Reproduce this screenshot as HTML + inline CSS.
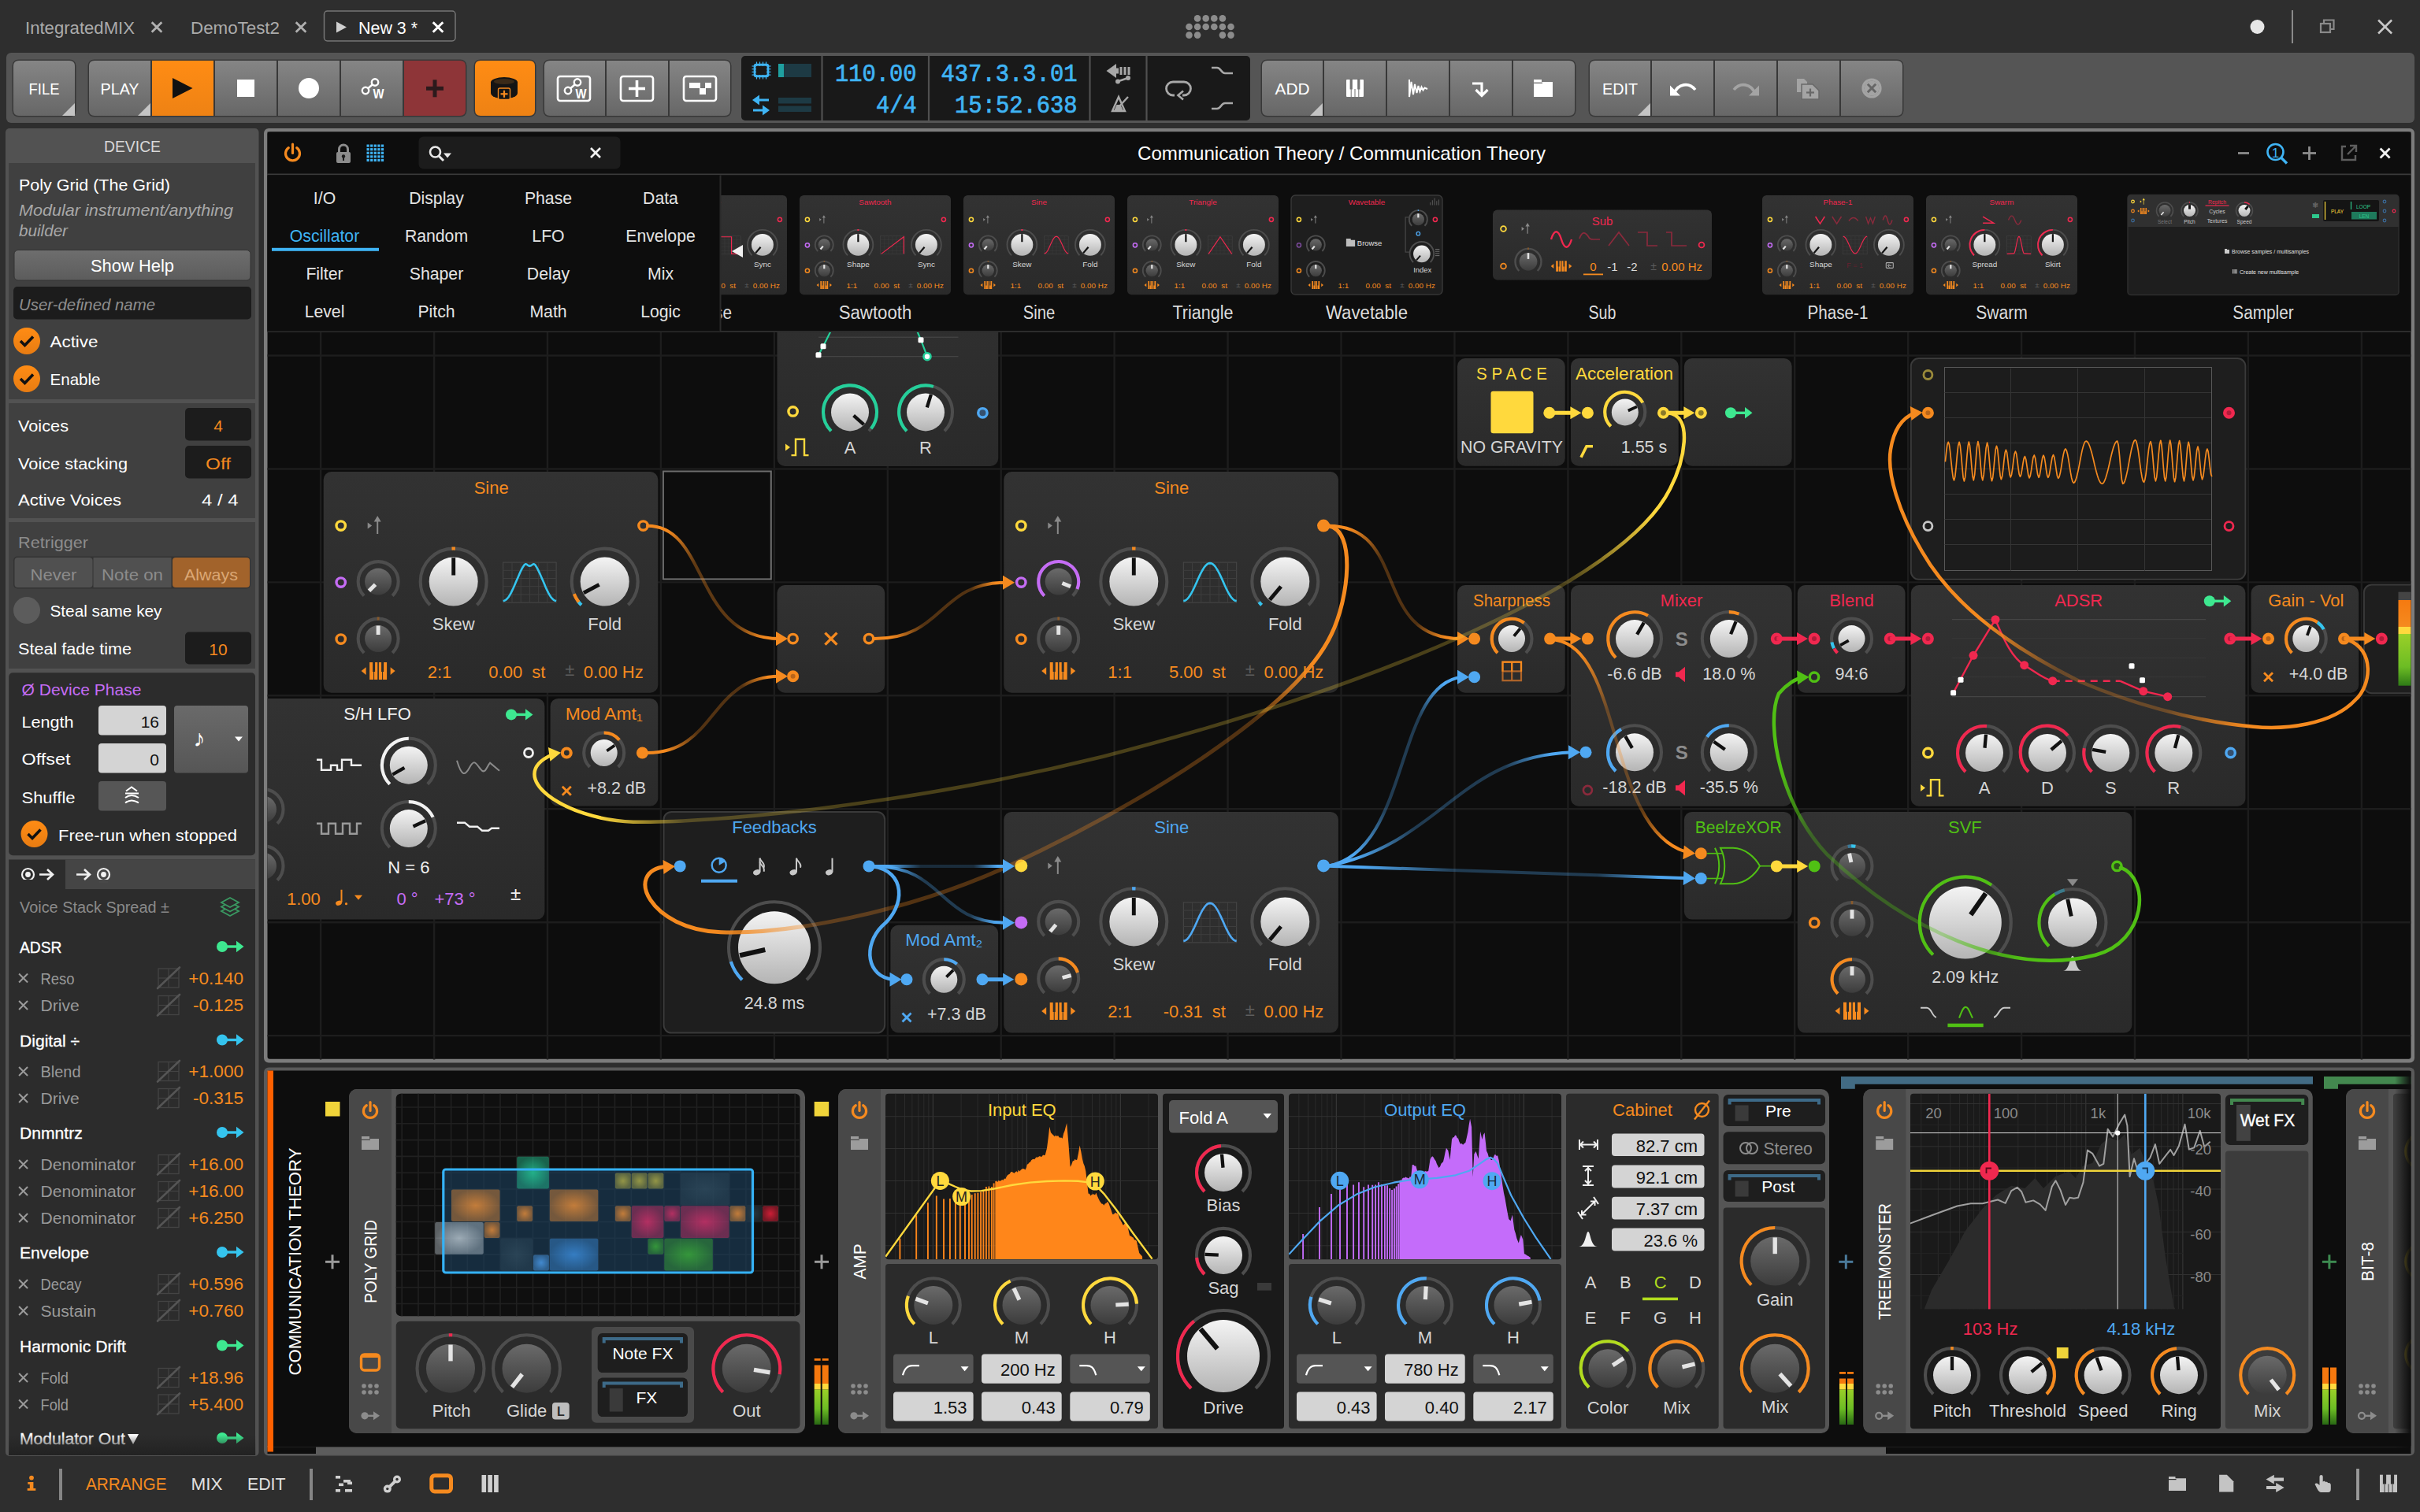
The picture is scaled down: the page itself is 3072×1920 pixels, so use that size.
<!DOCTYPE html>
<html><head><meta charset="utf-8"><title>Bitwig Studio - Poly Grid</title>
<style>
html,body{margin:0;padding:0;background:#2e2e2e;overflow:hidden}
svg{display:block}
text{font-family:"Liberation Sans",sans-serif;white-space:pre}
text.m{font-family:"Liberation Mono",monospace}
</style></head><body>
<svg width="3072" height="1920" viewBox="0 0 3072 1920">
<defs>
<linearGradient id="g1" x1="0" y1="0" x2="0" y2="1"><stop offset="0" stop-color="#858585" stop-opacity="1"/><stop offset="1" stop-color="#676767" stop-opacity="1"/></linearGradient>
<linearGradient id="g2" x1="0" y1="0" x2="0" y2="1"><stop offset="0" stop-color="#ff8c14" stop-opacity="1"/><stop offset="1" stop-color="#ee8214" stop-opacity="1"/></linearGradient>
<linearGradient id="g3" x1="0" y1="0" x2="0" y2="1"><stop offset="0" stop-color="#ff8c14" stop-opacity="1"/><stop offset="1" stop-color="#ee8214" stop-opacity="1"/></linearGradient>
<linearGradient id="g4" x1="0" y1="0" x2="0" y2="1"><stop offset="0" stop-color="#6e6e6e" stop-opacity="1"/><stop offset="1" stop-color="#5c5c5c" stop-opacity="1"/></linearGradient>
<linearGradient id="g5" x1="0" y1="0" x2="0" y2="1"><stop offset="0" stop-color="#ff8c14" stop-opacity="1"/><stop offset="1" stop-color="#e87c12" stop-opacity="1"/></linearGradient>
<linearGradient id="g6" x1="0" y1="0" x2="0" y2="1"><stop offset="0" stop-color="#ff8c14" stop-opacity="1"/><stop offset="1" stop-color="#e87c12" stop-opacity="1"/></linearGradient>
<linearGradient id="g7" x1="0" y1="0" x2="0" y2="1"><stop offset="0" stop-color="#6a6a6a" stop-opacity="1"/><stop offset="1" stop-color="#565656" stop-opacity="1"/></linearGradient>
<linearGradient id="g8" x1="0" y1="0" x2="0" y2="1"><stop offset="0" stop-color="#ff8c14" stop-opacity="1"/><stop offset="1" stop-color="#e87c12" stop-opacity="1"/></linearGradient>
<linearGradient id="g9" x1="0" y1="0" x2="0" y2="1"><stop offset="0" stop-color="#222" stop-opacity="0"/><stop offset="1" stop-color="#222" stop-opacity="1"/></linearGradient>
<linearGradient id="g10" x1="0" y1="0" x2="0" y2="1"><stop offset="0" stop-color="#323232" stop-opacity="1"/><stop offset="1" stop-color="#2a2a2a" stop-opacity="1"/></linearGradient>
<linearGradient id="g11" x1="0" y1="0" x2="0" y2="1"><stop offset="0" stop-color="#f4f4f4" stop-opacity="1"/><stop offset="1" stop-color="#b4b4b4" stop-opacity="1"/></linearGradient>
<linearGradient id="g12" x1="0" y1="0" x2="0" y2="1"><stop offset="0" stop-color="#6a6a6a" stop-opacity="1"/><stop offset="1" stop-color="#3c3c3c" stop-opacity="1"/></linearGradient>
<linearGradient id="g13" x1="0" y1="0" x2="0" y2="1"><stop offset="0" stop-color="#444" stop-opacity="1"/><stop offset="0.09" stop-color="#444" stop-opacity="1"/><stop offset="0.09" stop-color="#f57a10" stop-opacity="1"/><stop offset="0.37" stop-color="#f58a1f" stop-opacity="1"/><stop offset="0.37" stop-color="#ffd93d" stop-opacity="1"/><stop offset="0.45" stop-color="#ffd93d" stop-opacity="1"/><stop offset="0.45" stop-color="#9ad028" stop-opacity="1"/><stop offset="0.8" stop-color="#6cbc24" stop-opacity="1"/><stop offset="1" stop-color="#2e7a16" stop-opacity="1"/></linearGradient>
<linearGradient id="g14" gradientUnits="userSpaceOnUse" x1="822" y1="667" x2="990" y2="810"><stop offset="0" stop-color="#f58a1f" stop-opacity="1.0"/><stop offset="0.1" stop-color="#f58a1f" stop-opacity="1.0"/><stop offset="0.35" stop-color="#f58a1f" stop-opacity="0.35"/><stop offset="0.75" stop-color="#f58a1f" stop-opacity="0.35"/><stop offset="0.93" stop-color="#f58a1f" stop-opacity="1.0"/><stop offset="1" stop-color="#f58a1f" stop-opacity="1.0"/></linearGradient>
<linearGradient id="g15" gradientUnits="userSpaceOnUse" x1="822" y1="955" x2="990" y2="858"><stop offset="0" stop-color="#f58a1f" stop-opacity="1.0"/><stop offset="0.1" stop-color="#f58a1f" stop-opacity="1.0"/><stop offset="0.35" stop-color="#f58a1f" stop-opacity="0.3"/><stop offset="0.75" stop-color="#f58a1f" stop-opacity="0.3"/><stop offset="0.93" stop-color="#f58a1f" stop-opacity="1.0"/><stop offset="1" stop-color="#f58a1f" stop-opacity="1.0"/></linearGradient>
<linearGradient id="g16" gradientUnits="userSpaceOnUse" x1="1110" y1="810" x2="1278" y2="739"><stop offset="0" stop-color="#f58a1f" stop-opacity="1.0"/><stop offset="0.1" stop-color="#f58a1f" stop-opacity="1.0"/><stop offset="0.35" stop-color="#f58a1f" stop-opacity="0.3"/><stop offset="0.75" stop-color="#f58a1f" stop-opacity="0.3"/><stop offset="0.93" stop-color="#f58a1f" stop-opacity="1.0"/><stop offset="1" stop-color="#f58a1f" stop-opacity="1.0"/></linearGradient>
<linearGradient id="g17" gradientUnits="userSpaceOnUse" x1="1686" y1="667" x2="1855" y2="810"><stop offset="0" stop-color="#f58a1f" stop-opacity="1.0"/><stop offset="0.1" stop-color="#f58a1f" stop-opacity="1.0"/><stop offset="0.35" stop-color="#f58a1f" stop-opacity="0.3"/><stop offset="0.75" stop-color="#f58a1f" stop-opacity="0.3"/><stop offset="0.93" stop-color="#f58a1f" stop-opacity="1.0"/><stop offset="1" stop-color="#f58a1f" stop-opacity="1.0"/></linearGradient>
<linearGradient id="g18" gradientUnits="userSpaceOnUse" x1="1700" y1="700" x2="840" y2="1160"><stop offset="0" stop-color="#f58a1f" stop-opacity="1"/><stop offset="0.1" stop-color="#f58a1f" stop-opacity="1"/><stop offset="0.2" stop-color="#f58a1f" stop-opacity="0.3"/><stop offset="0.84" stop-color="#f58a1f" stop-opacity="0.3"/><stop offset="0.95" stop-color="#f58a1f" stop-opacity="1"/><stop offset="1" stop-color="#f58a1f" stop-opacity="1"/></linearGradient>
<linearGradient id="g19" gradientUnits="userSpaceOnUse" x1="2120" y1="560" x2="700" y2="1000"><stop offset="0" stop-color="#ffd93d" stop-opacity="1"/><stop offset="0.03" stop-color="#ffd93d" stop-opacity="1"/><stop offset="0.12" stop-color="#ffd93d" stop-opacity="0.25"/><stop offset="0.9" stop-color="#ffd93d" stop-opacity="0.25"/><stop offset="0.97" stop-color="#ffd93d" stop-opacity="1"/><stop offset="1" stop-color="#ffd93d" stop-opacity="1"/></linearGradient>
<linearGradient id="g20" gradientUnits="userSpaceOnUse" x1="1975" y1="812" x2="2140" y2="1081"><stop offset="0" stop-color="#f58a1f" stop-opacity="1.0"/><stop offset="0.1" stop-color="#f58a1f" stop-opacity="1.0"/><stop offset="0.35" stop-color="#f58a1f" stop-opacity="0.3"/><stop offset="0.75" stop-color="#f58a1f" stop-opacity="0.3"/><stop offset="0.93" stop-color="#f58a1f" stop-opacity="1.0"/><stop offset="1" stop-color="#f58a1f" stop-opacity="1.0"/></linearGradient>
<linearGradient id="g21" gradientUnits="userSpaceOnUse" x1="1686" y1="1099" x2="1855" y2="859"><stop offset="0" stop-color="#4fa8f2" stop-opacity="1.0"/><stop offset="0.1" stop-color="#4fa8f2" stop-opacity="1.0"/><stop offset="0.35" stop-color="#4fa8f2" stop-opacity="0.3"/><stop offset="0.75" stop-color="#4fa8f2" stop-opacity="0.3"/><stop offset="0.93" stop-color="#4fa8f2" stop-opacity="1.0"/><stop offset="1" stop-color="#4fa8f2" stop-opacity="1.0"/></linearGradient>
<linearGradient id="g22" gradientUnits="userSpaceOnUse" x1="1686" y1="1099" x2="1996" y2="955"><stop offset="0" stop-color="#4fa8f2" stop-opacity="1.0"/><stop offset="0.1" stop-color="#4fa8f2" stop-opacity="1.0"/><stop offset="0.35" stop-color="#4fa8f2" stop-opacity="0.3"/><stop offset="0.75" stop-color="#4fa8f2" stop-opacity="0.3"/><stop offset="0.93" stop-color="#4fa8f2" stop-opacity="1.0"/><stop offset="1" stop-color="#4fa8f2" stop-opacity="1.0"/></linearGradient>
<linearGradient id="g23" gradientUnits="userSpaceOnUse" x1="1686" y1="1099" x2="2142" y2="1114"><stop offset="0" stop-color="#4fa8f2" stop-opacity="1.0"/><stop offset="0.1" stop-color="#4fa8f2" stop-opacity="1.0"/><stop offset="0.35" stop-color="#4fa8f2" stop-opacity="0.3"/><stop offset="0.75" stop-color="#4fa8f2" stop-opacity="0.3"/><stop offset="0.93" stop-color="#4fa8f2" stop-opacity="1.0"/><stop offset="1" stop-color="#4fa8f2" stop-opacity="1.0"/></linearGradient>
<linearGradient id="g24" gradientUnits="userSpaceOnUse" x1="1110" y1="1099" x2="1278" y2="1099"><stop offset="0" stop-color="#4fa8f2" stop-opacity="1.0"/><stop offset="0.1" stop-color="#4fa8f2" stop-opacity="1.0"/><stop offset="0.35" stop-color="#4fa8f2" stop-opacity="0.2"/><stop offset="0.75" stop-color="#4fa8f2" stop-opacity="0.2"/><stop offset="0.93" stop-color="#4fa8f2" stop-opacity="1.0"/><stop offset="1" stop-color="#4fa8f2" stop-opacity="1.0"/></linearGradient>
<linearGradient id="g25" gradientUnits="userSpaceOnUse" x1="1110" y1="1099" x2="1278" y2="1171"><stop offset="0" stop-color="#4fa8f2" stop-opacity="1.0"/><stop offset="0.1" stop-color="#4fa8f2" stop-opacity="1.0"/><stop offset="0.35" stop-color="#4fa8f2" stop-opacity="0.3"/><stop offset="0.75" stop-color="#4fa8f2" stop-opacity="0.3"/><stop offset="0.93" stop-color="#4fa8f2" stop-opacity="1.0"/><stop offset="1" stop-color="#4fa8f2" stop-opacity="1.0"/></linearGradient>
<linearGradient id="g26" gradientUnits="userSpaceOnUse" x1="2700" y1="1150" x2="2260" y2="880"><stop offset="0" stop-color="#50c014" stop-opacity="1"/><stop offset="0.15" stop-color="#50c014" stop-opacity="1"/><stop offset="0.35" stop-color="#50c014" stop-opacity="0.35"/><stop offset="0.75" stop-color="#50c014" stop-opacity="0.35"/><stop offset="0.9" stop-color="#50c014" stop-opacity="1"/><stop offset="1" stop-color="#50c014" stop-opacity="1"/></linearGradient>
<linearGradient id="g27" gradientUnits="userSpaceOnUse" x1="3000" y1="900" x2="2400" y2="520"><stop offset="0" stop-color="#f58a1f" stop-opacity="1"/><stop offset="0.16" stop-color="#f58a1f" stop-opacity="1"/><stop offset="0.3" stop-color="#f58a1f" stop-opacity="0.3"/><stop offset="0.5" stop-color="#f58a1f" stop-opacity="0.3"/><stop offset="0.66" stop-color="#f58a1f" stop-opacity="1"/><stop offset="1" stop-color="#f58a1f" stop-opacity="1"/></linearGradient>
<radialGradient id="g28"><stop offset="0" stop-color="#25cf9a" stop-opacity="0.8"/><stop offset="1" stop-color="#25cf9a" stop-opacity="0.44000000000000006"/></radialGradient>
<radialGradient id="g29"><stop offset="0" stop-color="#c8c24a" stop-opacity="0.7"/><stop offset="1" stop-color="#c8c24a" stop-opacity="0.385"/></radialGradient>
<radialGradient id="g30"><stop offset="0" stop-color="#c8c24a" stop-opacity="0.7"/><stop offset="1" stop-color="#c8c24a" stop-opacity="0.385"/></radialGradient>
<radialGradient id="g31"><stop offset="0" stop-color="#c8c24a" stop-opacity="0.7"/><stop offset="1" stop-color="#c8c24a" stop-opacity="0.385"/></radialGradient>
<radialGradient id="g32"><stop offset="0" stop-color="#2c4658" stop-opacity="0.9"/><stop offset="1" stop-color="#2c4658" stop-opacity="0.49500000000000005"/></radialGradient>
<radialGradient id="g33"><stop offset="0" stop-color="#e08a3a" stop-opacity="0.85"/><stop offset="1" stop-color="#e08a3a" stop-opacity="0.4675"/></radialGradient>
<radialGradient id="g34"><stop offset="0" stop-color="#e08a3a" stop-opacity="0.85"/><stop offset="1" stop-color="#e08a3a" stop-opacity="0.4675"/></radialGradient>
<radialGradient id="g35"><stop offset="0" stop-color="#e08a3a" stop-opacity="0.85"/><stop offset="1" stop-color="#e08a3a" stop-opacity="0.4675"/></radialGradient>
<radialGradient id="g36"><stop offset="0" stop-color="#e08a3a" stop-opacity="0.85"/><stop offset="1" stop-color="#e08a3a" stop-opacity="0.4675"/></radialGradient>
<radialGradient id="g37"><stop offset="0" stop-color="#d8306a" stop-opacity="0.8"/><stop offset="1" stop-color="#d8306a" stop-opacity="0.44000000000000006"/></radialGradient>
<radialGradient id="g38"><stop offset="0" stop-color="#d8306a" stop-opacity="0.8"/><stop offset="1" stop-color="#d8306a" stop-opacity="0.44000000000000006"/></radialGradient>
<radialGradient id="g39"><stop offset="0" stop-color="#d8306a" stop-opacity="0.8"/><stop offset="1" stop-color="#d8306a" stop-opacity="0.44000000000000006"/></radialGradient>
<radialGradient id="g40"><stop offset="0" stop-color="#e08a3a" stop-opacity="0.85"/><stop offset="1" stop-color="#e08a3a" stop-opacity="0.4675"/></radialGradient>
<radialGradient id="g41"><stop offset="0" stop-color="#2a3a44" stop-opacity="0.9"/><stop offset="1" stop-color="#2a3a44" stop-opacity="0.49500000000000005"/></radialGradient>
<radialGradient id="g42"><stop offset="0" stop-color="#e0203a" stop-opacity="0.9"/><stop offset="1" stop-color="#e0203a" stop-opacity="0.49500000000000005"/></radialGradient>
<radialGradient id="g43"><stop offset="0" stop-color="#c8d4dc" stop-opacity="0.75"/><stop offset="1" stop-color="#c8d4dc" stop-opacity="0.41250000000000003"/></radialGradient>
<radialGradient id="g44"><stop offset="0" stop-color="#e08a3a" stop-opacity="0.85"/><stop offset="1" stop-color="#e08a3a" stop-opacity="0.4675"/></radialGradient>
<radialGradient id="g45"><stop offset="0" stop-color="#2c4658" stop-opacity="0.9"/><stop offset="1" stop-color="#2c4658" stop-opacity="0.49500000000000005"/></radialGradient>
<radialGradient id="g46"><stop offset="0" stop-color="#4a9ae8" stop-opacity="0.85"/><stop offset="1" stop-color="#4a9ae8" stop-opacity="0.4675"/></radialGradient>
<radialGradient id="g47"><stop offset="0" stop-color="#3a8ad8" stop-opacity="0.85"/><stop offset="1" stop-color="#3a8ad8" stop-opacity="0.4675"/></radialGradient>
<radialGradient id="g48"><stop offset="0" stop-color="#3aa83a" stop-opacity="0.85"/><stop offset="1" stop-color="#3aa83a" stop-opacity="0.4675"/></radialGradient>
<radialGradient id="g49"><stop offset="0" stop-color="#3aa83a" stop-opacity="0.85"/><stop offset="1" stop-color="#3aa83a" stop-opacity="0.4675"/></radialGradient>
<linearGradient id="g50" x1="0" y1="0" x2="0" y2="1"><stop offset="0" stop-color="#9ad028" stop-opacity="1"/><stop offset="0.55" stop-color="#6cbc24" stop-opacity="1"/><stop offset="1" stop-color="#286814" stop-opacity="1"/></linearGradient>
<linearGradient id="g51" x1="0" y1="0" x2="0" y2="1"><stop offset="0" stop-color="#9ad028" stop-opacity="1"/><stop offset="0.55" stop-color="#6cbc24" stop-opacity="1"/><stop offset="1" stop-color="#286814" stop-opacity="1"/></linearGradient>
<linearGradient id="g52" x1="0" y1="0" x2="0" y2="1"><stop offset="0" stop-color="#9ad028" stop-opacity="1"/><stop offset="0.55" stop-color="#6cbc24" stop-opacity="1"/><stop offset="1" stop-color="#286814" stop-opacity="1"/></linearGradient>
<linearGradient id="g53" x1="0" y1="0" x2="1" y2="0"><stop offset="0" stop-color="#0d0d0d" stop-opacity="0"/><stop offset="1" stop-color="#0d0d0d" stop-opacity="1"/></linearGradient>
</defs>
<rect x="0" y="0" width="3072" height="1920" fill="#2e2e2e"/>
<text x="32" y="42.5" font-size="22" fill="#ababab" textLength="139" lengthAdjust="spacingAndGlyphs">IntegratedMIX</text>
<line x1="192.7" y1="28.2" x2="205.3" y2="40.8" stroke="#b0b0b0" stroke-width="2.8" />
<line x1="192.7" y1="40.8" x2="205.3" y2="28.2" stroke="#b0b0b0" stroke-width="2.8" />
<text x="242" y="42.5" font-size="22" fill="#ababab" textLength="113" lengthAdjust="spacingAndGlyphs">DemoTest2</text>
<line x1="375.7" y1="28.2" x2="388.3" y2="40.8" stroke="#b0b0b0" stroke-width="2.8" />
<line x1="375.7" y1="40.8" x2="388.3" y2="28.2" stroke="#b0b0b0" stroke-width="2.8" />
<rect x="411.5" y="14" width="166.5" height="38" rx="4" fill="#2c2c2c" stroke="#767676" stroke-width="1.5"/>
<path d="M427 27.5L440 34.5L427 41.5Z" fill="#d0d0d0"/>
<text x="455" y="42.5" font-size="22" fill="#ffffff" textLength="75" lengthAdjust="spacingAndGlyphs">New 3 *</text>
<line x1="549.7" y1="28.2" x2="562.3" y2="40.8" stroke="#ffffff" stroke-width="3" />
<line x1="549.7" y1="40.8" x2="562.3" y2="28.2" stroke="#ffffff" stroke-width="3" />
<circle cx="1520.1" cy="23.4" r="4.3" fill="#8c8c8c"/>
<circle cx="1530.7" cy="23.4" r="4.3" fill="#8c8c8c"/>
<circle cx="1541.3" cy="23.4" r="4.3" fill="#8c8c8c"/>
<circle cx="1551.9" cy="23.4" r="4.3" fill="#8c8c8c"/>
<circle cx="1509.5" cy="34" r="4.3" fill="#8c8c8c"/>
<circle cx="1520.1" cy="34" r="4.3" fill="#8c8c8c"/>
<circle cx="1530.7" cy="34" r="4.3" fill="#8c8c8c"/>
<circle cx="1541.3" cy="34" r="4.3" fill="#8c8c8c"/>
<circle cx="1551.9" cy="34" r="4.3" fill="#8c8c8c"/>
<circle cx="1562.5" cy="34" r="4.3" fill="#8c8c8c"/>
<circle cx="1509.5" cy="44.6" r="4.3" fill="#8c8c8c"/>
<circle cx="1520.1" cy="44.6" r="4.3" fill="#8c8c8c"/>
<circle cx="1551.9" cy="44.6" r="4.3" fill="#8c8c8c"/>
<circle cx="1562.5" cy="44.6" r="4.3" fill="#8c8c8c"/>
<circle cx="2865.5" cy="34" r="9" fill="#e6e6e6"/>
<line x1="2910" y1="13" x2="2910" y2="55" stroke="#8a8a8a" stroke-width="2" />
<rect x="2946" y="30" width="12" height="11" fill="none" stroke="#8a8a8a" stroke-width="2.2"/>
<path d="M2950 29V25.5H2962.5V37H2959" fill="none" stroke="#8a8a8a" stroke-width="2.2"/>
<line x1="3019.1" y1="25.5" x2="3036.1" y2="42.5" stroke="#c8c8c8" stroke-width="2.6" />
<line x1="3019.1" y1="42.5" x2="3036.1" y2="25.5" stroke="#c8c8c8" stroke-width="2.6" />
<rect x="8" y="67" width="3057" height="89" rx="6" fill="#555555"/>
<rect x="15.5" y="75.5" width="81" height="73" rx="8" fill="#383838"/>
<path d="M24 77H88Q95 77 95 84V140Q95 147 88 147H24Q17 147 17 140V84Q17 77 24 77Z" fill="url(#g1)"/>
<text x="56" y="120" font-size="21" fill="#ffffff" text-anchor="middle" textLength="39" lengthAdjust="spacingAndGlyphs">FILE</text>
<path d="M95 131L95 147L79 147Z" fill="#c4c4c4"/>
<rect x="111.5" y="75.5" width="481" height="73" rx="8" fill="#383838"/>
<path d="M120 77H191V147H120Q113 147 113 140V84Q113 77 120 77Z" fill="url(#g1)"/>
<path d="M193 77H271V147H193V77Z" fill="url(#g2)"/>
<path d="M273 77H351V147H273V77Z" fill="url(#g1)"/>
<path d="M353 77H431V147H353V77Z" fill="url(#g1)"/>
<path d="M433 77H511V147H433V77Z" fill="url(#g1)"/>
<path d="M513 77H584Q591 77 591 84V140Q591 147 584 147H513V77Z" fill="#8e3538"/>
<text x="152" y="120" font-size="21" fill="#ffffff" text-anchor="middle" textLength="49" lengthAdjust="spacingAndGlyphs">PLAY</text>
<path d="M191 131L191 147L175 147Z" fill="#c4c4c4"/>
<path d="M219 99L244.5 112L219 125Z" fill="#111"/>
<rect x="301" y="101" width="22" height="22" fill="#ffffff"/>
<circle cx="392" cy="112" r="13" fill="#ffffff"/>
<line x1="464" y1="115" x2="476" y2="104.5" stroke="#ffffff" stroke-width="2.4" />
<circle cx="464" cy="115" r="4.2" fill="#6c6c6c" stroke="#ffffff" stroke-width="2.4"/>
<circle cx="476" cy="104.5" r="4.2" fill="#6c6c6c" stroke="#ffffff" stroke-width="2.4"/>
<text x="473.5" y="124.5" font-size="16" fill="#ffffff" font-weight="bold" textLength="14" lengthAdjust="spacingAndGlyphs">W</text>
<line x1="541" y1="112.3" x2="563" y2="112.3" stroke="#2c1a1c" stroke-width="5" />
<line x1="552" y1="101.3" x2="552" y2="123.3" stroke="#2c1a1c" stroke-width="5" />
<rect x="601.5" y="75.5" width="79" height="73" rx="8" fill="#383838"/>
<path d="M610 77H672Q679 77 679 84V140Q679 147 672 147H610Q603 147 603 140V84Q603 77 610 77Z" fill="url(#g3)"/>
<path d="M623 104.5 V118 A17 7.5 0 0 0 657 118 V104.5Z" fill="#141414"/>
<ellipse cx="640" cy="104.5" rx="17" ry="6.5" fill="#141414"/>
<ellipse cx="640" cy="103.5" rx="13" ry="3.6" fill="#3a2a18"/>
<rect x="632.5" y="112" width="15" height="14.5" rx="2" fill="#141414" stroke="#f58a1f" stroke-width="1.4"/>
<line x1="635.5" y1="119.3" x2="644.5" y2="119.3" stroke="#f58a1f" stroke-width="2.2" />
<line x1="640" y1="114.8" x2="640" y2="123.8" stroke="#f58a1f" stroke-width="2.2" />
<rect x="689.5" y="75.5" width="239" height="73" rx="8" fill="#383838"/>
<path d="M698 77H768V147H698Q691 147 691 140V84Q691 77 698 77Z" fill="url(#g1)"/>
<path d="M770 77H848V147H770V77Z" fill="url(#g1)"/>
<path d="M850 77H920Q927 77 927 84V140Q927 147 920 147H850V77Z" fill="url(#g1)"/>
<rect x="708" y="97" width="41" height="31" rx="3" fill="none" stroke="#ffffff" stroke-width="2.6"/>
<line x1="721" y1="115" x2="733" y2="104.5" stroke="#ffffff" stroke-width="2.4" />
<circle cx="721" cy="115" r="4.2" fill="#6c6c6c" stroke="#ffffff" stroke-width="2.4"/>
<circle cx="733" cy="104.5" r="4.2" fill="#6c6c6c" stroke="#ffffff" stroke-width="2.4"/>
<text x="730.5" y="124.5" font-size="16" fill="#ffffff" font-weight="bold" textLength="14" lengthAdjust="spacingAndGlyphs">W</text>
<rect x="788" y="97" width="41" height="31" rx="3" fill="none" stroke="#ffffff" stroke-width="2.6"/>
<line x1="798" y1="112.5" x2="819" y2="112.5" stroke="#ffffff" stroke-width="3.6" />
<line x1="808.5" y1="102" x2="808.5" y2="123" stroke="#ffffff" stroke-width="3.6" />
<rect x="868" y="97" width="41" height="31" rx="3" fill="none" stroke="#ffffff" stroke-width="2.6"/>
<rect x="875" y="105" width="14" height="7" fill="#ffffff"/>
<rect x="888" y="112" width="8" height="8" fill="#ffffff"/>
<rect x="895" y="105" width="8" height="7" fill="#ffffff"/>
<rect x="941" y="71" width="646" height="82" rx="5" fill="#191919"/>
<line x1="1043.5" y1="71" x2="1043.5" y2="153" stroke="#505050" stroke-width="2.2" />
<line x1="1179" y1="71" x2="1179" y2="153" stroke="#505050" stroke-width="2.2" />
<line x1="1383.5" y1="71" x2="1383.5" y2="153" stroke="#505050" stroke-width="2.2" />
<line x1="1455.5" y1="71" x2="1455.5" y2="153" stroke="#505050" stroke-width="2.2" />
<rect x="958" y="82" width="17" height="15" rx="2" fill="none" stroke="#3fb4f4" stroke-width="2.6"/>
<line x1="960.5" y1="78.5" x2="960.5" y2="100.5" stroke="#3fb4f4" stroke-width="1.2" />
<line x1="954.5" y1="84" x2="978.5" y2="84" stroke="#3fb4f4" stroke-width="1.2" />
<line x1="964.5" y1="78.5" x2="964.5" y2="100.5" stroke="#3fb4f4" stroke-width="1.2" />
<line x1="954.5" y1="87.7" x2="978.5" y2="87.7" stroke="#3fb4f4" stroke-width="1.2" />
<line x1="968.5" y1="78.5" x2="968.5" y2="100.5" stroke="#3fb4f4" stroke-width="1.2" />
<line x1="954.5" y1="91.4" x2="978.5" y2="91.4" stroke="#3fb4f4" stroke-width="1.2" />
<line x1="972.5" y1="78.5" x2="972.5" y2="100.5" stroke="#3fb4f4" stroke-width="1.2" />
<line x1="954.5" y1="95.1" x2="978.5" y2="95.1" stroke="#3fb4f4" stroke-width="1.2" />
<rect x="960" y="84" width="13" height="11" fill="#191919"/>
<rect x="988" y="81" width="7" height="17" fill="#1fa0a0"/>
<rect x="995" y="81" width="35" height="17" fill="#1d3a44"/>
<line x1="962" y1="127" x2="976" y2="127" stroke="#3fb4f4" stroke-width="3" />
<path d="M955 127L964 120.5V133.5Z" fill="#3fb4f4"/>
<line x1="956" y1="140" x2="970" y2="140" stroke="#3fb4f4" stroke-width="3" />
<path d="M977 140L968 133.5V146.5Z" fill="#3fb4f4"/>
<rect x="988" y="124" width="42" height="7.5" fill="#1d3a44"/>
<rect x="988" y="134.5" width="42" height="7.5" fill="#1d3a44"/>
<text x="1060" y="102.5" font-size="30.5" fill="#3fb4f4" class="m" textLength="103.5" lengthAdjust="spacingAndGlyphs" stroke="#3fb4f4" stroke-width="0.7">110.00</text>
<text x="1163.6" y="142.5" font-size="30.5" fill="#3fb4f4" text-anchor="end" class="m" textLength="51.5" lengthAdjust="spacingAndGlyphs" stroke="#3fb4f4" stroke-width="0.7">4/4</text>
<text x="1194.5" y="102.5" font-size="30.5" fill="#3fb4f4" class="m" textLength="173" lengthAdjust="spacingAndGlyphs" stroke="#3fb4f4" stroke-width="0.7">437.3.3.01</text>
<text x="1367.6" y="142.5" font-size="30.5" fill="#3fb4f4" text-anchor="end" class="m" textLength="155.5" lengthAdjust="spacingAndGlyphs" stroke="#3fb4f4" stroke-width="0.7">15:52.638</text>
<path d="M1404.5 90L1417 81V86.5H1420V93.5H1417V99Z" fill="#a8a8a8"/>
<rect x="1421.5" y="85" width="3" height="10" fill="#a8a8a8"/>
<rect x="1426.5" y="85" width="3" height="10" fill="#a8a8a8"/>
<rect x="1431.5" y="85" width="3" height="10" fill="#a8a8a8"/>
<line x1="1420" y1="103" x2="1432" y2="99" stroke="#a8a8a8" stroke-width="2.4" />
<circle cx="1419" cy="103.5" r="3" fill="#a8a8a8"/>
<circle cx="1432" cy="99" r="3" fill="#a8a8a8"/>
<path d="M1412 141L1420 123L1428 141Z M1420 136L1432 123" fill="none" stroke="#a8a8a8" stroke-width="2.4"/>
<path d="M1414 141L1417.5 133H1422.5L1426 141Z" fill="#a8a8a8"/>
<rect x="1480.5" y="104" width="31" height="17" rx="8.5" fill="none" stroke="#a8a8a8" stroke-width="2.8"/>
<rect x="1491" y="117" width="10" height="7" fill="#191919"/>
<path d="M1502 115.5L1495.5 121L1502 126.5" fill="none" stroke="#a8a8a8" stroke-width="2.6"/>
<path d="M1538 86H1545C1550 86 1550 93 1555 93H1565" fill="none" stroke="#a8a8a8" stroke-width="2.6"/>
<path d="M1538 138H1545C1550 138 1550 131 1555 131H1565" fill="none" stroke="#a8a8a8" stroke-width="2.6"/>
<rect x="1600.5" y="75.5" width="400" height="73" rx="8" fill="#383838"/>
<path d="M1609 77H1679V147H1609Q1602 147 1602 140V84Q1602 77 1609 77Z" fill="url(#g1)"/>
<path d="M1681 77H1759V147H1681V77Z" fill="url(#g1)"/>
<path d="M1761 77H1839V147H1761V77Z" fill="url(#g1)"/>
<path d="M1841 77H1919V147H1841V77Z" fill="url(#g1)"/>
<path d="M1921 77H1992Q1999 77 1999 84V140Q1999 147 1992 147H1921V77Z" fill="url(#g1)"/>
<text x="1640.5" y="120" font-size="21" fill="#ffffff" text-anchor="middle" textLength="44" lengthAdjust="spacingAndGlyphs">ADD</text>
<path d="M1679 131L1679 147L1663 147Z" fill="#c4c4c4"/>
<rect x="1709" y="101" width="22" height="22" rx="1" fill="#ffffff"/>
<rect x="1713.6" y="100" width="3.2" height="13.5" fill="#727272"/>
<rect x="1723.2" y="100" width="3.2" height="13.5" fill="#727272"/>
<rect x="1714.7" y="113" width="1" height="10" fill="#727272"/>
<rect x="1719.5" y="113" width="1" height="10" fill="#727272"/>
<rect x="1724.3" y="113" width="1" height="10" fill="#727272"/>
<path d="M1789 101L1789 123L1791.5 104L1794 120L1796 107L1798.5 118L1800.5 109L1802.5 116L1804.5 110.5L1806.5 114.5L1808.5 111.5L1812 113" fill="none" stroke="#ffffff" stroke-width="2"/>
<path d="M1869 106H1881V121M1873.5 114L1881 121.5L1888.5 114" fill="none" stroke="#ffffff" stroke-width="3.2"/>
<path d="M1947 101H1957V104H1971V123H1947Z" fill="#ffffff"/>
<line x1="1947" y1="105.3" x2="1958" y2="105.3" stroke="#6c6c6c" stroke-width="1.3" />
<rect x="2016.5" y="75.5" width="400" height="73" rx="8" fill="#383838"/>
<path d="M2025 77H2095V147H2025Q2018 147 2018 140V84Q2018 77 2025 77Z" fill="url(#g1)"/>
<path d="M2097 77H2175V147H2097V77Z" fill="url(#g1)"/>
<path d="M2177 77H2255V147H2177V77Z" fill="url(#g1)"/>
<path d="M2257 77H2335V147H2257V77Z" fill="url(#g1)"/>
<path d="M2337 77H2408Q2415 77 2415 84V140Q2415 147 2408 147H2337V77Z" fill="url(#g1)"/>
<text x="2056.5" y="120" font-size="21" fill="#ffffff" text-anchor="middle" textLength="45" lengthAdjust="spacingAndGlyphs">EDIT</text>
<path d="M2095 131L2095 147L2079 147Z" fill="#c4c4c4"/>
<path d="M2125 119C2130 106 2144 104 2152 114" fill="none" stroke="#ffffff" stroke-width="3.6"/>
<path d="M2120 108.5V121.5H2133Z" fill="#ffffff"/>
<path d="M2201 114C2209 104 2223 106 2228 119" fill="none" stroke="#a4a4a4" stroke-width="3.6"/>
<path d="M2233 108.5V121.5H2220Z" fill="#a4a4a4"/>
<path d="M2281 100H2290L2294 104V117H2281Z" fill="#a4a4a4"/>
<path d="M2287 107H2301L2309 115V126H2287Z" fill="#a4a4a4" stroke="#686868" stroke-width="1.5"/>
<line x1="2293" y1="117.5" x2="2303" y2="117.5" stroke="#686868" stroke-width="2.2" />
<line x1="2298" y1="112.5" x2="2298" y2="122.5" stroke="#686868" stroke-width="2.2" />
<circle cx="2376" cy="112" r="11" fill="none" stroke="#a4a4a4" stroke-width="3.2"/>
<line x1="2369.5" y1="105.5" x2="2382.5" y2="118.5" stroke="#a4a4a4" stroke-width="3.2" />
<line x1="2369.5" y1="118.5" x2="2382.5" y2="105.5" stroke="#a4a4a4" stroke-width="3.2" />
<circle cx="2376" cy="112" r="9.4" fill="#a4a4a4"/>
<line x1="2370.8" y1="106.8" x2="2381.2" y2="117.2" stroke="#666" stroke-width="3" />
<line x1="2370.8" y1="117.2" x2="2381.2" y2="106.8" stroke="#666" stroke-width="3" />
<rect x="7" y="163" width="321.5" height="1686" rx="5" fill="#525252"/>
<text x="168" y="193" font-size="21" fill="#d8d8d8" text-anchor="middle" textLength="72" lengthAdjust="spacingAndGlyphs">DEVICE</text>
<rect x="11.2" y="207" width="312.8" height="300" fill="#404040"/>
<rect x="11.2" y="512" width="312.8" height="146" fill="#404040"/>
<rect x="11.2" y="663" width="312.8" height="186" fill="#404040"/>
<rect x="11.2" y="854.3" width="312.8" height="232" rx="5" fill="#2c2c2c"/>
<text x="24" y="242" font-size="21" fill="#ffffff" textLength="192" lengthAdjust="spacingAndGlyphs">Poly Grid (The Grid)</text>
<text x="24" y="274" font-size="21" fill="#a8a8a8" font-style="italic" textLength="272" lengthAdjust="spacingAndGlyphs">Modular instrument/anything</text>
<text x="24" y="299.5" font-size="21" fill="#a8a8a8" font-style="italic" textLength="62" lengthAdjust="spacingAndGlyphs">builder</text>
<rect x="18" y="317.5" width="300" height="38.5" rx="5" fill="url(#g4)" stroke="#333" stroke-width="1"/>
<text x="168" y="345" font-size="22" fill="#ffffff" text-anchor="middle" textLength="106" lengthAdjust="spacingAndGlyphs">Show Help</text>
<rect x="17" y="364" width="302" height="41.5" rx="5" fill="#1c1c1c"/>
<text x="24" y="394" font-size="21" fill="#8e8e8e" font-style="italic" textLength="173" lengthAdjust="spacingAndGlyphs">User-defined name</text>
<circle cx="34" cy="433" r="17" fill="url(#g5)"/>
<path d="M26 433L31.5 438.5L42 427.5" fill="none" stroke="#111" stroke-width="3.6"/>
<text x="63.5" y="441" font-size="21" fill="#ffffff" textLength="61" lengthAdjust="spacingAndGlyphs">Active</text>
<circle cx="34" cy="481" r="17" fill="url(#g6)"/>
<path d="M26 481L31.5 486.5L42 475.5" fill="none" stroke="#111" stroke-width="3.6"/>
<text x="63.5" y="489" font-size="21" fill="#ffffff" textLength="64" lengthAdjust="spacingAndGlyphs">Enable</text>
<text x="23" y="547.5" font-size="21" fill="#ffffff" textLength="64" lengthAdjust="spacingAndGlyphs">Voices</text>
<rect x="235" y="518" width="84" height="41.5" rx="5" fill="#1c1c1c"/>
<text x="277" y="548" font-size="21" fill="#f58a1f" text-anchor="middle">4</text>
<text x="23" y="595.5" font-size="21" fill="#ffffff" textLength="139" lengthAdjust="spacingAndGlyphs">Voice stacking</text>
<rect x="235" y="566" width="84" height="41.5" rx="5" fill="#1c1c1c"/>
<text x="277" y="596" font-size="21" fill="#f58a1f" text-anchor="middle" textLength="32" lengthAdjust="spacingAndGlyphs">Off</text>
<text x="23" y="641.5" font-size="21" fill="#ffffff" textLength="131" lengthAdjust="spacingAndGlyphs">Active Voices</text>
<text x="256" y="641.5" font-size="21" fill="#ffffff" textLength="46.5" lengthAdjust="spacingAndGlyphs">4 / 4</text>
<text x="23" y="696" font-size="21" fill="#8c8c8c" textLength="89" lengthAdjust="spacingAndGlyphs">Retrigger</text>
<rect x="17" y="706.5" width="301" height="41" rx="5" fill="#333"/>
<rect x="18.5" y="708" width="99" height="38" rx="4" fill="#505050"/>
<rect x="118.5" y="708" width="99" height="38" fill="#505050"/>
<rect x="219" y="708" width="98" height="38" rx="4" fill="#a2632b"/>
<text x="68" y="737" font-size="21" fill="#8c8c8c" text-anchor="middle" textLength="59" lengthAdjust="spacingAndGlyphs">Never</text>
<text x="168" y="737" font-size="21" fill="#8c8c8c" text-anchor="middle" textLength="78" lengthAdjust="spacingAndGlyphs">Note on</text>
<text x="268" y="737" font-size="21" fill="#dba774" text-anchor="middle" textLength="68" lengthAdjust="spacingAndGlyphs">Always</text>
<circle cx="34" cy="775" r="17" fill="#5c5c5c"/>
<text x="63.5" y="783" font-size="21" fill="#ffffff" textLength="142" lengthAdjust="spacingAndGlyphs">Steal same key</text>
<text x="23" y="831" font-size="21" fill="#ffffff" textLength="144" lengthAdjust="spacingAndGlyphs">Steal fade time</text>
<rect x="235" y="802.5" width="84" height="41" rx="5" fill="#1c1c1c"/>
<text x="277" y="832" font-size="21" fill="#f58a1f" text-anchor="middle">10</text>
<text x="27.5" y="883" font-size="21" fill="#c56cf5" textLength="152" lengthAdjust="spacingAndGlyphs">Ø Device Phase</text>
<text x="27.5" y="923.5" font-size="21" fill="#ffffff" textLength="66" lengthAdjust="spacingAndGlyphs">Length</text>
<rect x="125" y="896" width="86" height="37.5" rx="4" fill="#d4d4d4"/>
<text x="202" y="924" font-size="21" fill="#111" text-anchor="end">16</text>
<text x="27.5" y="971" font-size="21" fill="#ffffff" textLength="62" lengthAdjust="spacingAndGlyphs">Offset</text>
<rect x="125" y="944" width="86" height="37.5" rx="4" fill="#d4d4d4"/>
<text x="202" y="972" font-size="21" fill="#111" text-anchor="end">0</text>
<rect x="221" y="896" width="94" height="85.5" rx="4" fill="url(#g7)"/>
<text x="253" y="948" font-size="30" fill="#ffffff" text-anchor="middle">♪</text>
<path d="M298 935.5H308L303 941.5Z" fill="#ffffff"/>
<text x="27.5" y="1019.5" font-size="21" fill="#ffffff" textLength="68" lengthAdjust="spacingAndGlyphs">Shuffle</text>
<rect x="125" y="992" width="86" height="37.5" rx="4" fill="#565656"/>
<path d="M160 1004.5L167 999.5L174 1004.5M159 1013C164 1009 170 1009 176 1013M159 1019.5C164 1015.5 170 1015.5 176 1019.5" fill="none" stroke="#ffffff" stroke-width="2"/>
<line x1="159" y1="1007.5" x2="176" y2="1007.5" stroke="#ffffff" stroke-width="2" />
<circle cx="43.5" cy="1059" r="17" fill="url(#g8)"/>
<path d="M35.5 1059L41 1064.5L51.5 1053.5" fill="none" stroke="#111" stroke-width="3.6"/>
<text x="74" y="1067.5" font-size="21" fill="#ffffff" textLength="227" lengthAdjust="spacingAndGlyphs">Free-run when stopped</text>
<rect x="11.2" y="1091.5" width="312.8" height="756.5" fill="#2c2c2c"/>
<rect x="83" y="1091.5" width="241" height="37.5" fill="#454545"/>
<circle cx="35.5" cy="1110.5" r="7.5" fill="none" stroke="#f0f0f0" stroke-width="2.2"/>
<circle cx="35.5" cy="1110.5" r="3.4" fill="#f0f0f0"/>
<rect x="30" y="1117" width="11" height="4" fill="#2c2c2c"/>
<path d="M50 1110.5H66M60 1104L67 1110.5L60 1117" fill="none" stroke="#f0f0f0" stroke-width="2.6"/>
<path d="M97 1110.5H113M107 1104L114 1110.5L107 1117" fill="none" stroke="#f0f0f0" stroke-width="2.6"/>
<circle cx="131.5" cy="1110.5" r="7.5" fill="none" stroke="#f0f0f0" stroke-width="2.2"/>
<circle cx="131.5" cy="1110.5" r="3.4" fill="#f0f0f0"/>
<rect x="126" y="1117" width="11" height="4" fill="#484848"/>
<text x="25" y="1159" font-size="20.5" fill="#8a8a8a" textLength="190" lengthAdjust="spacingAndGlyphs">Voice Stack Spread ±</text>
<path d="M281 1157L292 1151L303 1157L292 1163Z" fill="#2c2c2c" stroke="#3a9a62" stroke-width="1.8"/>
<path d="M281 1151.5L292 1145.5L303 1151.5L292 1157.5Z" fill="#2c2c2c" stroke="#3a9a62" stroke-width="1.8"/>
<path d="M281 1146L292 1140L303 1146L292 1152Z" fill="#2c2c2c" stroke="#3a9a62" stroke-width="1.8"/>
<text x="25" y="1210" font-size="20.5" fill="#ffffff" textLength="53.5" lengthAdjust="spacingAndGlyphs" stroke="#fff" stroke-width="0.3">ADSR</text>
<circle cx="282" cy="1202" r="7" fill="#3ee890"/>
<line x1="282" y1="1202" x2="301" y2="1202" stroke="#3ee890" stroke-width="3.4" />
<path d="M300 1194.8L309.5 1202L300 1209.2Z" fill="#3ee890"/>
<line x1="24.1" y1="1236.5" x2="35.1" y2="1247.5" stroke="#9a9a9a" stroke-width="2" />
<line x1="24.1" y1="1247.5" x2="35.1" y2="1236.5" stroke="#9a9a9a" stroke-width="2" />
<text x="51.5" y="1249.5" font-size="20.5" fill="#9a9a9a" textLength="43" lengthAdjust="spacingAndGlyphs">Reso</text>
<rect x="201" y="1230" width="26" height="24" fill="none" stroke="#444" stroke-width="1.3"/>
<line x1="214" y1="1230" x2="214" y2="1254" stroke="#444" stroke-width="1.2" />
<line x1="201" y1="1242" x2="227" y2="1242" stroke="#444" stroke-width="1.2" />
<line x1="200" y1="1255" x2="228" y2="1228.5" stroke="#555" stroke-width="2.6" stroke-linecap="round"/>
<text x="309" y="1249.5" font-size="21.5" fill="#f58a1f" text-anchor="end" textLength="69.7" lengthAdjust="spacingAndGlyphs">+0.140</text>
<line x1="24.1" y1="1271" x2="35.1" y2="1282" stroke="#9a9a9a" stroke-width="2" />
<line x1="24.1" y1="1282" x2="35.1" y2="1271" stroke="#9a9a9a" stroke-width="2" />
<text x="51.5" y="1284" font-size="20.5" fill="#9a9a9a" textLength="49.3" lengthAdjust="spacingAndGlyphs">Drive</text>
<rect x="201" y="1264.5" width="26" height="24" fill="none" stroke="#444" stroke-width="1.3"/>
<line x1="214" y1="1264.5" x2="214" y2="1288.5" stroke="#444" stroke-width="1.2" />
<line x1="201" y1="1276.5" x2="227" y2="1276.5" stroke="#444" stroke-width="1.2" />
<line x1="200" y1="1289.5" x2="228" y2="1263" stroke="#555" stroke-width="2.6" stroke-linecap="round"/>
<text x="309" y="1284" font-size="21.5" fill="#f58a1f" text-anchor="end" textLength="64" lengthAdjust="spacingAndGlyphs">-0.125</text>
<text x="25" y="1328.5" font-size="20.5" fill="#ffffff" textLength="76.1" lengthAdjust="spacingAndGlyphs" stroke="#fff" stroke-width="0.3">Digital ÷</text>
<circle cx="282" cy="1320.5" r="7" fill="#35c4ee"/>
<line x1="282" y1="1320.5" x2="301" y2="1320.5" stroke="#35c4ee" stroke-width="3.4" />
<path d="M300 1313.3L309.5 1320.5L300 1327.7Z" fill="#35c4ee"/>
<line x1="24.1" y1="1355" x2="35.1" y2="1366" stroke="#9a9a9a" stroke-width="2" />
<line x1="24.1" y1="1366" x2="35.1" y2="1355" stroke="#9a9a9a" stroke-width="2" />
<text x="51.5" y="1368" font-size="20.5" fill="#9a9a9a" textLength="51" lengthAdjust="spacingAndGlyphs">Blend</text>
<rect x="201" y="1348.5" width="26" height="24" fill="none" stroke="#444" stroke-width="1.3"/>
<line x1="214" y1="1348.5" x2="214" y2="1372.5" stroke="#444" stroke-width="1.2" />
<line x1="201" y1="1360.5" x2="227" y2="1360.5" stroke="#444" stroke-width="1.2" />
<line x1="200" y1="1373.5" x2="228" y2="1347" stroke="#555" stroke-width="2.6" stroke-linecap="round"/>
<text x="309" y="1368" font-size="21.5" fill="#f58a1f" text-anchor="end" textLength="69.7" lengthAdjust="spacingAndGlyphs">+1.000</text>
<line x1="24.1" y1="1389" x2="35.1" y2="1400" stroke="#9a9a9a" stroke-width="2" />
<line x1="24.1" y1="1400" x2="35.1" y2="1389" stroke="#9a9a9a" stroke-width="2" />
<text x="51.5" y="1402" font-size="20.5" fill="#9a9a9a" textLength="49.3" lengthAdjust="spacingAndGlyphs">Drive</text>
<rect x="201" y="1382.5" width="26" height="24" fill="none" stroke="#444" stroke-width="1.3"/>
<line x1="214" y1="1382.5" x2="214" y2="1406.5" stroke="#444" stroke-width="1.2" />
<line x1="201" y1="1394.5" x2="227" y2="1394.5" stroke="#444" stroke-width="1.2" />
<line x1="200" y1="1407.5" x2="228" y2="1381" stroke="#555" stroke-width="2.6" stroke-linecap="round"/>
<text x="309" y="1402" font-size="21.5" fill="#f58a1f" text-anchor="end" textLength="64" lengthAdjust="spacingAndGlyphs">-0.315</text>
<text x="25" y="1446" font-size="20.5" fill="#ffffff" textLength="79.8" lengthAdjust="spacingAndGlyphs" stroke="#fff" stroke-width="0.3">Dnmntrz</text>
<circle cx="282" cy="1438" r="7" fill="#35c4ee"/>
<line x1="282" y1="1438" x2="301" y2="1438" stroke="#35c4ee" stroke-width="3.4" />
<path d="M300 1430.8L309.5 1438L300 1445.2Z" fill="#35c4ee"/>
<line x1="24.1" y1="1473" x2="35.1" y2="1484" stroke="#9a9a9a" stroke-width="2" />
<line x1="24.1" y1="1484" x2="35.1" y2="1473" stroke="#9a9a9a" stroke-width="2" />
<text x="51.5" y="1486" font-size="20.5" fill="#9a9a9a" textLength="120.9" lengthAdjust="spacingAndGlyphs">Denominator</text>
<rect x="201" y="1466.5" width="26" height="24" fill="none" stroke="#444" stroke-width="1.3"/>
<line x1="214" y1="1466.5" x2="214" y2="1490.5" stroke="#444" stroke-width="1.2" />
<line x1="201" y1="1478.5" x2="227" y2="1478.5" stroke="#444" stroke-width="1.2" />
<line x1="200" y1="1491.5" x2="228" y2="1465" stroke="#555" stroke-width="2.6" stroke-linecap="round"/>
<text x="309" y="1486" font-size="21.5" fill="#f58a1f" text-anchor="end" textLength="69.7" lengthAdjust="spacingAndGlyphs">+16.00</text>
<line x1="24.1" y1="1507" x2="35.1" y2="1518" stroke="#9a9a9a" stroke-width="2" />
<line x1="24.1" y1="1518" x2="35.1" y2="1507" stroke="#9a9a9a" stroke-width="2" />
<text x="51.5" y="1520" font-size="20.5" fill="#9a9a9a" textLength="120.9" lengthAdjust="spacingAndGlyphs">Denominator</text>
<rect x="201" y="1500.5" width="26" height="24" fill="none" stroke="#444" stroke-width="1.3"/>
<line x1="214" y1="1500.5" x2="214" y2="1524.5" stroke="#444" stroke-width="1.2" />
<line x1="201" y1="1512.5" x2="227" y2="1512.5" stroke="#444" stroke-width="1.2" />
<line x1="200" y1="1525.5" x2="228" y2="1499" stroke="#555" stroke-width="2.6" stroke-linecap="round"/>
<text x="309" y="1520" font-size="21.5" fill="#f58a1f" text-anchor="end" textLength="69.7" lengthAdjust="spacingAndGlyphs">+16.00</text>
<line x1="24.1" y1="1541" x2="35.1" y2="1552" stroke="#9a9a9a" stroke-width="2" />
<line x1="24.1" y1="1552" x2="35.1" y2="1541" stroke="#9a9a9a" stroke-width="2" />
<text x="51.5" y="1554" font-size="20.5" fill="#9a9a9a" textLength="120.9" lengthAdjust="spacingAndGlyphs">Denominator</text>
<rect x="201" y="1534.5" width="26" height="24" fill="none" stroke="#444" stroke-width="1.3"/>
<line x1="214" y1="1534.5" x2="214" y2="1558.5" stroke="#444" stroke-width="1.2" />
<line x1="201" y1="1546.5" x2="227" y2="1546.5" stroke="#444" stroke-width="1.2" />
<line x1="200" y1="1559.5" x2="228" y2="1533" stroke="#555" stroke-width="2.6" stroke-linecap="round"/>
<text x="309" y="1554" font-size="21.5" fill="#f58a1f" text-anchor="end" textLength="69.7" lengthAdjust="spacingAndGlyphs">+6.250</text>
<text x="25" y="1598" font-size="20.5" fill="#ffffff" textLength="88.1" lengthAdjust="spacingAndGlyphs" stroke="#fff" stroke-width="0.3">Envelope</text>
<circle cx="282" cy="1590" r="7" fill="#35c4ee"/>
<line x1="282" y1="1590" x2="301" y2="1590" stroke="#35c4ee" stroke-width="3.4" />
<path d="M300 1582.8L309.5 1590L300 1597.2Z" fill="#35c4ee"/>
<line x1="24.1" y1="1625" x2="35.1" y2="1636" stroke="#9a9a9a" stroke-width="2" />
<line x1="24.1" y1="1636" x2="35.1" y2="1625" stroke="#9a9a9a" stroke-width="2" />
<text x="51.5" y="1638" font-size="20.5" fill="#9a9a9a" textLength="52" lengthAdjust="spacingAndGlyphs">Decay</text>
<rect x="201" y="1618.5" width="26" height="24" fill="none" stroke="#444" stroke-width="1.3"/>
<line x1="214" y1="1618.5" x2="214" y2="1642.5" stroke="#444" stroke-width="1.2" />
<line x1="201" y1="1630.5" x2="227" y2="1630.5" stroke="#444" stroke-width="1.2" />
<line x1="200" y1="1643.5" x2="228" y2="1617" stroke="#555" stroke-width="2.6" stroke-linecap="round"/>
<text x="309" y="1638" font-size="21.5" fill="#f58a1f" text-anchor="end" textLength="69.7" lengthAdjust="spacingAndGlyphs">+0.596</text>
<line x1="24.1" y1="1659" x2="35.1" y2="1670" stroke="#9a9a9a" stroke-width="2" />
<line x1="24.1" y1="1670" x2="35.1" y2="1659" stroke="#9a9a9a" stroke-width="2" />
<text x="51.5" y="1672" font-size="20.5" fill="#9a9a9a" textLength="70.4" lengthAdjust="spacingAndGlyphs">Sustain</text>
<rect x="201" y="1652.5" width="26" height="24" fill="none" stroke="#444" stroke-width="1.3"/>
<line x1="214" y1="1652.5" x2="214" y2="1676.5" stroke="#444" stroke-width="1.2" />
<line x1="201" y1="1664.5" x2="227" y2="1664.5" stroke="#444" stroke-width="1.2" />
<line x1="200" y1="1677.5" x2="228" y2="1651" stroke="#555" stroke-width="2.6" stroke-linecap="round"/>
<text x="309" y="1672" font-size="21.5" fill="#f58a1f" text-anchor="end" textLength="69.7" lengthAdjust="spacingAndGlyphs">+0.760</text>
<text x="25" y="1716.5" font-size="20.5" fill="#ffffff" textLength="134.9" lengthAdjust="spacingAndGlyphs" stroke="#fff" stroke-width="0.3">Harmonic Drift</text>
<circle cx="282" cy="1708.5" r="7" fill="#3ee890"/>
<line x1="282" y1="1708.5" x2="301" y2="1708.5" stroke="#3ee890" stroke-width="3.4" />
<path d="M300 1701.3L309.5 1708.5L300 1715.7Z" fill="#3ee890"/>
<line x1="24.1" y1="1744" x2="35.1" y2="1755" stroke="#9a9a9a" stroke-width="2" />
<line x1="24.1" y1="1755" x2="35.1" y2="1744" stroke="#9a9a9a" stroke-width="2" />
<text x="51.5" y="1757" font-size="20.5" fill="#9a9a9a" textLength="35.5" lengthAdjust="spacingAndGlyphs">Fold</text>
<rect x="201" y="1737.5" width="26" height="24" fill="none" stroke="#444" stroke-width="1.3"/>
<line x1="214" y1="1737.5" x2="214" y2="1761.5" stroke="#444" stroke-width="1.2" />
<line x1="201" y1="1749.5" x2="227" y2="1749.5" stroke="#444" stroke-width="1.2" />
<line x1="200" y1="1762.5" x2="228" y2="1736" stroke="#555" stroke-width="2.6" stroke-linecap="round"/>
<text x="309" y="1757" font-size="21.5" fill="#f58a1f" text-anchor="end" textLength="69.7" lengthAdjust="spacingAndGlyphs">+18.96</text>
<line x1="24.1" y1="1777.5" x2="35.1" y2="1788.5" stroke="#9a9a9a" stroke-width="2" />
<line x1="24.1" y1="1788.5" x2="35.1" y2="1777.5" stroke="#9a9a9a" stroke-width="2" />
<text x="51.5" y="1790.5" font-size="20.5" fill="#9a9a9a" textLength="35.5" lengthAdjust="spacingAndGlyphs">Fold</text>
<rect x="201" y="1771" width="26" height="24" fill="none" stroke="#444" stroke-width="1.3"/>
<line x1="214" y1="1771" x2="214" y2="1795" stroke="#444" stroke-width="1.2" />
<line x1="201" y1="1783" x2="227" y2="1783" stroke="#444" stroke-width="1.2" />
<line x1="200" y1="1796" x2="228" y2="1769.5" stroke="#555" stroke-width="2.6" stroke-linecap="round"/>
<text x="309" y="1790.5" font-size="21.5" fill="#f58a1f" text-anchor="end" textLength="69.7" lengthAdjust="spacingAndGlyphs">+5.400</text>
<text x="25" y="1834" font-size="20.5" fill="#ffffff" textLength="133.8" lengthAdjust="spacingAndGlyphs" stroke="#fff" stroke-width="0.3">Modulator Out</text>
<circle cx="282" cy="1826" r="7" fill="#3ee890"/>
<line x1="282" y1="1826" x2="301" y2="1826" stroke="#3ee890" stroke-width="3.4" />
<path d="M300 1818.8L309.5 1826L300 1833.2Z" fill="#3ee890"/>
<path d="M162 1821H176L169 1834Z" fill="#ffffff"/>
<rect x="11.2" y="1822" width="313" height="26" fill="url(#g9)"/>
<rect x="37.8" y="1882" width="4.6" height="10" fill="#f58a1f"/>
<rect x="35.3" y="1882" width="6" height="2.8" fill="#f58a1f"/>
<rect x="34.7" y="1890" width="10.6" height="2.8" fill="#f58a1f"/>
<circle cx="40" cy="1876.6" r="2.9" fill="#f58a1f"/>
<line x1="77" y1="1865" x2="77" y2="1905" stroke="#858585" stroke-width="4" />
<text x="109" y="1892" font-size="22" fill="#f58a1f" textLength="102.5" lengthAdjust="spacingAndGlyphs">ARRANGE</text>
<text x="242.5" y="1892" font-size="22" fill="#e0e0e0" textLength="40" lengthAdjust="spacingAndGlyphs">MIX</text>
<text x="314" y="1892" font-size="22" fill="#e0e0e0" textLength="48.5" lengthAdjust="spacingAndGlyphs">EDIT</text>
<line x1="395" y1="1865" x2="395" y2="1905" stroke="#858585" stroke-width="4" />
<rect x="426" y="1874" width="6" height="3.6" fill="#d0d0d0"/>
<rect x="436" y="1879" width="9" height="3.6" fill="#d0d0d0"/>
<rect x="430" y="1883.5" width="6" height="3.6" fill="#d0d0d0"/>
<rect x="426" y="1891" width="6" height="3.6" fill="#d0d0d0"/>
<rect x="438" y="1891" width="9" height="3.6" fill="#d0d0d0"/>
<rect x="441" y="1881.5" width="6" height="3.6" fill="#d0d0d0"/>
<line x1="492" y1="1890.4" x2="504" y2="1878.6" stroke="#d0d0d0" stroke-width="4" />
<circle cx="491.8" cy="1890.6" r="5" fill="#d0d0d0"/>
<circle cx="504" cy="1878.5" r="5" fill="#d0d0d0"/>
<circle cx="491.8" cy="1890.6" r="1.7" fill="#2e2e2e"/>
<circle cx="504" cy="1878.5" r="1.7" fill="#2e2e2e"/>
<rect x="547.8" y="1873.7" width="24.7" height="20.2" rx="4" fill="none" stroke="#f58a1f" stroke-width="5"/>
<rect x="611.5" y="1873" width="5.6" height="22" fill="#d0d0d0"/>
<rect x="619.3" y="1873" width="5.6" height="22" fill="#d0d0d0"/>
<rect x="627.1" y="1873" width="5.6" height="22" fill="#d0d0d0"/>
<path d="M2753 1875H2761.5V1877.3H2775V1893H2753Z" fill="#c4c4c4"/>
<line x1="2753" y1="1878.6" x2="2762.5" y2="1878.6" stroke="#2e2e2e" stroke-width="1.2" />
<path d="M2817.1 1872.7H2826.8L2835.3 1881.2V1894.6H2817.1Z" fill="#c4c4c4"/>
<path d="M2876.5 1878.4L2886.8 1872.7V1876.6H2899V1880.7H2886.8V1884.6Z" fill="#c4c4c4"/>
<path d="M2899.6 1888.9L2889.2 1883V1886.9H2877V1891H2889.2V1894.9Z" fill="#c4c4c4"/>
<path d="M2944.5 1886V1875A2.1 2.1 0 0 1 2948.7 1875V1881.5C2950 1880.3 2951.7 1880.8 2952 1882.2C2953.2 1881.3 2954.9 1881.9 2955.2 1883.3C2956.6 1882.6 2958.6 1883.4 2958.8 1885.5V1891C2958.8 1893.5 2957.5 1894.9 2955.5 1894.9H2946.5C2944.5 1894.9 2943 1893.5 2941.5 1890.5L2938.5 1884.5C2939.5 1883 2941.5 1883 2942.8 1884.5Z" fill="#c4c4c4"/>
<line x1="2993" y1="1865" x2="2993" y2="1905" stroke="#9a9a9a" stroke-width="3.8" />
<rect x="3021" y="1872.7" width="22" height="22.3" fill="#c4c4c4"/>
<rect x="3024.9" y="1872" width="4.2" height="12.5" fill="#2e2e2e"/>
<rect x="3034.9" y="1872" width="4.2" height="12.5" fill="#2e2e2e"/>
<rect x="3026.6" y="1884.5" width="0.9" height="10.5" fill="#2e2e2e"/>
<rect x="3031.6" y="1884.5" width="0.9" height="10.5" fill="#2e2e2e"/>
<rect x="3036.6" y="1884.5" width="0.9" height="10.5" fill="#2e2e2e"/>
<rect x="335" y="163" width="2730" height="1186.5" rx="6" fill="#7c7c7c"/>
<rect x="339.5" y="167.5" width="2721" height="1177.3" rx="3" fill="#0d0d0d"/>
<clipPath id="gridclip"><rect x="339.5" y="422" width="2721" height="923.5"/></clipPath>
<clipPath id="palclip"><rect x="914" y="222" width="2147" height="199"/></clipPath>
<g clip-path="url(#gridclip)"><g transform="translate(0 0.7)">
<line x1="263.2" y1="420" x2="263.2" y2="1346" stroke="#1d1d1d" stroke-width="2.4" />
<line x1="407.1" y1="420" x2="407.1" y2="1346" stroke="#1d1d1d" stroke-width="2.4" />
<line x1="551.1" y1="420" x2="551.1" y2="1346" stroke="#1d1d1d" stroke-width="2.4" />
<line x1="695" y1="420" x2="695" y2="1346" stroke="#1d1d1d" stroke-width="2.4" />
<line x1="838.9" y1="420" x2="838.9" y2="1346" stroke="#1d1d1d" stroke-width="2.4" />
<line x1="982.9" y1="420" x2="982.9" y2="1346" stroke="#1d1d1d" stroke-width="2.4" />
<line x1="1126.8" y1="420" x2="1126.8" y2="1346" stroke="#1d1d1d" stroke-width="2.4" />
<line x1="1270.7" y1="420" x2="1270.7" y2="1346" stroke="#1d1d1d" stroke-width="2.4" />
<line x1="1414.6" y1="420" x2="1414.6" y2="1346" stroke="#1d1d1d" stroke-width="2.4" />
<line x1="1558.6" y1="420" x2="1558.6" y2="1346" stroke="#1d1d1d" stroke-width="2.4" />
<line x1="1702.5" y1="420" x2="1702.5" y2="1346" stroke="#1d1d1d" stroke-width="2.4" />
<line x1="1846.4" y1="420" x2="1846.4" y2="1346" stroke="#1d1d1d" stroke-width="2.4" />
<line x1="1990.4" y1="420" x2="1990.4" y2="1346" stroke="#1d1d1d" stroke-width="2.4" />
<line x1="2134.3" y1="420" x2="2134.3" y2="1346" stroke="#1d1d1d" stroke-width="2.4" />
<line x1="2278.2" y1="420" x2="2278.2" y2="1346" stroke="#1d1d1d" stroke-width="2.4" />
<line x1="2422.2" y1="420" x2="2422.2" y2="1346" stroke="#1d1d1d" stroke-width="2.4" />
<line x1="2566.1" y1="420" x2="2566.1" y2="1346" stroke="#1d1d1d" stroke-width="2.4" />
<line x1="2710" y1="420" x2="2710" y2="1346" stroke="#1d1d1d" stroke-width="2.4" />
<line x1="2853.9" y1="420" x2="2853.9" y2="1346" stroke="#1d1d1d" stroke-width="2.4" />
<line x1="2997.9" y1="420" x2="2997.9" y2="1346" stroke="#1d1d1d" stroke-width="2.4" />
<line x1="3141.8" y1="420" x2="3141.8" y2="1346" stroke="#1d1d1d" stroke-width="2.4" />
<line x1="339" y1="306.9" x2="3061" y2="306.9" stroke="#1d1d1d" stroke-width="2.4" />
<line x1="339" y1="450.8" x2="3061" y2="450.8" stroke="#1d1d1d" stroke-width="2.4" />
<line x1="339" y1="594.8" x2="3061" y2="594.8" stroke="#1d1d1d" stroke-width="2.4" />
<line x1="339" y1="738.7" x2="3061" y2="738.7" stroke="#1d1d1d" stroke-width="2.4" />
<line x1="339" y1="882.6" x2="3061" y2="882.6" stroke="#1d1d1d" stroke-width="2.4" />
<line x1="339" y1="1026.6" x2="3061" y2="1026.6" stroke="#1d1d1d" stroke-width="2.4" />
<line x1="339" y1="1170.5" x2="3061" y2="1170.5" stroke="#1d1d1d" stroke-width="2.4" />
<line x1="339" y1="1314.4" x2="3061" y2="1314.4" stroke="#1d1d1d" stroke-width="2.4" />
<rect x="986.5" y="310.5" width="280.7" height="280.7" rx="10" fill="url(#g10)"/>
<line x1="1039" y1="427.5" x2="1216.5" y2="427.5" stroke="#4a4a4a" stroke-width="1" />
<line x1="1039" y1="452" x2="1216.5" y2="452" stroke="#4a4a4a" stroke-width="1" />
<path d="M1039 450L1045 439L1062 405" fill="none" stroke="#25cf9a" stroke-width="2.2"/>
<path d="M1158 405L1169 431L1177 452" fill="none" stroke="#25cf9a" stroke-width="2.2"/>
<rect x="1035.5" y="446.5" width="7" height="7" rx="1.5" fill="#fff"/>
<rect x="1041.5" y="435.5" width="7" height="7" rx="1.5" fill="#fff"/>
<rect x="1165.5" y="427.5" width="7" height="7" rx="1.5" fill="#fff"/>
<circle cx="1177" cy="452" r="4.5" fill="#fff" stroke="#25cf9a" stroke-width="2.6"/>
<circle cx="1006.6" cy="521.7" r="5.7" fill="none" stroke="#ffd93d" stroke-width="3.4"/>
<path d="M997 562.9L1003 567.4L997 571.9Z" fill="#ffd93d"/>
<path d="M1004.5 577.4H1010V557.1H1021V577.4H1026.5" fill="none" stroke="#ffd93d" stroke-width="2.4"/>
<path d="M1055 546.7A34 34 0 1 1 1103 546.7" fill="none" stroke="#4d4d4d" stroke-width="4.1" stroke-linecap="butt"/>
<path d="M1055 546.7A34 34 0 1 1 1105.8 543.6" fill="none" stroke="#25cf9a" stroke-width="4.1" stroke-linecap="butt"/>
<circle cx="1079" cy="522.7" r="24" fill="url(#g11)"/>
<line x1="1083.6" y1="526.9" x2="1096.5" y2="538.4" stroke="#111" stroke-width="4.3" />
<path d="M1151 546.7A34 34 0 1 1 1199 546.7" fill="none" stroke="#4d4d4d" stroke-width="4.1" stroke-linecap="butt"/>
<path d="M1151 546.7A34 34 0 0 1 1184.9 490.2" fill="none" stroke="#25cf9a" stroke-width="4.1" stroke-linecap="butt"/>
<circle cx="1175" cy="522.7" r="24" fill="url(#g11)"/>
<line x1="1176.8" y1="516.7" x2="1181.9" y2="500.2" stroke="#111" stroke-width="4.3" />
<text x="1079" y="575" font-size="22" fill="#d6d6d6" text-anchor="middle">A</text>
<text x="1175" y="575" font-size="22" fill="#d6d6d6" text-anchor="middle">R</text>
<circle cx="1247.4" cy="523.6" r="5.7" fill="#35506e" stroke="#4fa8f2" stroke-width="3.4"/>
<rect x="1850" y="454.4" width="136.7" height="136.7" rx="10" fill="url(#g10)"/>
<text x="1919" y="481.7" font-size="22" fill="#ffd93d" text-anchor="middle" textLength="90" lengthAdjust="spacingAndGlyphs">S P A C E</text>
<rect x="1892.5" y="496" width="54" height="53.5" rx="3" fill="#ffd93d"/>
<text x="1919" y="574.8" font-size="21.5" fill="#d6d6d6" text-anchor="middle" textLength="130" lengthAdjust="spacingAndGlyphs">NO GRAVITY</text>
<rect x="1994" y="454.4" width="136.7" height="136.7" rx="10" fill="url(#g10)"/>
<text x="2062" y="481.7" font-size="22" fill="#ffd93d" text-anchor="middle" textLength="124" lengthAdjust="spacingAndGlyphs">Acceleration</text>
<path d="M2044.8 540.7A25.5 25.5 0 1 1 2080.8 540.7" fill="none" stroke="#4d4d4d" stroke-width="4.1" stroke-linecap="butt"/>
<path d="M2044.8 540.7A25.5 25.5 0 1 1 2085.3 510.7" fill="none" stroke="#ffd93d" stroke-width="4.1" stroke-linecap="butt"/>
<circle cx="2062.8" cy="522.7" r="17" fill="url(#g11)"/>
<line x1="2066.8" y1="520.8" x2="2077.9" y2="515.7" stroke="#111" stroke-width="3.7" />
<text x="2087" y="574.8" font-size="21.5" fill="#d6d6d6" text-anchor="middle">1.55 s</text>
<path d="M2007 580L2014 566H2022" fill="none" stroke="#ffd93d" stroke-width="3.6"/>
<rect x="2137.9" y="454.4" width="136.7" height="136.7" rx="10" fill="url(#g10)"/>
<circle cx="2197" cy="523.6" r="7" fill="#3ee890"/>
<line x1="2197" y1="523.6" x2="2216" y2="523.6" stroke="#3ee890" stroke-width="3.4" />
<path d="M2215 516.4L2224.5 523.6L2215 530.8Z" fill="#3ee890"/>
<rect x="2425.8" y="454.4" width="424.6" height="280.7" rx="10" fill="#1e1e1e" stroke="#3a3a3a" stroke-width="2"/>
<rect x="2468.5" y="465.8" width="339" height="258" fill="#1c1c1c" stroke="#585858" stroke-width="1"/>
<line x1="2552.5" y1="467" x2="2552.5" y2="724" stroke="#343434" stroke-width="1" />
<line x1="2637.5" y1="467" x2="2637.5" y2="724" stroke="#343434" stroke-width="1" />
<line x1="2722.5" y1="467" x2="2722.5" y2="724" stroke="#343434" stroke-width="1" />
<line x1="2468.5" y1="497.8" x2="2807" y2="497.8" stroke="#343434" stroke-width="1" />
<line x1="2468.5" y1="529.8" x2="2807" y2="529.8" stroke="#343434" stroke-width="1" />
<line x1="2468.5" y1="561.8" x2="2807" y2="561.8" stroke="#343434" stroke-width="1" />
<line x1="2468.5" y1="594.8" x2="2807" y2="594.8" stroke="#343434" stroke-width="1" />
<line x1="2468.5" y1="626.8" x2="2807" y2="626.8" stroke="#343434" stroke-width="1" />
<line x1="2468.5" y1="658.8" x2="2807" y2="658.8" stroke="#343434" stroke-width="1" />
<line x1="2468.5" y1="690.8" x2="2807" y2="690.8" stroke="#343434" stroke-width="1" />
<path d="M2469.4 585.6L2470.7 573.1L2471.9 564L2473.2 560.6L2474.4 563.9L2475.6 572.8L2476.8 584.9L2478.1 597.1L2479.3 606L2480.5 609.2L2481.8 604.6L2483.1 592.4L2484.4 577.4L2485.7 565.3L2487.1 560.6L2488.3 565.3L2489.6 577.7L2490.9 593.1L2492.1 605.5L2493.4 610.2L2494.6 605.4L2495.8 593L2497 577.6L2498.2 565.2L2499.3 560.4L2500.5 565.1L2501.7 577.3L2502.9 592.4L2504.1 604.6L2505.3 609.2L2506.7 602L2508.1 584.6L2509.5 567.2L2510.9 560L2512 564.7L2513.2 577L2514.4 592.2L2515.6 604.5L2516.8 609.2L2518.2 602.2L2519.7 585.3L2521.1 568.4L2522.6 561.4L2523.7 566L2524.9 578.2L2526.1 593.2L2527.3 605.4L2528.5 610L2529.7 605.8L2530.9 594.7L2532.1 580.9L2533.3 569.8L2534.5 565.6L2535.7 569.6L2536.8 580.2L2538 593.4L2539.2 604L2540.4 608L2541.6 604.4L2542.8 595.1L2544 583.5L2545.2 574.1L2546.4 570.5L2547.6 573.8L2548.7 582.5L2549.9 593.3L2551.1 601.9L2552.3 605.2L2553.5 602.1L2554.8 593.9L2556 583.8L2557.2 575.6L2558.5 572.5L2559.7 575.6L2560.8 583.6L2562 593.5L2563.2 601.6L2564.4 604.6L2565.6 602.2L2566.8 595.7L2568 587.8L2569.2 581.3L2570.4 578.9L2571.8 582.9L2573.2 592.5L2574.7 602.2L2576.1 606.2L2577.3 603.5L2578.6 596.2L2579.8 587.3L2581 580L2582.3 577.3L2583.7 581.4L2585.1 591.5L2586.6 601.5L2588 605.6L2589.2 603L2590.4 595.9L2591.6 587.2L2592.8 580.2L2594 577.5L2595.2 580.2L2596.4 587.2L2597.5 595.9L2598.7 603L2599.9 605.6L2601.2 602.9L2602.5 595.7L2603.9 586.8L2605.2 579.6L2606.5 576.9L2607.7 579.7L2609 587.2L2610.3 596.4L2611.5 603.8L2612.8 606.6L2614.1 604.8L2615.4 599.6L2616.7 592.1L2618 583.8L2619.3 576.4L2620.6 571.2L2621.9 569.3L2623.2 571L2624.5 575.7L2625.8 582.7L2627.1 591L2628.4 599.2L2629.7 606.3L2631 610.9L2632.3 612.6L2633.5 611.8L2634.7 609.5L2635.9 605.9L2637.1 601.1L2638.4 595.4L2639.6 589.2L2640.8 582.8L2642 576.6L2643.2 570.9L2644.5 566.1L2645.7 562.5L2646.9 560.2L2648.1 559.4L2649.3 559.9L2650.5 561.2L2651.7 563.5L2652.9 566.5L2654.1 570.2L2655.3 574.4L2656.5 579.1L2657.7 584L2658.8 589L2660 593.9L2661.2 598.6L2662.4 602.8L2663.6 606.5L2664.8 609.5L2666 611.7L2667.2 613.1L2668.4 613.6L2669.6 613.1L2670.8 611.5L2672 609L2673.2 605.6L2674.4 601.5L2675.7 596.9L2676.9 591.8L2678.1 586.5L2679.3 581.2L2680.5 576.1L2681.7 571.5L2682.9 567.4L2684.2 564L2685.4 561.5L2686.6 559.9L2687.8 559.4L2689.2 564.6L2690.6 578.1L2692 594.9L2693.4 608.4L2694.7 613.6L2696 612.8L2697.2 610.4L2698.4 606.6L2699.6 601.6L2700.9 595.7L2702.1 589.2L2703.3 582.5L2704.5 576L2705.7 570L2707 565L2708.2 561.2L2709.4 558.8L2710.6 558L2711.8 559.6L2713 564.3L2714.3 571.4L2715.5 580.2L2716.7 589.5L2717.9 598.2L2719.1 605.3L2720.3 610L2721.5 611.6L2722.7 609L2724 601.9L2725.2 591.5L2726.4 580.1L2727.6 569.7L2728.8 562.6L2730.1 560L2731.3 564.8L2732.6 577.4L2733.9 592.9L2735.1 605.4L2736.4 610.2L2737.7 605.3L2738.9 592.4L2740.2 576.4L2741.5 563.6L2742.8 558.6L2743.9 563.6L2745.1 576.4L2746.3 592.4L2747.5 605.3L2748.7 610.2L2749.9 605.3L2751.1 592.3L2752.3 576.3L2753.5 563.4L2754.7 558.4L2755.8 563.4L2757 576.6L2758.2 592.8L2759.4 606L2760.6 611L2761.8 606L2763 593L2764.2 577L2765.4 564L2766.6 559L2767.7 563.9L2768.9 576.7L2770.1 592.5L2771.3 605.3L2772.5 610.2L2773.9 602.9L2775.3 585.4L2776.7 567.9L2778.1 560.6L2779.3 565.3L2780.4 577.4L2781.6 592.4L2782.8 604.6L2784 609.2L2785.2 605.1L2786.4 594.4L2787.6 581.2L2788.8 570.5L2790 566.4L2791.4 572.5L2792.7 587.3L2794.1 602.1L2795.5 608.2L2796.8 604.5L2798.1 594.8L2799.3 582.8L2800.6 573.1L2801.9 569.3L2803.1 572.7L2804.2 581.5L2805.4 592.5L2806.6 601.3L2807.8 604.6" fill="none" stroke="#f58a1f" stroke-width="1.7" stroke-linejoin="round"/>
<circle cx="2447.4" cy="475.3" r="5.5" fill="none" stroke="#9a8a3a" stroke-width="2.8"/>
<circle cx="2447.4" cy="523.6" r="7.5" fill="#f58a1f"/>
<circle cx="2447.4" cy="523.6" r="3" fill="#b8651a"/>
<circle cx="2447.4" cy="667.4" r="5.5" fill="none" stroke="#c8c8c8" stroke-width="2.8"/>
<circle cx="2829.5" cy="523.6" r="7.5" fill="#f0284f"/>
<circle cx="2829.5" cy="523.6" r="3" fill="#b01c3a"/>
<circle cx="2829.5" cy="667.4" r="5.5" fill="none" stroke="#f0284f" stroke-width="2.8"/>
<rect x="410.7" y="598.4" width="424.6" height="280.7" rx="10" fill="url(#g10)"/>
<text x="623.7" y="625.9" font-size="22" fill="#f58a1f" text-anchor="middle">Sine</text>
<circle cx="432.7" cy="666.9" r="5.7" fill="none" stroke="#ffd93d" stroke-width="3.4"/>
<circle cx="432.7" cy="738.9" r="5.7" fill="none" stroke="#c56cf5" stroke-width="3.4"/>
<circle cx="432.7" cy="810.9" r="5.7" fill="none" stroke="#f58a1f" stroke-width="3.4"/>
<path d="M466.7 662.9L472.2 666.9L466.7 670.9Z" fill="#8a8a8a"/>
<line x1="479.2" y1="658.9" x2="479.2" y2="677.4" stroke="#8a8a8a" stroke-width="2" />
<path d="M474.7 661.9L479.2 654.4L483.7 661.9Z" fill="#8a8a8a"/>
<circle cx="816.5" cy="666.9" r="5.7" fill="none" stroke="#f58a1f" stroke-width="3.4"/>
<path d="M462.1 755.9A25.5 25.5 0 1 1 498.2 755.9" fill="none" stroke="#4d4d4d" stroke-width="4.1" stroke-linecap="butt"/>
<circle cx="480.1" cy="737.9" r="17" fill="url(#g12)"/>
<line x1="476.5" y1="741.5" x2="468.5" y2="749.5" stroke="#e4e4e4" stroke-width="4.9" />
<path d="M462.1 828.4A25.5 25.5 0 1 1 498.2 828.4" fill="none" stroke="#4d4d4d" stroke-width="4.1" stroke-linecap="butt"/>
<path d="M478.8 784.9A25.5 25.5 0 0 1 481.5 784.9" fill="none" stroke="#8a5a2a" stroke-width="4.1" stroke-linecap="butt"/>
<circle cx="480.1" cy="810.4" r="17" fill="url(#g12)"/>
<line x1="480.1" y1="805.3" x2="480.1" y2="793.9" stroke="#e4e4e4" stroke-width="4.9" />
<path d="M546 767.6A42 42 0 1 1 605.4 767.6" fill="none" stroke="#4d4d4d" stroke-width="4.1" stroke-linecap="butt"/>
<path d="M573.5 695.9A42 42 0 0 1 577.9 695.9" fill="none" stroke="#f58a1f" stroke-width="4.1" stroke-linecap="butt"/>
<circle cx="575.7" cy="737.9" r="31" fill="url(#g11)"/>
<line x1="575.7" y1="729.8" x2="575.7" y2="707.5" stroke="#111" stroke-width="4.9" />
<text x="575.7" y="799.4" font-size="22" fill="#d6d6d6" text-anchor="middle">Skew</text>
<rect x="638.7" y="713.4" width="67.4" height="51" fill="none" stroke="#484848" stroke-width="1"/>
<line x1="650" y1="713.4" x2="650" y2="764.4" stroke="#3e3e3e" stroke-width="1" />
<line x1="661.2" y1="713.4" x2="661.2" y2="764.4" stroke="#3e3e3e" stroke-width="1" />
<line x1="672.4" y1="713.4" x2="672.4" y2="764.4" stroke="#3e3e3e" stroke-width="1" />
<line x1="683.7" y1="713.4" x2="683.7" y2="764.4" stroke="#3e3e3e" stroke-width="1" />
<line x1="694.9" y1="713.4" x2="694.9" y2="764.4" stroke="#3e3e3e" stroke-width="1" />
<line x1="638.7" y1="723.6" x2="706.1" y2="723.6" stroke="#3e3e3e" stroke-width="1" />
<line x1="638.7" y1="733.8" x2="706.1" y2="733.8" stroke="#3e3e3e" stroke-width="1" />
<line x1="638.7" y1="744" x2="706.1" y2="744" stroke="#3e3e3e" stroke-width="1" />
<line x1="638.7" y1="754.2" x2="706.1" y2="754.2" stroke="#3e3e3e" stroke-width="1" />
<path d="M638.7 762.4L640.4 762L642.1 761.1L643.8 759.6L645.5 757.5L647.2 754.9L648.8 751.9L650.5 748.5L652.2 744.8L653.9 740.9L655.6 736.9L657.3 733L659 729.1L660.6 725.4L662.3 722L664 719L665.7 716.4L667.4 715.6L669.1 716.3L670.7 717.5L672.4 718.1L674.1 717.5L675.8 716.3L677.5 715.6L679.2 716.4L680.9 719L682.5 722L684.2 725.4L685.9 729.1L687.6 733L689.3 736.9L691 740.9L692.6 744.8L694.3 748.5L696 751.9L697.7 754.9L699.4 757.5L701.1 759.6L702.8 761.1L704.4 762L706.1 762.4" fill="none" stroke="#35c4ee" stroke-width="2.6" stroke-linejoin="round"/>
<path d="M738 767.6A42 42 0 1 1 797.4 767.6" fill="none" stroke="#4d4d4d" stroke-width="4.1" stroke-linecap="butt"/>
<path d="M738 767.6A42 42 0 0 1 733.3 762" fill="none" stroke="#35c4ee" stroke-width="4.1" stroke-linecap="butt"/>
<path d="M734.6 763.7A42 42 0 0 1 728.8 753.6" fill="none" stroke="#f58a1f" stroke-width="4.1" stroke-linecap="butt"/>
<circle cx="767.7" cy="737.9" r="31" fill="url(#g11)"/>
<line x1="760.6" y1="741.6" x2="740.9" y2="752.1" stroke="#111" stroke-width="4.9" />
<text x="767.7" y="799.4" font-size="22" fill="#d6d6d6" text-anchor="middle">Fold</text>
<g transform="translate(480.1 851.4) scale(1.000)">
<path d="M-21.5 0L-15.5 -4.8V4.8Z" fill="#f58a1f"/>
<path d="M21.5 0L15.5 -4.8V4.8Z" fill="#f58a1f"/>
<path d="M-11 -11H-7V1H-6V11H-11Z M-4 -11H-0.8V11H-5V1H-4Z M0.8 -11H4V1H5V11H0.8Z M7 -11H11V11H6V1H7Z" fill="#f58a1f"/>
</g>
<text x="542.7" y="859.9" font-size="22" fill="#f58a1f">2:1</text>
<text x="663.2" y="859.9" font-size="22" fill="#f58a1f" text-anchor="end">0.00</text>
<text x="675.2" y="859.9" font-size="22" fill="#f58a1f">st</text>
<text x="723.2" y="857.4" font-size="22" fill="#5e5e5e" text-anchor="middle">±</text>
<text x="816.7" y="859.9" font-size="22" fill="#f58a1f" text-anchor="end">0.00 Hz</text>
<rect x="841.9" y="597.8" width="136.9" height="136.9" fill="#0d0d0d" stroke="#6e6e6e" stroke-width="2"/>
<rect x="986.5" y="742.3" width="136.7" height="136.7" rx="10" fill="url(#g10)"/>
<circle cx="1006.6" cy="810.4" r="5.7" fill="none" stroke="#f58a1f" stroke-width="3.4"/>
<circle cx="1006.6" cy="858" r="7.5" fill="#f58a1f"/>
<circle cx="1006.6" cy="858" r="3" fill="#b8651a"/>
<line x1="1047.4" y1="802.9" x2="1062.4" y2="817.9" stroke="#f58a1f" stroke-width="3.4" />
<line x1="1047.4" y1="817.9" x2="1062.4" y2="802.9" stroke="#f58a1f" stroke-width="3.4" />
<circle cx="1103" cy="810.4" r="5.7" fill="none" stroke="#f58a1f" stroke-width="3.4"/>
<rect x="1274.3" y="598.4" width="424.6" height="280.7" rx="10" fill="url(#g10)"/>
<text x="1487.3" y="625.9" font-size="22" fill="#f58a1f" text-anchor="middle">Sine</text>
<circle cx="1296.3" cy="666.9" r="5.7" fill="none" stroke="#ffd93d" stroke-width="3.4"/>
<circle cx="1296.3" cy="738.9" r="5.7" fill="none" stroke="#c56cf5" stroke-width="3.4"/>
<circle cx="1296.3" cy="810.9" r="5.7" fill="none" stroke="#f58a1f" stroke-width="3.4"/>
<path d="M1330.3 662.9L1335.8 666.9L1330.3 670.9Z" fill="#8a8a8a"/>
<line x1="1342.8" y1="658.9" x2="1342.8" y2="677.4" stroke="#8a8a8a" stroke-width="2" />
<path d="M1338.3 661.9L1342.8 654.4L1347.3 661.9Z" fill="#8a8a8a"/>
<circle cx="1680.1" cy="666.9" r="8" fill="#f58a1f"/>
<path d="M1325.7 755.9A25.5 25.5 0 1 1 1361.7 755.9" fill="none" stroke="#4d4d4d" stroke-width="4.1" stroke-linecap="butt"/>
<path d="M1325.7 755.9A25.5 25.5 0 1 1 1367.4 747.4" fill="none" stroke="#c56cf5" stroke-width="4.1" stroke-linecap="butt"/>
<circle cx="1343.7" cy="737.9" r="17" fill="url(#g12)"/>
<line x1="1348.4" y1="739.8" x2="1359" y2="744" stroke="#e4e4e4" stroke-width="4.9" />
<path d="M1325.7 828.4A25.5 25.5 0 1 1 1361.7 828.4" fill="none" stroke="#4d4d4d" stroke-width="4.1" stroke-linecap="butt"/>
<path d="M1342.4 784.9A25.5 25.5 0 0 1 1345 784.9" fill="none" stroke="#8a5a2a" stroke-width="4.1" stroke-linecap="butt"/>
<circle cx="1343.7" cy="810.4" r="17" fill="url(#g12)"/>
<line x1="1343.7" y1="805.3" x2="1343.7" y2="793.9" stroke="#e4e4e4" stroke-width="4.9" />
<path d="M1409.6 767.6A42 42 0 1 1 1469 767.6" fill="none" stroke="#4d4d4d" stroke-width="4.1" stroke-linecap="butt"/>
<path d="M1437.1 695.9A42 42 0 0 1 1441.5 695.9" fill="none" stroke="#f58a1f" stroke-width="4.1" stroke-linecap="butt"/>
<circle cx="1439.3" cy="737.9" r="31" fill="url(#g11)"/>
<line x1="1439.3" y1="729.8" x2="1439.3" y2="707.5" stroke="#111" stroke-width="4.9" />
<text x="1439.3" y="799.4" font-size="22" fill="#d6d6d6" text-anchor="middle">Skew</text>
<rect x="1502.3" y="713.4" width="67.4" height="51" fill="none" stroke="#484848" stroke-width="1"/>
<line x1="1513.5" y1="713.4" x2="1513.5" y2="764.4" stroke="#3e3e3e" stroke-width="1" />
<line x1="1524.8" y1="713.4" x2="1524.8" y2="764.4" stroke="#3e3e3e" stroke-width="1" />
<line x1="1536" y1="713.4" x2="1536" y2="764.4" stroke="#3e3e3e" stroke-width="1" />
<line x1="1547.2" y1="713.4" x2="1547.2" y2="764.4" stroke="#3e3e3e" stroke-width="1" />
<line x1="1558.5" y1="713.4" x2="1558.5" y2="764.4" stroke="#3e3e3e" stroke-width="1" />
<line x1="1502.3" y1="723.6" x2="1569.7" y2="723.6" stroke="#3e3e3e" stroke-width="1" />
<line x1="1502.3" y1="733.8" x2="1569.7" y2="733.8" stroke="#3e3e3e" stroke-width="1" />
<line x1="1502.3" y1="744" x2="1569.7" y2="744" stroke="#3e3e3e" stroke-width="1" />
<line x1="1502.3" y1="754.2" x2="1569.7" y2="754.2" stroke="#3e3e3e" stroke-width="1" />
<path d="M1502.3 762.4L1504 762.1L1505.7 761.2L1507.4 759.7L1509 757.8L1510.7 755.3L1512.4 752.5L1514.1 749.3L1515.8 745.8L1517.5 742.1L1519.2 738.4L1520.8 734.6L1522.5 730.9L1524.2 727.5L1525.9 724.3L1527.6 721.4L1529.3 718.9L1531 717L1532.6 715.5L1534.3 714.7L1536 714.4L1537.7 714.7L1539.4 715.5L1541.1 717L1542.8 718.9L1544.4 721.4L1546.1 724.3L1547.8 727.5L1549.5 730.9L1551.2 734.6L1552.9 738.4L1554.5 742.1L1556.2 745.8L1557.9 749.3L1559.6 752.5L1561.3 755.3L1563 757.8L1564.7 759.7L1566.3 761.2L1568 762.1L1569.7 762.4" fill="none" stroke="#35c4ee" stroke-width="2.6" stroke-linejoin="round"/>
<path d="M1601.6 767.6A42 42 0 1 1 1661 767.6" fill="none" stroke="#4d4d4d" stroke-width="4.1" stroke-linecap="butt"/>
<path d="M1601.6 767.6A42 42 0 0 1 1598.2 763.7" fill="none" stroke="#35c4ee" stroke-width="4.1" stroke-linecap="butt"/>
<circle cx="1631.3" cy="737.9" r="31" fill="url(#g11)"/>
<line x1="1626.1" y1="744" x2="1611.8" y2="761.1" stroke="#111" stroke-width="4.9" />
<text x="1631.3" y="799.4" font-size="22" fill="#d6d6d6" text-anchor="middle">Fold</text>
<g transform="translate(1343.7 851.4) scale(1.000)">
<path d="M-21.5 0L-15.5 -4.8V4.8Z" fill="#f58a1f"/>
<path d="M21.5 0L15.5 -4.8V4.8Z" fill="#f58a1f"/>
<path d="M-11 -11H-7V1H-6V11H-11Z M-4 -11H-0.8V11H-5V1H-4Z M0.8 -11H4V1H5V11H0.8Z M7 -11H11V11H6V1H7Z" fill="#f58a1f"/>
</g>
<text x="1406.3" y="859.9" font-size="22" fill="#f58a1f">1:1</text>
<text x="1526.8" y="859.9" font-size="22" fill="#f58a1f" text-anchor="end">5.00</text>
<text x="1538.8" y="859.9" font-size="22" fill="#f58a1f">st</text>
<text x="1586.8" y="857.4" font-size="22" fill="#5e5e5e" text-anchor="middle">±</text>
<text x="1680.3" y="859.9" font-size="22" fill="#f58a1f" text-anchor="end">0.00 Hz</text>
<rect x="1850" y="742.3" width="136.7" height="136.7" rx="10" fill="url(#g10)"/>
<text x="1919" y="769.4" font-size="22" fill="#f58a1f" text-anchor="middle" textLength="98" lengthAdjust="spacingAndGlyphs">Sharpness</text>
<circle cx="1871.6" cy="810.4" r="7.5" fill="#f58a1f"/>
<circle cx="1871.6" cy="859" r="7.5" fill="#4fa8f2"/>
<path d="M1901 828.4A25.5 25.5 0 1 1 1937 828.4" fill="none" stroke="#4d4d4d" stroke-width="4.1" stroke-linecap="butt"/>
<path d="M1901 828.4A25.5 25.5 0 0 1 1934.7 790.3" fill="none" stroke="#f58a1f" stroke-width="4.1" stroke-linecap="butt"/>
<circle cx="1919" cy="810.4" r="17" fill="url(#g11)"/>
<line x1="1921.8" y1="807" x2="1929.7" y2="797.6" stroke="#111" stroke-width="3.7" />
<circle cx="1967.6" cy="810.4" r="7.5" fill="#f58a1f"/>
<rect x="1907.5" y="840" width="23.5" height="23.5" fill="none" stroke="#b0652a" stroke-width="2.2"/>
<line x1="1919.2" y1="840" x2="1919.2" y2="863.5" stroke="#b0652a" stroke-width="2.2" />
<line x1="1907.5" y1="851.7" x2="1931" y2="851.7" stroke="#b0652a" stroke-width="2.2" />
<path d="M1907.5 852V840H1931V852" fill="none" stroke="#f58a1f" stroke-width="2.2"/>
<line x1="1919.2" y1="840" x2="1919.2" y2="852" stroke="#f58a1f" stroke-width="2.2" />
<rect x="1994" y="742.3" width="280.7" height="280.7" rx="10" fill="url(#g10)"/>
<text x="2134.5" y="769.4" font-size="22" fill="#f0284f" text-anchor="middle">Mixer</text>
<circle cx="2015.4" cy="810.4" r="7.5" fill="#f58a1f"/>
<path d="M2051 834.4A34 34 0 1 1 2099 834.4" fill="none" stroke="#4d4d4d" stroke-width="4.1" stroke-linecap="butt"/>
<path d="M2051 834.4A34 34 0 0 1 2092 781" fill="none" stroke="#f58a1f" stroke-width="4.1" stroke-linecap="butt"/>
<circle cx="2075" cy="810.4" r="24" fill="url(#g11)"/>
<line x1="2078.1" y1="805" x2="2086.8" y2="790" stroke="#111" stroke-width="4.3" />
<text x="2134.7" y="819" font-size="24" fill="#8c8c8c" text-anchor="middle" font-weight="bold">S</text>
<path d="M2170.8 834.4A34 34 0 1 1 2218.8 834.4" fill="none" stroke="#4d4d4d" stroke-width="4.1" stroke-linecap="butt"/>
<path d="M2194.8 776.4A34 34 0 0 1 2207.5 778.9" fill="none" stroke="#f58a1f" stroke-width="4.1" stroke-linecap="butt"/>
<circle cx="2194.8" cy="810.4" r="24" fill="url(#g11)"/>
<line x1="2197.1" y1="804.6" x2="2203.6" y2="788.6" stroke="#111" stroke-width="4.3" />
<text x="2075" y="862.5" font-size="21.5" fill="#d6d6d6" text-anchor="middle">-6.6 dB</text>
<text x="2194.8" y="862.5" font-size="21.5" fill="#d6d6d6" text-anchor="middle">18.0 %</text>
<path d="M2127 852.5H2131L2139 846V865.5L2131 859H2127Z" fill="#f0284f"/>
<circle cx="2255.3" cy="810.4" r="7.5" fill="#f0284f"/>
<circle cx="2255.3" cy="810.4" r="3" fill="#b01c3a"/>
<circle cx="2013" cy="954.6" r="7.5" fill="#4fa8f2"/>
<path d="M2051 978.6A34 34 0 1 1 2099 978.6" fill="none" stroke="#4d4d4d" stroke-width="4.1" stroke-linecap="butt"/>
<path d="M2051 978.6A34 34 0 0 1 2058 925.2" fill="none" stroke="#4fa8f2" stroke-width="4.1" stroke-linecap="butt"/>
<circle cx="2075" cy="954.6" r="24" fill="url(#g11)"/>
<line x1="2071.9" y1="949.2" x2="2063.2" y2="934.2" stroke="#111" stroke-width="4.3" />
<text x="2134.7" y="963" font-size="24" fill="#8c8c8c" text-anchor="middle" font-weight="bold">S</text>
<path d="M2170.8 978.6A34 34 0 1 1 2218.8 978.6" fill="none" stroke="#4d4d4d" stroke-width="4.1" stroke-linecap="butt"/>
<path d="M2166.9 935.1A34 34 0 0 1 2194.8 920.6" fill="none" stroke="#4fa8f2" stroke-width="4.1" stroke-linecap="butt"/>
<circle cx="2194.8" cy="954.6" r="24" fill="url(#g11)"/>
<line x1="2189.7" y1="951" x2="2175.5" y2="941.1" stroke="#111" stroke-width="4.3" />
<circle cx="2015.4" cy="1002.7" r="5.5" fill="none" stroke="#8a2a3c" stroke-width="2.6"/>
<text x="2075" y="1006" font-size="21.5" fill="#d6d6d6" text-anchor="middle">-18.2 dB</text>
<text x="2194.8" y="1006" font-size="21.5" fill="#d6d6d6" text-anchor="middle">-35.5 %</text>
<path d="M2127 996.5H2131L2139 990V1009.5L2131 1003H2127Z" fill="#f0284f"/>
<rect x="2281.8" y="742.3" width="136.7" height="136.7" rx="10" fill="url(#g10)"/>
<text x="2350.5" y="769.4" font-size="22" fill="#f0284f" text-anchor="middle">Blend</text>
<circle cx="2303" cy="810.4" r="7.5" fill="#f0284f"/>
<circle cx="2303" cy="810.4" r="3" fill="#b01c3a"/>
<circle cx="2303" cy="859" r="5.7" fill="none" stroke="#50c014" stroke-width="3.4"/>
<path d="M2332.5 828.4A25.5 25.5 0 1 1 2368.5 828.4" fill="none" stroke="#4d4d4d" stroke-width="4.1" stroke-linecap="butt"/>
<path d="M2332.5 828.4A25.5 25.5 0 0 1 2328.4 823.1" fill="none" stroke="#f0284f" stroke-width="4.1" stroke-linecap="butt"/>
<path d="M2328 822.4A25.5 25.5 0 0 1 2325.4 814.8" fill="none" stroke="#35c4ee" stroke-width="4.1" stroke-linecap="butt"/>
<circle cx="2350.5" cy="810.4" r="17" fill="url(#g11)"/>
<line x1="2346.7" y1="812.6" x2="2336.1" y2="818.7" stroke="#111" stroke-width="3.7" />
<circle cx="2399.2" cy="810.4" r="7.5" fill="#f0284f"/>
<circle cx="2399.2" cy="810.4" r="3" fill="#b01c3a"/>
<text x="2350.5" y="862.5" font-size="21.5" fill="#d6d6d6" text-anchor="middle">94:6</text>
<rect x="2425.8" y="742.3" width="424.6" height="280.7" rx="10" fill="url(#g10)"/>
<text x="2638.7" y="769.4" font-size="22" fill="#f0284f" text-anchor="middle">ADSR</text>
<circle cx="2804.8" cy="762.6" r="7" fill="#3ee890"/>
<line x1="2804.8" y1="762.6" x2="2823.8" y2="762.6" stroke="#3ee890" stroke-width="3.4" />
<path d="M2822.8 755.4L2832.3 762.6L2822.8 769.8Z" fill="#3ee890"/>
<line x1="2478" y1="786" x2="2800" y2="786" stroke="#4a4a4a" stroke-width="1" />
<line x1="2478" y1="810" x2="2800" y2="810" stroke="#383838" stroke-width="1" />
<line x1="2478" y1="834.6" x2="2800" y2="834.6" stroke="#383838" stroke-width="1" />
<line x1="2478" y1="859" x2="2800" y2="859" stroke="#383838" stroke-width="1" />
<line x1="2478" y1="884" x2="2800" y2="884" stroke="#4a4a4a" stroke-width="1" />
<path d="M2479.6 879L2505 831.6L2533 786C2545 815 2555 835 2569.7 844S2595 862 2605.7 864" fill="none" stroke="#f0284f" stroke-width="2.4"/>
<path d="M2605.7 864H2691" fill="none" stroke="#f0284f" stroke-width="2.4" stroke-dasharray="9 7"/>
<path d="M2691 864L2720.8 877L2751.7 884" fill="none" stroke="#f0284f" stroke-width="2.4"/>
<circle cx="2505" cy="831.6" r="5.5" fill="#f0284f"/>
<circle cx="2533" cy="786" r="5.5" fill="#f0284f"/>
<circle cx="2569.7" cy="844" r="5.5" fill="#f0284f"/>
<circle cx="2605.7" cy="864" r="5.5" fill="#f0284f"/>
<circle cx="2720.8" cy="877" r="5.5" fill="#f0284f"/>
<circle cx="2751.7" cy="884" r="5.5" fill="#f0284f"/>
<rect x="2476.1" y="875.5" width="7" height="7" rx="1.5" fill="#fff"/>
<rect x="2485.5" y="859" width="7" height="7" rx="1.5" fill="#fff"/>
<rect x="2702.5" y="841.5" width="7" height="7" rx="1.5" fill="#fff"/>
<rect x="2716" y="859.5" width="7" height="7" rx="1.5" fill="#fff"/>
<circle cx="2447.4" cy="810.4" r="7.5" fill="#f0284f"/>
<circle cx="2447.4" cy="810.4" r="3" fill="#b01c3a"/>
<circle cx="2830.8" cy="810.4" r="7.5" fill="#f0284f"/>
<circle cx="2830.8" cy="810.4" r="3" fill="#b01c3a"/>
<circle cx="2447.4" cy="955.3" r="5.7" fill="none" stroke="#ffd93d" stroke-width="3.4"/>
<path d="M2438 995.2L2444 999.7L2438 1004.2Z" fill="#ffd93d"/>
<path d="M2445.5 1009.7H2451V989.4H2462V1009.7H2467.5" fill="none" stroke="#ffd93d" stroke-width="2.4"/>
<path d="M2495 979.3A34 34 0 1 1 2543 979.3" fill="none" stroke="#4d4d4d" stroke-width="4.1" stroke-linecap="butt"/>
<path d="M2495 979.3A34 34 0 0 1 2522 921.4" fill="none" stroke="#f0284f" stroke-width="4.1" stroke-linecap="butt"/>
<circle cx="2519" cy="955.3" r="24" fill="url(#g11)"/>
<line x1="2519.5" y1="949.1" x2="2521" y2="931.9" stroke="#111" stroke-width="4.3" />
<path d="M2575 979.3A34 34 0 1 1 2623 979.3" fill="none" stroke="#4d4d4d" stroke-width="4.1" stroke-linecap="butt"/>
<path d="M2575 979.3A34 34 0 1 1 2625 933.4" fill="none" stroke="#f0284f" stroke-width="4.1" stroke-linecap="butt"/>
<circle cx="2599" cy="955.3" r="24" fill="url(#g11)"/>
<line x1="2603.8" y1="951.3" x2="2617" y2="940.2" stroke="#111" stroke-width="4.3" />
<path d="M2655.3 979.3A34 34 0 1 1 2703.3 979.3" fill="none" stroke="#4d4d4d" stroke-width="4.1" stroke-linecap="butt"/>
<path d="M2655.3 979.3A34 34 0 0 1 2645.8 949.4" fill="none" stroke="#f0284f" stroke-width="4.1" stroke-linecap="butt"/>
<circle cx="2679.3" cy="955.3" r="24" fill="url(#g11)"/>
<line x1="2673.2" y1="954.2" x2="2656.1" y2="951.2" stroke="#111" stroke-width="4.3" />
<path d="M2735.3 979.3A34 34 0 1 1 2783.3 979.3" fill="none" stroke="#4d4d4d" stroke-width="4.1" stroke-linecap="butt"/>
<path d="M2735.3 979.3A34 34 0 0 1 2768.1 922.5" fill="none" stroke="#f0284f" stroke-width="4.1" stroke-linecap="butt"/>
<circle cx="2759.3" cy="955.3" r="24" fill="url(#g11)"/>
<line x1="2760.9" y1="949.3" x2="2765.4" y2="932.6" stroke="#111" stroke-width="4.3" />
<text x="2519" y="1007" font-size="22" fill="#d6d6d6" text-anchor="middle">A</text>
<text x="2599" y="1007" font-size="22" fill="#d6d6d6" text-anchor="middle">D</text>
<text x="2679.3" y="1007" font-size="22" fill="#d6d6d6" text-anchor="middle">S</text>
<text x="2759.3" y="1007" font-size="22" fill="#d6d6d6" text-anchor="middle">R</text>
<circle cx="2831.6" cy="955.3" r="5.7" fill="#35506e" stroke="#4fa8f2" stroke-width="3.4"/>
<rect x="2857.5" y="742.3" width="136.7" height="136.7" rx="10" fill="url(#g10)"/>
<text x="2927.3" y="769.4" font-size="22" fill="#f58a1f" text-anchor="middle" textLength="96" lengthAdjust="spacingAndGlyphs">Gain - Vol</text>
<circle cx="2879.5" cy="810.4" r="7.5" fill="#f58a1f"/>
<circle cx="2879.5" cy="810.4" r="3" fill="#b8651a"/>
<path d="M2909.3 828.4A25.5 25.5 0 1 1 2945.3 828.4" fill="none" stroke="#4d4d4d" stroke-width="4.1" stroke-linecap="butt"/>
<path d="M2909.3 828.4A25.5 25.5 0 0 1 2941.9 789.5" fill="none" stroke="#f58a1f" stroke-width="4.1" stroke-linecap="butt"/>
<path d="M2941.9 789.5A25.5 25.5 0 0 1 2949.8 798.4" fill="none" stroke="#35c4ee" stroke-width="4.1" stroke-linecap="butt"/>
<circle cx="2927.3" cy="810.4" r="17" fill="url(#g11)"/>
<line x1="2928.8" y1="806.2" x2="2933" y2="794.7" stroke="#111" stroke-width="3.7" />
<circle cx="2975.5" cy="810.4" r="7.5" fill="#f58a1f"/>
<circle cx="2975.5" cy="810.4" r="3" fill="#b8651a"/>
<line x1="2874" y1="853.5" x2="2885" y2="864.5" stroke="#f58a1f" stroke-width="2.8" />
<line x1="2874" y1="864.5" x2="2885" y2="853.5" stroke="#f58a1f" stroke-width="2.8" />
<text x="2943" y="862.5" font-size="21.5" fill="#d6d6d6" text-anchor="middle">+4.0 dB</text>
<rect x="3000.9" y="741.7" width="137.9" height="137.9" rx="10" fill="#1e1e1e" stroke="#3a3a3a" stroke-width="2"/>
<circle cx="3023.3" cy="810.4" r="7.5" fill="#f0284f"/>
<circle cx="3023.3" cy="810.4" r="3" fill="#b01c3a"/>
<rect x="3044.5" y="751" width="17" height="119" fill="url(#g13)"/>
<rect x="266.8" y="886.2" width="424.6" height="280.7" rx="10" fill="url(#g10)"/>
<path d="M316 1045A25.5 25.5 0 1 1 352 1045" fill="none" stroke="#4d4d4d" stroke-width="4.1" stroke-linecap="butt"/>
<circle cx="334" cy="1027" r="17" fill="url(#g12)"/>
<line x1="334" y1="1021.9" x2="334" y2="1010.5" stroke="#e4e4e4" stroke-width="4.9" />
<path d="M316 1117A25.5 25.5 0 1 1 352 1117" fill="none" stroke="#4d4d4d" stroke-width="4.1" stroke-linecap="butt"/>
<circle cx="334" cy="1099" r="17" fill="url(#g12)"/>
<line x1="334" y1="1093.9" x2="334" y2="1082.5" stroke="#e4e4e4" stroke-width="4.9" />
<text x="479" y="913.8" font-size="22" fill="#f0f0f0" text-anchor="middle">S/H LFO</text>
<circle cx="649" cy="906.7" r="7" fill="#3ee890"/>
<line x1="649" y1="906.7" x2="668" y2="906.7" stroke="#3ee890" stroke-width="3.4" />
<path d="M667 899.5L676.5 906.7L667 913.9Z" fill="#3ee890"/>
<path d="M494.8 995A34 34 0 1 1 542.8 995" fill="none" stroke="#4d4d4d" stroke-width="4.1" stroke-linecap="butt"/>
<path d="M494.8 995A34 34 0 0 1 518.8 937" fill="none" stroke="#f2f2f2" stroke-width="4.1" stroke-linecap="butt"/>
<circle cx="518.8" cy="971" r="24" fill="url(#g11)"/>
<line x1="513.4" y1="974.1" x2="498.4" y2="982.8" stroke="#111" stroke-width="4.3" />
<path d="M494.8 1075.4A34 34 0 1 1 542.8 1075.4" fill="none" stroke="#4d4d4d" stroke-width="4.1" stroke-linecap="butt"/>
<path d="M518.8 1017.4A34 34 0 0 1 549.6 1037" fill="none" stroke="#f2f2f2" stroke-width="4.1" stroke-linecap="butt"/>
<circle cx="518.8" cy="1051.4" r="24" fill="url(#g11)"/>
<line x1="524.5" y1="1048.8" x2="540.1" y2="1041.5" stroke="#111" stroke-width="4.3" />
<path d="M402 964H408V977H420V971H428V977H434V964H446V971H459" fill="none" stroke="#f0f0f0" stroke-width="2.4"/>
<path d="M580 965C586 985 590 985 596 974S604 968 610 976S618 972 622 968L634 978" fill="none" stroke="#8a8a8a" stroke-width="2"/>
<path d="M402 1045H408V1058H417V1045H426V1058H435V1045H444V1058H453V1045H459" fill="none" stroke="#9a9a9a" stroke-width="2.4"/>
<path d="M580 1044H590L596 1049H606L612 1054H620L624 1051H634" fill="none" stroke="#f0f0f0" stroke-width="2.4"/>
<text x="518.8" y="1108.5" font-size="22" fill="#f0f0f0" text-anchor="middle">N = 6</text>
<text x="364" y="1148.7" font-size="22" fill="#f58a1f">1.00</text>
<ellipse cx="430" cy="1146" rx="4" ry="3" fill="#f58a1f" transform="rotate(-20 430 1146)"/>
<line x1="433.5" y1="1145" x2="433.5" y2="1129" stroke="#f58a1f" stroke-width="2" />
<circle cx="439.5" cy="1147" r="1.6" fill="#f58a1f"/>
<path d="M450 1136H460L455 1142Z" fill="#f58a1f"/>
<text x="503.5" y="1148.7" font-size="22" fill="#c56cf5">0 °</text>
<text x="551.4" y="1148.7" font-size="22" fill="#c56cf5">+73 °</text>
<text x="654.6" y="1142" font-size="24" fill="#f0f0f0" text-anchor="middle">±</text>
<circle cx="671" cy="955.3" r="5.5" fill="none" stroke="#f0f0f0" stroke-width="2.8"/>
<rect x="698.6" y="886.2" width="136.7" height="136.7" rx="10" fill="url(#g10)"/>
<text x="766.7" y="913.8" font-size="22" fill="#f58a1f" text-anchor="middle" textLength="98" lengthAdjust="spacingAndGlyphs">Mod Amt₁</text>
<circle cx="719.3" cy="955.3" r="7.5" fill="#f58a1f"/>
<circle cx="719.3" cy="955.3" r="3.4" fill="#2d2d2d"/>
<path d="M748.7 973.3A25.5 25.5 0 1 1 784.7 973.3" fill="none" stroke="#4d4d4d" stroke-width="4.1" stroke-linecap="butt"/>
<path d="M766.7 929.8A25.5 25.5 0 0 1 786.2 938.9" fill="none" stroke="#f58a1f" stroke-width="4.1" stroke-linecap="butt"/>
<circle cx="766.7" cy="955.3" r="17" fill="url(#g11)"/>
<line x1="770.3" y1="952.8" x2="780.3" y2="945.7" stroke="#111" stroke-width="3.7" />
<circle cx="815.4" cy="955.3" r="7.5" fill="#f58a1f"/>
<line x1="713.8" y1="998" x2="724.8" y2="1009" stroke="#f58a1f" stroke-width="2.8" />
<line x1="713.8" y1="1009" x2="724.8" y2="998" stroke="#f58a1f" stroke-width="2.8" />
<text x="782.8" y="1007" font-size="21.5" fill="#d6d6d6" text-anchor="middle">+8.2 dB</text>
<rect x="842.5" y="1030.2" width="280.7" height="280.7" rx="10" fill="#1e1e1e" stroke="#3a3a3a" stroke-width="2"/>
<text x="983" y="1057.7" font-size="22" fill="#4fa8f2" text-anchor="middle">Feedbacks</text>
<circle cx="863.2" cy="1099.2" r="7.5" fill="#4fa8f2"/>
<circle cx="1103" cy="1099.2" r="7.5" fill="#4fa8f2"/>
<circle cx="912.7" cy="1098" r="9" fill="none" stroke="#4fa8f2" stroke-width="2.4"/>
<path d="M912.7 1098V1089A9 9 0 0 1 920.5 1093.5Z" fill="#4fa8f2"/>
<rect x="890" y="1116" width="46" height="4" fill="#4fa8f2"/>
<ellipse cx="960.6" cy="1107" rx="4.6" ry="3.4" fill="#c8c8c8" transform="rotate(-20 960.6 1107)"/>
<line x1="964.6" y1="1107" x2="964.6" y2="1089" stroke="#c8c8c8" stroke-width="2" />
<path d="M964.6 1089C965.6 1094 971.6 1095 969.6 1101" fill="none" stroke="#c8c8c8" stroke-width="2"/>
<path d="M964.6 1094C965.6 1099 971.6 1100 969.6 1106" fill="none" stroke="#c8c8c8" stroke-width="2"/>
<ellipse cx="1007" cy="1107" rx="4.6" ry="3.4" fill="#c8c8c8" transform="rotate(-20 1007 1107)"/>
<line x1="1011" y1="1107" x2="1011" y2="1089" stroke="#c8c8c8" stroke-width="2" />
<path d="M1011 1089C1012 1094 1018 1095 1016 1101" fill="none" stroke="#c8c8c8" stroke-width="2"/>
<ellipse cx="1052.5" cy="1107" rx="4.6" ry="3.4" fill="#c8c8c8" transform="rotate(-20 1052.5 1107)"/>
<line x1="1056.5" y1="1107" x2="1056.5" y2="1089" stroke="#c8c8c8" stroke-width="2" />
<path d="M942 1243.5A58 58 0 1 1 1024 1243.5" fill="none" stroke="#4d4d4d" stroke-width="4.1" stroke-linecap="butt"/>
<path d="M942 1243.5A58 58 0 0 1 927.8 1220.4" fill="none" stroke="#4fa8f2" stroke-width="4.1" stroke-linecap="butt"/>
<circle cx="983" cy="1202.5" r="46" fill="url(#g11)"/>
<line x1="971.3" y1="1205.2" x2="939.1" y2="1212.6" stroke="#111" stroke-width="6.2" />
<text x="983" y="1280" font-size="21.5" fill="#d6d6d6" text-anchor="middle">24.8 ms</text>
<rect x="1130.4" y="1174.1" width="136.7" height="136.7" rx="10" fill="url(#g10)"/>
<text x="1198.3" y="1200.7" font-size="22" fill="#4fa8f2" text-anchor="middle" textLength="98" lengthAdjust="spacingAndGlyphs">Mod Amt₂</text>
<circle cx="1151" cy="1243" r="7.5" fill="#4fa8f2"/>
<path d="M1180.3 1261A25.5 25.5 0 1 1 1216.3 1261" fill="none" stroke="#4d4d4d" stroke-width="4.1" stroke-linecap="butt"/>
<path d="M1198.3 1217.5A25.5 25.5 0 0 1 1214.7 1223.5" fill="none" stroke="#4fa8f2" stroke-width="4.1" stroke-linecap="butt"/>
<circle cx="1198.3" cy="1243" r="17" fill="url(#g11)"/>
<line x1="1201.4" y1="1239.9" x2="1210.1" y2="1231.2" stroke="#111" stroke-width="3.7" />
<circle cx="1247" cy="1243" r="7.5" fill="#4fa8f2"/>
<line x1="1145.5" y1="1285.8" x2="1156.5" y2="1296.8" stroke="#4fa8f2" stroke-width="2.8" />
<line x1="1145.5" y1="1296.8" x2="1156.5" y2="1285.8" stroke="#4fa8f2" stroke-width="2.8" />
<text x="1214.4" y="1294.7" font-size="21.5" fill="#d6d6d6" text-anchor="middle">+7.3 dB</text>
<rect x="1274.3" y="1030.2" width="424.6" height="280.7" rx="10" fill="url(#g10)"/>
<text x="1487.3" y="1057.7" font-size="22" fill="#4fa8f2" text-anchor="middle">Sine</text>
<circle cx="1296.3" cy="1098.7" r="8" fill="#ffd93d"/>
<circle cx="1296.3" cy="1170.7" r="8" fill="#c56cf5"/>
<circle cx="1296.3" cy="1242.7" r="8" fill="#f58a1f"/>
<path d="M1330.3 1094.7L1335.8 1098.7L1330.3 1102.7Z" fill="#8a8a8a"/>
<line x1="1342.8" y1="1090.7" x2="1342.8" y2="1109.2" stroke="#8a8a8a" stroke-width="2" />
<path d="M1338.3 1093.7L1342.8 1086.2L1347.3 1093.7Z" fill="#8a8a8a"/>
<circle cx="1680.1" cy="1098.7" r="8" fill="#4fa8f2"/>
<path d="M1325.7 1187.7A25.5 25.5 0 1 1 1361.7 1187.7" fill="none" stroke="#4d4d4d" stroke-width="4.1" stroke-linecap="butt"/>
<circle cx="1343.7" cy="1169.7" r="17" fill="url(#g12)"/>
<line x1="1340.4" y1="1173.6" x2="1333.1" y2="1182.3" stroke="#e4e4e4" stroke-width="4.9" />
<path d="M1325.7 1260.2A25.5 25.5 0 1 1 1361.7 1260.2" fill="none" stroke="#4d4d4d" stroke-width="4.1" stroke-linecap="butt"/>
<path d="M1343.7 1216.7A25.5 25.5 0 0 1 1368 1234.3" fill="none" stroke="#f58a1f" stroke-width="4.1" stroke-linecap="butt"/>
<circle cx="1343.7" cy="1242.2" r="17" fill="url(#g12)"/>
<line x1="1348.6" y1="1240.8" x2="1359.6" y2="1237.9" stroke="#e4e4e4" stroke-width="4.9" />
<path d="M1409.6 1199.3A42 42 0 1 1 1469 1199.3" fill="none" stroke="#4d4d4d" stroke-width="4.1" stroke-linecap="butt"/>
<path d="M1437.1 1127.7A42 42 0 0 1 1441.5 1127.7" fill="none" stroke="#4fa8f2" stroke-width="4.1" stroke-linecap="butt"/>
<circle cx="1439.3" cy="1169.7" r="31" fill="url(#g11)"/>
<line x1="1439.3" y1="1161.6" x2="1439.3" y2="1139.3" stroke="#111" stroke-width="4.9" />
<text x="1439.3" y="1231.2" font-size="22" fill="#d6d6d6" text-anchor="middle">Skew</text>
<rect x="1502.3" y="1145.2" width="67.4" height="51" fill="none" stroke="#484848" stroke-width="1"/>
<line x1="1513.5" y1="1145.2" x2="1513.5" y2="1196.2" stroke="#3e3e3e" stroke-width="1" />
<line x1="1524.8" y1="1145.2" x2="1524.8" y2="1196.2" stroke="#3e3e3e" stroke-width="1" />
<line x1="1536" y1="1145.2" x2="1536" y2="1196.2" stroke="#3e3e3e" stroke-width="1" />
<line x1="1547.2" y1="1145.2" x2="1547.2" y2="1196.2" stroke="#3e3e3e" stroke-width="1" />
<line x1="1558.5" y1="1145.2" x2="1558.5" y2="1196.2" stroke="#3e3e3e" stroke-width="1" />
<line x1="1502.3" y1="1155.4" x2="1569.7" y2="1155.4" stroke="#3e3e3e" stroke-width="1" />
<line x1="1502.3" y1="1165.6" x2="1569.7" y2="1165.6" stroke="#3e3e3e" stroke-width="1" />
<line x1="1502.3" y1="1175.8" x2="1569.7" y2="1175.8" stroke="#3e3e3e" stroke-width="1" />
<line x1="1502.3" y1="1186" x2="1569.7" y2="1186" stroke="#3e3e3e" stroke-width="1" />
<path d="M1502.3 1194.2L1504 1193.9L1505.7 1193L1507.4 1191.5L1509 1189.6L1510.7 1187.1L1512.4 1184.3L1514.1 1181L1515.8 1177.6L1517.5 1173.9L1519.2 1170.2L1520.8 1166.4L1522.5 1162.7L1524.2 1159.3L1525.9 1156L1527.6 1153.2L1529.3 1150.7L1531 1148.8L1532.6 1147.3L1534.3 1146.4L1536 1146.2L1537.7 1146.4L1539.4 1147.3L1541.1 1148.8L1542.8 1150.7L1544.4 1153.2L1546.1 1156L1547.8 1159.3L1549.5 1162.7L1551.2 1166.4L1552.9 1170.2L1554.5 1173.9L1556.2 1177.6L1557.9 1181L1559.6 1184.3L1561.3 1187.1L1563 1189.6L1564.7 1191.5L1566.3 1193L1568 1193.9L1569.7 1194.2" fill="none" stroke="#4fa8f2" stroke-width="2.6" stroke-linejoin="round"/>
<path d="M1601.6 1199.3A42 42 0 1 1 1661 1199.3" fill="none" stroke="#4d4d4d" stroke-width="4.1" stroke-linecap="butt"/>
<circle cx="1631.3" cy="1169.7" r="31" fill="url(#g11)"/>
<line x1="1626.1" y1="1175.8" x2="1611.8" y2="1192.9" stroke="#111" stroke-width="4.9" />
<text x="1631.3" y="1231.2" font-size="22" fill="#d6d6d6" text-anchor="middle">Fold</text>
<g transform="translate(1343.7 1283.2) scale(1.000)">
<path d="M-21.5 0L-15.5 -4.8V4.8Z" fill="#f58a1f"/>
<path d="M21.5 0L15.5 -4.8V4.8Z" fill="#f58a1f"/>
<path d="M-11 -11H-7V1H-6V11H-11Z M-4 -11H-0.8V11H-5V1H-4Z M0.8 -11H4V1H5V11H0.8Z M7 -11H11V11H6V1H7Z" fill="#f58a1f"/>
</g>
<text x="1406.3" y="1291.7" font-size="22" fill="#f58a1f">2:1</text>
<text x="1526.8" y="1291.7" font-size="22" fill="#f58a1f" text-anchor="end">-0.31</text>
<text x="1538.8" y="1291.7" font-size="22" fill="#f58a1f">st</text>
<text x="1586.8" y="1289.2" font-size="22" fill="#5e5e5e" text-anchor="middle">±</text>
<text x="1680.3" y="1291.7" font-size="22" fill="#f58a1f" text-anchor="end">0.00 Hz</text>
<rect x="2137.9" y="1030.2" width="136.7" height="136.7" rx="10" fill="url(#g10)"/>
<text x="2206.7" y="1057.7" font-size="22" fill="#50c014" text-anchor="middle" textLength="110" lengthAdjust="spacingAndGlyphs">BeelzeXOR</text>
<circle cx="2159.3" cy="1083" r="7.5" fill="#f58a1f"/>
<circle cx="2159.3" cy="1114.8" r="7.5" fill="#4fa8f2"/>
<line x1="2167" y1="1083" x2="2186" y2="1083" stroke="#50c014" stroke-width="1.6" />
<line x1="2167" y1="1114.8" x2="2186" y2="1114.8" stroke="#50c014" stroke-width="1.6" />
<path d="M2177 1076C2184 1090 2184 1108 2177 1121.5" fill="none" stroke="#50c014" stroke-width="2"/>
<path d="M2184 1076H2200C2215 1076 2228 1088 2234 1099C2228 1110 2215 1121.5 2200 1121.5H2184C2191 1108 2191 1090 2184 1076Z" fill="none" stroke="#50c014" stroke-width="2"/>
<line x1="2234" y1="1099" x2="2250" y2="1099" stroke="#50c014" stroke-width="1.6" />
<circle cx="2255.3" cy="1099.2" r="7.5" fill="#ffd93d"/>
<rect x="2281.8" y="1030.2" width="424.6" height="280.7" rx="10" fill="url(#g10)"/>
<text x="2494.4" y="1057.7" font-size="22" fill="#50c014" text-anchor="middle">SVF</text>
<circle cx="2303.2" cy="1099.2" r="7.5" fill="#50c014"/>
<circle cx="2303.2" cy="1171" r="5.7" fill="none" stroke="#f58a1f" stroke-width="3.4"/>
<path d="M2333 1117.2A25.5 25.5 0 1 1 2369 1117.2" fill="none" stroke="#4d4d4d" stroke-width="4.1" stroke-linecap="butt"/>
<path d="M2345.7 1074.3A25.5 25.5 0 0 1 2350.1 1073.7" fill="none" stroke="#3a7a9a" stroke-width="4.1" stroke-linecap="butt"/>
<path d="M2350.1 1073.7A25.5 25.5 0 0 1 2355.4 1074.1" fill="none" stroke="#35c4ee" stroke-width="4.1" stroke-linecap="butt"/>
<circle cx="2351" cy="1099.2" r="17" fill="url(#g12)"/>
<line x1="2349.9" y1="1094.2" x2="2347.6" y2="1083.1" stroke="#e4e4e4" stroke-width="4.9" />
<path d="M2333 1189A25.5 25.5 0 1 1 2369 1189" fill="none" stroke="#4d4d4d" stroke-width="4.1" stroke-linecap="butt"/>
<path d="M2349.7 1145.5A25.5 25.5 0 0 1 2352.3 1145.5" fill="none" stroke="#8a5a2a" stroke-width="4.1" stroke-linecap="butt"/>
<circle cx="2351" cy="1171" r="17" fill="url(#g12)"/>
<line x1="2351" y1="1165.9" x2="2351" y2="1154.5" stroke="#e4e4e4" stroke-width="4.9" />
<path d="M2333 1261A25.5 25.5 0 1 1 2369 1261" fill="none" stroke="#4d4d4d" stroke-width="4.1" stroke-linecap="butt"/>
<path d="M2333 1261A25.5 25.5 0 0 1 2351 1217.5" fill="none" stroke="#f58a1f" stroke-width="4.1" stroke-linecap="butt"/>
<circle cx="2351" cy="1243" r="17" fill="url(#g12)"/>
<line x1="2351" y1="1237.9" x2="2351" y2="1226.5" stroke="#e4e4e4" stroke-width="4.9" />
<g transform="translate(2351 1283) scale(1.000)">
<path d="M-21.5 0L-15.5 -4.8V4.8Z" fill="#f58a1f"/>
<path d="M21.5 0L15.5 -4.8V4.8Z" fill="#f58a1f"/>
<path d="M-11 -11H-7V1H-6V11H-11Z M-4 -11H-0.8V11H-5V1H-4Z M0.8 -11H4V1H5V11H0.8Z M7 -11H11V11H6V1H7Z" fill="#f58a1f"/>
</g>
<path d="M2453.8 1211.7A58 58 0 1 1 2535.8 1211.7" fill="none" stroke="#4d4d4d" stroke-width="4.1" stroke-linecap="butt"/>
<path d="M2453.8 1211.7A58 58 0 0 1 2528.1 1123.2" fill="none" stroke="#50c014" stroke-width="4.1" stroke-linecap="butt"/>
<circle cx="2494.8" cy="1170.7" r="46" fill="url(#g11)"/>
<line x1="2501.7" y1="1160.9" x2="2520.7" y2="1133.8" stroke="#111" stroke-width="6.2" />
<text x="2494.8" y="1247.3" font-size="21.5" fill="#d6d6d6" text-anchor="middle">2.09 kHz</text>
<path d="M2438 1279H2446C2452 1279 2453 1291 2458 1291" fill="none" stroke="#c8c8c8" stroke-width="2"/>
<path d="M2487 1292C2490 1284 2492 1278 2495.3 1278S2500 1284 2504 1292" fill="none" stroke="#50c014" stroke-width="2"/>
<path d="M2552 1279H2544C2538 1279 2536 1291 2531 1291" fill="none" stroke="#c8c8c8" stroke-width="2"/>
<rect x="2472.4" y="1299" width="45.3" height="4.5" fill="#50c014"/>
<path d="M2600.9 1200.8A42.5 42.5 0 1 1 2661.1 1200.8" fill="none" stroke="#4d4d4d" stroke-width="4.1" stroke-linecap="butt"/>
<path d="M2600.9 1200.8A42.5 42.5 0 0 1 2608.5 1134.7" fill="none" stroke="#50c014" stroke-width="4.1" stroke-linecap="butt"/>
<path d="M2608.5 1134.7A42.5 42.5 0 0 1 2620.7 1129.5" fill="none" stroke="#3a7a8a" stroke-width="4.1" stroke-linecap="butt"/>
<circle cx="2631" cy="1170.7" r="31" fill="url(#g11)"/>
<line x1="2629.3" y1="1162.8" x2="2624.7" y2="1141" stroke="#111" stroke-width="4.9" />
<path d="M2624 1115.5H2638L2631 1124.5Z" fill="#8a8a8a"/>
<path d="M2619 1232C2627 1232 2627.5 1213 2631 1213S2635 1232 2643 1232Z" fill="#c8c8c8"/>
<circle cx="2687.4" cy="1099.2" r="5.7" fill="#2c4a1c" stroke="#50c014" stroke-width="3.4"/>
<line x1="1966.8" y1="523.6" x2="1999.4" y2="523.6" stroke="#ffd93d" stroke-width="5" />
<path d="M1993.4 515.6L2007.4 523.6L1993.4 531.6Z" fill="#ffd93d"/>
<circle cx="1966.8" cy="523.6" r="7.5" fill="#ffd93d"/>
<circle cx="2015.4" cy="523.6" r="7.5" fill="#ffd93d"/>
<line x1="2111.5" y1="523.6" x2="2143.3" y2="523.6" stroke="#ffd93d" stroke-width="5" />
<path d="M2137.3 515.6L2151.3 523.6L2137.3 531.6Z" fill="#ffd93d"/>
<circle cx="2111.5" cy="523.6" r="7.5" fill="#ffd93d"/>
<circle cx="2111.5" cy="523.6" r="3.4" fill="#8a7a2a"/>
<circle cx="2159.3" cy="523.6" r="7.5" fill="#ffd93d"/>
<circle cx="2159.3" cy="523.6" r="3.4" fill="#8a7a2a"/>
<line x1="1967.6" y1="810.4" x2="1999.4" y2="810.4" stroke="#f58a1f" stroke-width="5" />
<path d="M1993.4 802.4L2007.4 810.4L1993.4 818.4Z" fill="#f58a1f"/>
<line x1="2255.3" y1="810.4" x2="2287" y2="810.4" stroke="#f0284f" stroke-width="5" />
<path d="M2281 802.4L2295 810.4L2281 818.4Z" fill="#f0284f"/>
<line x1="2399.2" y1="810.4" x2="2431.4" y2="810.4" stroke="#f0284f" stroke-width="5" />
<path d="M2425.4 802.4L2439.4 810.4L2425.4 818.4Z" fill="#f0284f"/>
<line x1="2830.8" y1="810.4" x2="2863.5" y2="810.4" stroke="#f0284f" stroke-width="5" />
<path d="M2857.5 802.4L2871.5 810.4L2857.5 818.4Z" fill="#f0284f"/>
<line x1="2975.5" y1="810.4" x2="3007.3" y2="810.4" stroke="#f58a1f" stroke-width="5" />
<path d="M3001.3 802.4L3015.3 810.4L3001.3 818.4Z" fill="#f58a1f"/>
<line x1="2255.3" y1="1099.2" x2="2287.2" y2="1099.2" stroke="#ffd93d" stroke-width="5" />
<path d="M2281.2 1091.2L2295.2 1099.2L2281.2 1107.2Z" fill="#ffd93d"/>
<line x1="1247" y1="1243" x2="1279.2" y2="1243" stroke="#4fa8f2" stroke-width="5" />
<path d="M1273.2 1235L1287.2 1243L1273.2 1251Z" fill="#4fa8f2"/>
<path d="M822 667C900 667 880 810.4 990 810.4" fill="none" stroke="url(#g14)" stroke-width="4" stroke-linecap="round"/>
<path d="M0 0L-15 -9 L-15 9Z" fill="#f58a1f" transform="translate(1000 810.4) rotate(0)"/>
<path d="M822 955.3C910 955.3 900 858 990 858" fill="none" stroke="url(#g15)" stroke-width="4" stroke-linecap="round"/>
<path d="M0 0L-15 -9 L-15 9Z" fill="#f58a1f" transform="translate(1000 858) rotate(0)"/>
<path d="M1110 810.4C1200 810.4 1190 739 1278 739" fill="none" stroke="url(#g16)" stroke-width="4" stroke-linecap="round"/>
<path d="M0 0L-15 -9 L-15 9Z" fill="#f58a1f" transform="translate(1288 739) rotate(0)"/>
<path d="M1686 667C1790 667 1740 810.4 1855 810.4" fill="none" stroke="url(#g17)" stroke-width="4" stroke-linecap="round"/>
<path d="M0 0L-15 -9 L-15 9Z" fill="#f58a1f" transform="translate(1865 810.4) rotate(0)"/>
<path d="M1686 667C1722 672 1712 760 1690 805C1645 900 1450 1020 1278 1100C1150 1158 1000 1186 915 1183C825 1180 790 1105 846 1099.5" fill="none" stroke="url(#g18)" stroke-width="5" stroke-linecap="round"/>
<path d="M0 0L-15 -9 L-15 9Z" fill="#f58a1f" transform="translate(857 1099.5) rotate(-3)"/>
<path d="M2118 523.6C2150 528 2138 585 2120 620C2060 740 1750 870 1400 960C1150 1022 900 1045 804 1043C715 1040 640 985 700 958" fill="none" stroke="url(#g19)" stroke-width="4.5" stroke-linecap="round"/>
<path d="M0 0L-15 -9 L-15 9Z" fill="#ffd93d" transform="translate(712 955) rotate(-8)"/>
<path d="M1975 812C2060 825 2040 1050 2140 1081" fill="none" stroke="url(#g20)" stroke-width="4" stroke-linecap="round"/>
<path d="M0 0L-15 -9 L-15 9Z" fill="#f58a1f" transform="translate(2152 1083) rotate(5)"/>
<path d="M1686 1099C1790 1080 1770 870 1855 859" fill="none" stroke="url(#g21)" stroke-width="4" stroke-linecap="round"/>
<path d="M0 0L-15 -9 L-15 9Z" fill="#4fa8f2" transform="translate(1865 859) rotate(0)"/>
<path d="M1686 1099C1830 1070 1850 960 1996 954.6" fill="none" stroke="url(#g22)" stroke-width="4" stroke-linecap="round"/>
<path d="M0 0L-15 -9 L-15 9Z" fill="#4fa8f2" transform="translate(2006 954.6) rotate(0)"/>
<path d="M1686 1099L2142 1114.5" fill="none" stroke="url(#g23)" stroke-width="4" stroke-linecap="round"/>
<path d="M0 0L-15 -9 L-15 9Z" fill="#4fa8f2" transform="translate(2152 1114.8) rotate(2)"/>
<path d="M1110 1099.2H1278" fill="none" stroke="url(#g24)" stroke-width="4" stroke-linecap="round"/>
<path d="M0 0L-15 -9 L-15 9Z" fill="#4fa8f2" transform="translate(1288 1099.2) rotate(0)"/>
<path d="M1110 1099.2C1200 1100 1190 1171 1278 1171" fill="none" stroke="url(#g25)" stroke-width="4" stroke-linecap="round"/>
<path d="M0 0L-15 -9 L-15 9Z" fill="#4fa8f2" transform="translate(1288 1171) rotate(0)"/>
<path d="M1108 1099.5C1150 1105 1150 1150 1120 1175C1095 1200 1100 1240 1134 1243" fill="none" stroke="#4fa8f2" stroke-width="4.5" stroke-linecap="round"/>
<path d="M0 0L-15 -9 L-15 9Z" fill="#4fa8f2" transform="translate(1144.5 1243) rotate(0)"/>
<path d="M2692 1101C2730 1115 2725 1195 2660 1212C2550 1240 2420 1180 2320 1085C2262 1025 2240 920 2258 880C2268 868 2280 861 2287 860" fill="none" stroke="url(#g26)" stroke-width="4.5" stroke-linecap="round"/>
<path d="M0 0L-15 -9 L-15 9Z" fill="#50c014" transform="translate(2296.5 859) rotate(-3)"/>
<path d="M2981 812C3015 825 3010 870 2990 888C2960 920 2900 926 2860 922C2780 915 2700 890 2641 865C2560 825 2480 770 2440 700C2410 650 2395 600 2400 570C2404 545 2415 530 2430 524" fill="none" stroke="url(#g27)" stroke-width="4.5" stroke-linecap="round"/>
<path d="M0 0L-15 -9 L-15 9Z" fill="#f58a1f" transform="translate(2440.5 523) rotate(-5)"/>
</g></g>
<rect x="339.5" y="167.5" width="2721" height="54" fill="#0d0d0d"/>
<line x1="339.5" y1="221.5" x2="3060.5" y2="221.5" stroke="#3a3a3a" stroke-width="2" />
<path d="M376.7 187.6A9 9 0 1 1 366.3 187.6" fill="none" stroke="#f58a1f" stroke-width="3.2" stroke-linecap="round"/>
<line x1="371.5" y1="183" x2="371.5" y2="194.5" stroke="#f58a1f" stroke-width="3.2" stroke-linecap="round"/>
<rect x="427" y="193" width="18" height="14" rx="2" fill="#8c8c8c"/>
<path d="M430.5 193V189.5A5.5 5.5 0 0 1 441.5 189.5V193" fill="none" stroke="#8c8c8c" stroke-width="3"/>
<circle cx="436" cy="198.5" r="2.2" fill="#1a1a1a"/>
<rect x="435" y="199" width="2" height="5" fill="#1a1a1a"/>
<rect x="465.5" y="183.5" width="3.2" height="3.2" fill="#3fb4f4"/>
<rect x="465.5" y="188.1" width="3.2" height="3.2" fill="#3fb4f4"/>
<rect x="465.5" y="192.7" width="3.2" height="3.2" fill="#3fb4f4"/>
<rect x="465.5" y="197.3" width="3.2" height="3.2" fill="#3fb4f4"/>
<rect x="465.5" y="201.9" width="3.2" height="3.2" fill="#3fb4f4"/>
<rect x="470.1" y="183.5" width="3.2" height="3.2" fill="#3fb4f4"/>
<rect x="470.1" y="188.1" width="3.2" height="3.2" fill="#3fb4f4"/>
<rect x="470.1" y="192.7" width="3.2" height="3.2" fill="#3fb4f4"/>
<rect x="470.1" y="197.3" width="3.2" height="3.2" fill="#3fb4f4"/>
<rect x="470.1" y="201.9" width="3.2" height="3.2" fill="#3fb4f4"/>
<rect x="474.7" y="183.5" width="3.2" height="3.2" fill="#3fb4f4"/>
<rect x="474.7" y="188.1" width="3.2" height="3.2" fill="#3fb4f4"/>
<rect x="474.7" y="192.7" width="3.2" height="3.2" fill="#3fb4f4"/>
<rect x="474.7" y="197.3" width="3.2" height="3.2" fill="#3fb4f4"/>
<rect x="474.7" y="201.9" width="3.2" height="3.2" fill="#3fb4f4"/>
<rect x="479.3" y="183.5" width="3.2" height="3.2" fill="#3fb4f4"/>
<rect x="479.3" y="188.1" width="3.2" height="3.2" fill="#3fb4f4"/>
<rect x="479.3" y="192.7" width="3.2" height="3.2" fill="#3fb4f4"/>
<rect x="479.3" y="197.3" width="3.2" height="3.2" fill="#3fb4f4"/>
<rect x="479.3" y="201.9" width="3.2" height="3.2" fill="#3fb4f4"/>
<rect x="483.9" y="183.5" width="3.2" height="3.2" fill="#3fb4f4"/>
<rect x="483.9" y="188.1" width="3.2" height="3.2" fill="#3fb4f4"/>
<rect x="483.9" y="192.7" width="3.2" height="3.2" fill="#3fb4f4"/>
<rect x="483.9" y="197.3" width="3.2" height="3.2" fill="#3fb4f4"/>
<rect x="483.9" y="201.9" width="3.2" height="3.2" fill="#3fb4f4"/>
<rect x="531.5" y="173.5" width="256" height="41" rx="6" fill="#1c1c1c"/>
<circle cx="552.5" cy="193" r="6.5" fill="none" stroke="#e8e8e8" stroke-width="2.6"/>
<line x1="557" y1="198" x2="563" y2="204" stroke="#e8e8e8" stroke-width="3" />
<path d="M563 194.5H573L568 200.5Z" fill="#e8e8e8"/>
<line x1="750" y1="188" x2="762" y2="200" stroke="#f0f0f0" stroke-width="2.6" />
<line x1="750" y1="200" x2="762" y2="188" stroke="#f0f0f0" stroke-width="2.6" />
<text x="1703" y="203" font-size="24" fill="#ffffff" text-anchor="middle" textLength="518" lengthAdjust="spacingAndGlyphs">Communication Theory / Communication Theory</text>
<line x1="2841" y1="194.5" x2="2855" y2="194.5" stroke="#8c8c8c" stroke-width="2.8" />
<circle cx="2888.5" cy="193" r="10" fill="none" stroke="#3fb4f4" stroke-width="2.6"/>
<line x1="2896" y1="200.5" x2="2903" y2="207.5" stroke="#3fb4f4" stroke-width="3.4" />
<text x="2888.5" y="199.5" font-size="17" fill="#3fb4f4" text-anchor="middle">1</text>
<line x1="2923" y1="194.5" x2="2940" y2="194.5" stroke="#8c8c8c" stroke-width="2.8" />
<line x1="2931.5" y1="186" x2="2931.5" y2="203" stroke="#8c8c8c" stroke-width="2.8" />
<path d="M2978 186H2973V203H2990V197" fill="none" stroke="#5e5e5e" stroke-width="2.4"/>
<path d="M2980 196L2990 186M2983 185H2991V193" fill="none" stroke="#5e5e5e" stroke-width="2.4"/>
<line x1="3021.6" y1="188.5" x2="3033.6" y2="200.5" stroke="#f0f0f0" stroke-width="2.8" />
<line x1="3021.6" y1="200.5" x2="3033.6" y2="188.5" stroke="#f0f0f0" stroke-width="2.8" />
<rect x="339.5" y="222.5" width="2721" height="198" fill="#0d0d0d"/>
<line x1="339.5" y1="421" x2="3060.5" y2="421" stroke="#2c2c2c" stroke-width="2" />
<g clip-path="url(#palclip)">
<text x="903" y="404.5" font-size="23" fill="#dcdcdc" text-anchor="middle" textLength="52" lengthAdjust="spacingAndGlyphs">Pulse</text>
<text x="1111" y="404.5" font-size="23" fill="#dcdcdc" text-anchor="middle" textLength="92.7" lengthAdjust="spacingAndGlyphs">Sawtooth</text>
<text x="1319" y="404.5" font-size="23" fill="#dcdcdc" text-anchor="middle" textLength="40.6" lengthAdjust="spacingAndGlyphs">Sine</text>
<text x="1527" y="404.5" font-size="23" fill="#dcdcdc" text-anchor="middle" textLength="77" lengthAdjust="spacingAndGlyphs">Triangle</text>
<text x="1735" y="404.5" font-size="23" fill="#dcdcdc" text-anchor="middle" textLength="104" lengthAdjust="spacingAndGlyphs">Wavetable</text>
<text x="2034" y="404.5" font-size="23" fill="#dcdcdc" text-anchor="middle" textLength="35" lengthAdjust="spacingAndGlyphs">Sub</text>
<text x="2333" y="404.5" font-size="23" fill="#dcdcdc" text-anchor="middle" textLength="77" lengthAdjust="spacingAndGlyphs">Phase-1</text>
<text x="2541" y="404.5" font-size="23" fill="#dcdcdc" text-anchor="middle" textLength="65.6" lengthAdjust="spacingAndGlyphs">Swarm</text>
<text x="2873" y="404.5" font-size="23" fill="#dcdcdc" text-anchor="middle" textLength="77.4" lengthAdjust="spacingAndGlyphs">Sampler</text>
<g transform="translate(807 248) scale(0.4507)">
<rect x="0" y="0" width="426" height="280" rx="12" fill="url(#g10)"/>
<text x="213" y="27.5" font-size="22" fill="#f0284f" text-anchor="middle">Pulse</text>
<circle cx="22" cy="68.5" r="5.7" fill="none" stroke="#ffd93d" stroke-width="3.4"/>
<circle cx="22" cy="140.5" r="5.7" fill="none" stroke="#c56cf5" stroke-width="3.4"/>
<circle cx="22" cy="212.5" r="5.7" fill="none" stroke="#f58a1f" stroke-width="3.4"/>
<path d="M56 64.5L61.5 68.5L56 72.5Z" fill="#8a8a8a"/>
<line x1="68.5" y1="60.5" x2="68.5" y2="79" stroke="#8a8a8a" stroke-width="2" />
<path d="M64 63.5L68.5 56L73 63.5Z" fill="#8a8a8a"/>
<circle cx="405.8" cy="68.5" r="5.7" fill="none" stroke="#f0284f" stroke-width="3.4"/>
<path d="M51.4 157.5A25.5 25.5 0 1 1 87.4 157.5" fill="none" stroke="#4d4d4d" stroke-width="4.1" stroke-linecap="butt"/>
<circle cx="69.4" cy="139.5" r="17" fill="url(#g12)"/>
<line x1="66.1" y1="143.4" x2="58.8" y2="152.1" stroke="#e4e4e4" stroke-width="4.9" />
<path d="M51.4 230A25.5 25.5 0 1 1 87.4 230" fill="none" stroke="#4d4d4d" stroke-width="4.1" stroke-linecap="butt"/>
<path d="M68.1 186.5A25.5 25.5 0 0 1 70.7 186.5" fill="none" stroke="#8a5a2a" stroke-width="4.1" stroke-linecap="butt"/>
<circle cx="69.4" cy="212" r="17" fill="url(#g12)"/>
<line x1="69.4" y1="206.9" x2="69.4" y2="195.5" stroke="#e4e4e4" stroke-width="4.9" />
<path d="M135.3 169.2A42 42 0 1 1 194.7 169.2" fill="none" stroke="#4d4d4d" stroke-width="4.1" stroke-linecap="butt"/>
<path d="M162.8 97.6A42 42 0 0 1 167.2 97.6" fill="none" stroke="#f0284f" stroke-width="4.1" stroke-linecap="butt"/>
<circle cx="165" cy="139.5" r="31" fill="url(#g11)"/>
<line x1="165" y1="131.4" x2="165" y2="109.1" stroke="#111" stroke-width="4.9" />
<text x="165" y="201" font-size="22" fill="#d6d6d6" text-anchor="middle">Width</text>
<rect x="228" y="115" width="67.4" height="51" fill="none" stroke="#484848" stroke-width="1"/>
<line x1="239.2" y1="115" x2="239.2" y2="166" stroke="#3e3e3e" stroke-width="1" />
<line x1="250.5" y1="115" x2="250.5" y2="166" stroke="#3e3e3e" stroke-width="1" />
<line x1="261.7" y1="115" x2="261.7" y2="166" stroke="#3e3e3e" stroke-width="1" />
<line x1="272.9" y1="115" x2="272.9" y2="166" stroke="#3e3e3e" stroke-width="1" />
<line x1="284.2" y1="115" x2="284.2" y2="166" stroke="#3e3e3e" stroke-width="1" />
<line x1="228" y1="125.2" x2="295.4" y2="125.2" stroke="#3e3e3e" stroke-width="1" />
<line x1="228" y1="135.4" x2="295.4" y2="135.4" stroke="#3e3e3e" stroke-width="1" />
<line x1="228" y1="145.6" x2="295.4" y2="145.6" stroke="#3e3e3e" stroke-width="1" />
<line x1="228" y1="155.8" x2="295.4" y2="155.8" stroke="#3e3e3e" stroke-width="1" />
<path d="M229 117H269.7V165H294.4" fill="none" stroke="#f0284f" stroke-width="2.6"/>
<path d="M327.3 169.2A42 42 0 1 1 386.7 169.2" fill="none" stroke="#4d4d4d" stroke-width="4.1" stroke-linecap="butt"/>
<circle cx="357" cy="139.5" r="31" fill="url(#g11)"/>
<line x1="351.8" y1="145.7" x2="337.5" y2="162.8" stroke="#111" stroke-width="4.9" />
<text x="357" y="201" font-size="22" fill="#d6d6d6" text-anchor="middle">Sync</text>
<g transform="translate(69.4 253) scale(1.000)">
<path d="M-21.5 0L-15.5 -4.8V4.8Z" fill="#f58a1f"/>
<path d="M21.5 0L15.5 -4.8V4.8Z" fill="#f58a1f"/>
<path d="M-11 -11H-7V1H-6V11H-11Z M-4 -11H-0.8V11H-5V1H-4Z M0.8 -11H4V1H5V11H0.8Z M7 -11H11V11H6V1H7Z" fill="#f58a1f"/>
</g>
<text x="132" y="261.5" font-size="22" fill="#f58a1f">1:1</text>
<text x="252.5" y="261.5" font-size="22" fill="#f58a1f" text-anchor="end">0.00</text>
<text x="264.5" y="261.5" font-size="22" fill="#f58a1f">st</text>
<text x="312.5" y="259" font-size="22" fill="#5e5e5e" text-anchor="middle">±</text>
<text x="406" y="261.5" font-size="22" fill="#f58a1f" text-anchor="end">0.00 Hz</text>
</g>
<g transform="translate(1015 248) scale(0.4507)">
<rect x="0" y="0" width="426" height="280" rx="12" fill="url(#g10)"/>
<text x="213" y="27.5" font-size="22" fill="#f0284f" text-anchor="middle">Sawtooth</text>
<circle cx="22" cy="68.5" r="5.7" fill="none" stroke="#ffd93d" stroke-width="3.4"/>
<circle cx="22" cy="140.5" r="5.7" fill="none" stroke="#c56cf5" stroke-width="3.4"/>
<circle cx="22" cy="212.5" r="5.7" fill="none" stroke="#f58a1f" stroke-width="3.4"/>
<path d="M56 64.5L61.5 68.5L56 72.5Z" fill="#8a8a8a"/>
<line x1="68.5" y1="60.5" x2="68.5" y2="79" stroke="#8a8a8a" stroke-width="2" />
<path d="M64 63.5L68.5 56L73 63.5Z" fill="#8a8a8a"/>
<circle cx="405.8" cy="68.5" r="5.7" fill="none" stroke="#f0284f" stroke-width="3.4"/>
<path d="M51.4 157.5A25.5 25.5 0 1 1 87.4 157.5" fill="none" stroke="#4d4d4d" stroke-width="4.1" stroke-linecap="butt"/>
<circle cx="69.4" cy="139.5" r="17" fill="url(#g12)"/>
<line x1="66.1" y1="143.4" x2="58.8" y2="152.1" stroke="#e4e4e4" stroke-width="4.9" />
<path d="M51.4 230A25.5 25.5 0 1 1 87.4 230" fill="none" stroke="#4d4d4d" stroke-width="4.1" stroke-linecap="butt"/>
<path d="M68.1 186.5A25.5 25.5 0 0 1 70.7 186.5" fill="none" stroke="#8a5a2a" stroke-width="4.1" stroke-linecap="butt"/>
<circle cx="69.4" cy="212" r="17" fill="url(#g12)"/>
<line x1="69.4" y1="206.9" x2="69.4" y2="195.5" stroke="#e4e4e4" stroke-width="4.9" />
<path d="M135.3 169.2A42 42 0 1 1 194.7 169.2" fill="none" stroke="#4d4d4d" stroke-width="4.1" stroke-linecap="butt"/>
<path d="M162.8 97.6A42 42 0 0 1 167.2 97.6" fill="none" stroke="#f0284f" stroke-width="4.1" stroke-linecap="butt"/>
<circle cx="165" cy="139.5" r="31" fill="url(#g11)"/>
<line x1="165" y1="131.4" x2="165" y2="109.1" stroke="#111" stroke-width="4.9" />
<text x="165" y="201" font-size="22" fill="#d6d6d6" text-anchor="middle">Shape</text>
<rect x="228" y="115" width="67.4" height="51" fill="none" stroke="#484848" stroke-width="1"/>
<line x1="239.2" y1="115" x2="239.2" y2="166" stroke="#3e3e3e" stroke-width="1" />
<line x1="250.5" y1="115" x2="250.5" y2="166" stroke="#3e3e3e" stroke-width="1" />
<line x1="261.7" y1="115" x2="261.7" y2="166" stroke="#3e3e3e" stroke-width="1" />
<line x1="272.9" y1="115" x2="272.9" y2="166" stroke="#3e3e3e" stroke-width="1" />
<line x1="284.2" y1="115" x2="284.2" y2="166" stroke="#3e3e3e" stroke-width="1" />
<line x1="228" y1="125.2" x2="295.4" y2="125.2" stroke="#3e3e3e" stroke-width="1" />
<line x1="228" y1="135.4" x2="295.4" y2="135.4" stroke="#3e3e3e" stroke-width="1" />
<line x1="228" y1="145.6" x2="295.4" y2="145.6" stroke="#3e3e3e" stroke-width="1" />
<line x1="228" y1="155.8" x2="295.4" y2="155.8" stroke="#3e3e3e" stroke-width="1" />
<path d="M230 165L293.4 117V165" fill="none" stroke="#f0284f" stroke-width="2.6"/>
<path d="M327.3 169.2A42 42 0 1 1 386.7 169.2" fill="none" stroke="#4d4d4d" stroke-width="4.1" stroke-linecap="butt"/>
<circle cx="357" cy="139.5" r="31" fill="url(#g11)"/>
<line x1="351.8" y1="145.7" x2="337.5" y2="162.8" stroke="#111" stroke-width="4.9" />
<text x="357" y="201" font-size="22" fill="#d6d6d6" text-anchor="middle">Sync</text>
<g transform="translate(69.4 253) scale(1.000)">
<path d="M-21.5 0L-15.5 -4.8V4.8Z" fill="#f58a1f"/>
<path d="M21.5 0L15.5 -4.8V4.8Z" fill="#f58a1f"/>
<path d="M-11 -11H-7V1H-6V11H-11Z M-4 -11H-0.8V11H-5V1H-4Z M0.8 -11H4V1H5V11H0.8Z M7 -11H11V11H6V1H7Z" fill="#f58a1f"/>
</g>
<text x="132" y="261.5" font-size="22" fill="#f58a1f">1:1</text>
<text x="252.5" y="261.5" font-size="22" fill="#f58a1f" text-anchor="end">0.00</text>
<text x="264.5" y="261.5" font-size="22" fill="#f58a1f">st</text>
<text x="312.5" y="259" font-size="22" fill="#5e5e5e" text-anchor="middle">±</text>
<text x="406" y="261.5" font-size="22" fill="#f58a1f" text-anchor="end">0.00 Hz</text>
</g>
<g transform="translate(1223 248) scale(0.4507)">
<rect x="0" y="0" width="426" height="280" rx="12" fill="url(#g10)"/>
<text x="213" y="27.5" font-size="22" fill="#f0284f" text-anchor="middle">Sine</text>
<circle cx="22" cy="68.5" r="5.7" fill="none" stroke="#ffd93d" stroke-width="3.4"/>
<circle cx="22" cy="140.5" r="5.7" fill="none" stroke="#c56cf5" stroke-width="3.4"/>
<circle cx="22" cy="212.5" r="5.7" fill="none" stroke="#f58a1f" stroke-width="3.4"/>
<path d="M56 64.5L61.5 68.5L56 72.5Z" fill="#8a8a8a"/>
<line x1="68.5" y1="60.5" x2="68.5" y2="79" stroke="#8a8a8a" stroke-width="2" />
<path d="M64 63.5L68.5 56L73 63.5Z" fill="#8a8a8a"/>
<circle cx="405.8" cy="68.5" r="5.7" fill="none" stroke="#f0284f" stroke-width="3.4"/>
<path d="M51.4 157.5A25.5 25.5 0 1 1 87.4 157.5" fill="none" stroke="#4d4d4d" stroke-width="4.1" stroke-linecap="butt"/>
<circle cx="69.4" cy="139.5" r="17" fill="url(#g12)"/>
<line x1="66.1" y1="143.4" x2="58.8" y2="152.1" stroke="#e4e4e4" stroke-width="4.9" />
<path d="M51.4 230A25.5 25.5 0 1 1 87.4 230" fill="none" stroke="#4d4d4d" stroke-width="4.1" stroke-linecap="butt"/>
<path d="M68.1 186.5A25.5 25.5 0 0 1 70.7 186.5" fill="none" stroke="#8a5a2a" stroke-width="4.1" stroke-linecap="butt"/>
<circle cx="69.4" cy="212" r="17" fill="url(#g12)"/>
<line x1="69.4" y1="206.9" x2="69.4" y2="195.5" stroke="#e4e4e4" stroke-width="4.9" />
<path d="M135.3 169.2A42 42 0 1 1 194.7 169.2" fill="none" stroke="#4d4d4d" stroke-width="4.1" stroke-linecap="butt"/>
<path d="M162.8 97.6A42 42 0 0 1 167.2 97.6" fill="none" stroke="#f0284f" stroke-width="4.1" stroke-linecap="butt"/>
<circle cx="165" cy="139.5" r="31" fill="url(#g11)"/>
<line x1="165" y1="131.4" x2="165" y2="109.1" stroke="#111" stroke-width="4.9" />
<text x="165" y="201" font-size="22" fill="#d6d6d6" text-anchor="middle">Skew</text>
<rect x="228" y="115" width="67.4" height="51" fill="none" stroke="#484848" stroke-width="1"/>
<line x1="239.2" y1="115" x2="239.2" y2="166" stroke="#3e3e3e" stroke-width="1" />
<line x1="250.5" y1="115" x2="250.5" y2="166" stroke="#3e3e3e" stroke-width="1" />
<line x1="261.7" y1="115" x2="261.7" y2="166" stroke="#3e3e3e" stroke-width="1" />
<line x1="272.9" y1="115" x2="272.9" y2="166" stroke="#3e3e3e" stroke-width="1" />
<line x1="284.2" y1="115" x2="284.2" y2="166" stroke="#3e3e3e" stroke-width="1" />
<line x1="228" y1="125.2" x2="295.4" y2="125.2" stroke="#3e3e3e" stroke-width="1" />
<line x1="228" y1="135.4" x2="295.4" y2="135.4" stroke="#3e3e3e" stroke-width="1" />
<line x1="228" y1="145.6" x2="295.4" y2="145.6" stroke="#3e3e3e" stroke-width="1" />
<line x1="228" y1="155.8" x2="295.4" y2="155.8" stroke="#3e3e3e" stroke-width="1" />
<path d="M228 164L229.7 163.7L231.4 162.8L233.1 161.4L234.7 159.4L236.4 157L238.1 154.1L239.8 150.9L241.5 147.4L243.2 143.8L244.8 140L246.5 136.2L248.2 132.6L249.9 129.1L251.6 125.9L253.3 123L255 120.6L256.6 118.6L258.3 117.2L260 116.3L261.7 116L263.4 116.3L265.1 117.2L266.8 118.6L268.4 120.6L270.1 123L271.8 125.9L273.5 129.1L275.2 132.6L276.9 136.2L278.5 140L280.2 143.8L281.9 147.4L283.6 150.9L285.3 154.1L287 157L288.7 159.4L290.3 161.4L292 162.8L293.7 163.7L295.4 164" fill="none" stroke="#f0284f" stroke-width="2.6" stroke-linejoin="round"/>
<path d="M327.3 169.2A42 42 0 1 1 386.7 169.2" fill="none" stroke="#4d4d4d" stroke-width="4.1" stroke-linecap="butt"/>
<circle cx="357" cy="139.5" r="31" fill="url(#g11)"/>
<line x1="351.8" y1="145.7" x2="337.5" y2="162.8" stroke="#111" stroke-width="4.9" />
<text x="357" y="201" font-size="22" fill="#d6d6d6" text-anchor="middle">Fold</text>
<g transform="translate(69.4 253) scale(1.000)">
<path d="M-21.5 0L-15.5 -4.8V4.8Z" fill="#f58a1f"/>
<path d="M21.5 0L15.5 -4.8V4.8Z" fill="#f58a1f"/>
<path d="M-11 -11H-7V1H-6V11H-11Z M-4 -11H-0.8V11H-5V1H-4Z M0.8 -11H4V1H5V11H0.8Z M7 -11H11V11H6V1H7Z" fill="#f58a1f"/>
</g>
<text x="132" y="261.5" font-size="22" fill="#f58a1f">1:1</text>
<text x="252.5" y="261.5" font-size="22" fill="#f58a1f" text-anchor="end">0.00</text>
<text x="264.5" y="261.5" font-size="22" fill="#f58a1f">st</text>
<text x="312.5" y="259" font-size="22" fill="#5e5e5e" text-anchor="middle">±</text>
<text x="406" y="261.5" font-size="22" fill="#f58a1f" text-anchor="end">0.00 Hz</text>
</g>
<g transform="translate(1431 248) scale(0.4507)">
<rect x="0" y="0" width="426" height="280" rx="12" fill="url(#g10)"/>
<text x="213" y="27.5" font-size="22" fill="#f0284f" text-anchor="middle">Triangle</text>
<circle cx="22" cy="68.5" r="5.7" fill="none" stroke="#ffd93d" stroke-width="3.4"/>
<circle cx="22" cy="140.5" r="5.7" fill="none" stroke="#c56cf5" stroke-width="3.4"/>
<circle cx="22" cy="212.5" r="5.7" fill="none" stroke="#f58a1f" stroke-width="3.4"/>
<path d="M56 64.5L61.5 68.5L56 72.5Z" fill="#8a8a8a"/>
<line x1="68.5" y1="60.5" x2="68.5" y2="79" stroke="#8a8a8a" stroke-width="2" />
<path d="M64 63.5L68.5 56L73 63.5Z" fill="#8a8a8a"/>
<circle cx="405.8" cy="68.5" r="5.7" fill="none" stroke="#f0284f" stroke-width="3.4"/>
<path d="M51.4 157.5A25.5 25.5 0 1 1 87.4 157.5" fill="none" stroke="#4d4d4d" stroke-width="4.1" stroke-linecap="butt"/>
<circle cx="69.4" cy="139.5" r="17" fill="url(#g12)"/>
<line x1="66.1" y1="143.4" x2="58.8" y2="152.1" stroke="#e4e4e4" stroke-width="4.9" />
<path d="M51.4 230A25.5 25.5 0 1 1 87.4 230" fill="none" stroke="#4d4d4d" stroke-width="4.1" stroke-linecap="butt"/>
<path d="M68.1 186.5A25.5 25.5 0 0 1 70.7 186.5" fill="none" stroke="#8a5a2a" stroke-width="4.1" stroke-linecap="butt"/>
<circle cx="69.4" cy="212" r="17" fill="url(#g12)"/>
<line x1="69.4" y1="206.9" x2="69.4" y2="195.5" stroke="#e4e4e4" stroke-width="4.9" />
<path d="M135.3 169.2A42 42 0 1 1 194.7 169.2" fill="none" stroke="#4d4d4d" stroke-width="4.1" stroke-linecap="butt"/>
<path d="M162.8 97.6A42 42 0 0 1 167.2 97.6" fill="none" stroke="#f0284f" stroke-width="4.1" stroke-linecap="butt"/>
<circle cx="165" cy="139.5" r="31" fill="url(#g11)"/>
<line x1="165" y1="131.4" x2="165" y2="109.1" stroke="#111" stroke-width="4.9" />
<text x="165" y="201" font-size="22" fill="#d6d6d6" text-anchor="middle">Skew</text>
<rect x="228" y="115" width="67.4" height="51" fill="none" stroke="#484848" stroke-width="1"/>
<line x1="239.2" y1="115" x2="239.2" y2="166" stroke="#3e3e3e" stroke-width="1" />
<line x1="250.5" y1="115" x2="250.5" y2="166" stroke="#3e3e3e" stroke-width="1" />
<line x1="261.7" y1="115" x2="261.7" y2="166" stroke="#3e3e3e" stroke-width="1" />
<line x1="272.9" y1="115" x2="272.9" y2="166" stroke="#3e3e3e" stroke-width="1" />
<line x1="284.2" y1="115" x2="284.2" y2="166" stroke="#3e3e3e" stroke-width="1" />
<line x1="228" y1="125.2" x2="295.4" y2="125.2" stroke="#3e3e3e" stroke-width="1" />
<line x1="228" y1="135.4" x2="295.4" y2="135.4" stroke="#3e3e3e" stroke-width="1" />
<line x1="228" y1="145.6" x2="295.4" y2="145.6" stroke="#3e3e3e" stroke-width="1" />
<line x1="228" y1="155.8" x2="295.4" y2="155.8" stroke="#3e3e3e" stroke-width="1" />
<path d="M229 165L261.7 117L294.4 165" fill="none" stroke="#f0284f" stroke-width="2.6"/>
<path d="M327.3 169.2A42 42 0 1 1 386.7 169.2" fill="none" stroke="#4d4d4d" stroke-width="4.1" stroke-linecap="butt"/>
<circle cx="357" cy="139.5" r="31" fill="url(#g11)"/>
<line x1="351.8" y1="145.7" x2="337.5" y2="162.8" stroke="#111" stroke-width="4.9" />
<text x="357" y="201" font-size="22" fill="#d6d6d6" text-anchor="middle">Fold</text>
<g transform="translate(69.4 253) scale(1.000)">
<path d="M-21.5 0L-15.5 -4.8V4.8Z" fill="#f58a1f"/>
<path d="M21.5 0L15.5 -4.8V4.8Z" fill="#f58a1f"/>
<path d="M-11 -11H-7V1H-6V11H-11Z M-4 -11H-0.8V11H-5V1H-4Z M0.8 -11H4V1H5V11H0.8Z M7 -11H11V11H6V1H7Z" fill="#f58a1f"/>
</g>
<text x="132" y="261.5" font-size="22" fill="#f58a1f">1:1</text>
<text x="252.5" y="261.5" font-size="22" fill="#f58a1f" text-anchor="end">0.00</text>
<text x="264.5" y="261.5" font-size="22" fill="#f58a1f">st</text>
<text x="312.5" y="259" font-size="22" fill="#5e5e5e" text-anchor="middle">±</text>
<text x="406" y="261.5" font-size="22" fill="#f58a1f" text-anchor="end">0.00 Hz</text>
</g>
<path d="M929 319L943 311V327Z" fill="#f0f0f0"/>
<g transform="translate(1639 248) scale(0.4507)">
<rect x="0" y="0" width="426" height="280" rx="12" fill="#1e1e1e" stroke="#3a3a3a" stroke-width="3"/>
<text x="213" y="27.5" font-size="22" fill="#f0284f" text-anchor="middle">Wavetable</text>
<circle cx="22" cy="68.5" r="5.7" fill="none" stroke="#ffd93d" stroke-width="3.4"/>
<circle cx="22" cy="140.5" r="5.7" fill="none" stroke="#7a4a9a" stroke-width="3.4"/>
<circle cx="22" cy="212.5" r="5.7" fill="none" stroke="#f58a1f" stroke-width="3.4"/>
<path d="M56 64.5L61.5 68.5L56 72.5Z" fill="#8a8a8a"/>
<line x1="68.5" y1="60.5" x2="68.5" y2="79" stroke="#8a8a8a" stroke-width="2" />
<path d="M64 63.5L68.5 56L73 63.5Z" fill="#8a8a8a"/>
<circle cx="405.8" cy="68.5" r="5.7" fill="none" stroke="#f0284f" stroke-width="3.4"/>
<path d="M51.4 157.5A25.5 25.5 0 1 1 87.4 157.5" fill="none" stroke="#4d4d4d" stroke-width="4.1" stroke-linecap="butt"/>
<circle cx="69.4" cy="139.5" r="17" fill="url(#g12)"/>
<line x1="66.1" y1="143.4" x2="58.8" y2="152.1" stroke="#e4e4e4" stroke-width="4.9" />
<path d="M51.4 230A25.5 25.5 0 1 1 87.4 230" fill="none" stroke="#4d4d4d" stroke-width="4.1" stroke-linecap="butt"/>
<circle cx="69.4" cy="212" r="17" fill="url(#g12)"/>
<line x1="69.4" y1="206.9" x2="69.4" y2="195.5" stroke="#e4e4e4" stroke-width="4.9" />
<path d="M155 122H168V126H180V144H155Z" fill="#bdbdbd"/>
<text x="186" y="142" font-size="21" fill="#e0e0e0">Browse</text>
<path d="M340 86A25.5 25.5 0 1 1 376 86" fill="none" stroke="#4d4d4d" stroke-width="4.1" stroke-linecap="butt"/>
<path d="M356.7 42.5A25.5 25.5 0 0 1 359.3 42.5" fill="none" stroke="#4fa8f2" stroke-width="4.1" stroke-linecap="butt"/>
<circle cx="358" cy="68" r="17" fill="url(#g12)"/>
<line x1="358" y1="62.9" x2="358" y2="51.5" stroke="#e4e4e4" stroke-width="4.9" />
<circle cx="358" cy="108" r="5" fill="none" stroke="#4fa8f2" stroke-width="3"/>
<path d="M335 62H322V160H335" fill="none" stroke="#444" stroke-width="3"/>
<path d="M344 189A34 34 0 1 1 392 189" fill="none" stroke="#4d4d4d" stroke-width="4.1" stroke-linecap="butt"/>
<circle cx="368" cy="165" r="24" fill="url(#g11)"/>
<line x1="364" y1="169.8" x2="352.9" y2="183" stroke="#111" stroke-width="4.3" />
<text x="370" y="218" font-size="21" fill="#d6d6d6" text-anchor="middle">Index</text>
<line x1="406" y1="152" x2="418" y2="152" stroke="#777" stroke-width="2" />
<line x1="406" y1="158" x2="418" y2="158" stroke="#777" stroke-width="2" />
<line x1="406" y1="164" x2="418" y2="164" stroke="#777" stroke-width="2" />
<line x1="406" y1="170" x2="418" y2="170" stroke="#777" stroke-width="2" />
<line x1="392" y1="28" x2="392" y2="20" stroke="#555" stroke-width="2.4" />
<line x1="398" y1="28" x2="398" y2="14" stroke="#555" stroke-width="2.4" />
<line x1="404" y1="28" x2="404" y2="8" stroke="#555" stroke-width="2.4" />
<line x1="410" y1="28" x2="410" y2="16" stroke="#555" stroke-width="2.4" />
<line x1="416" y1="28" x2="416" y2="12" stroke="#555" stroke-width="2.4" />
<g transform="translate(69.4 253) scale(1.000)">
<path d="M-21.5 0L-15.5 -4.8V4.8Z" fill="#f58a1f"/>
<path d="M21.5 0L15.5 -4.8V4.8Z" fill="#f58a1f"/>
<path d="M-11 -11H-7V1H-6V11H-11Z M-4 -11H-0.8V11H-5V1H-4Z M0.8 -11H4V1H5V11H0.8Z M7 -11H11V11H6V1H7Z" fill="#f58a1f"/>
</g>
<text x="132" y="261.5" font-size="22" fill="#f58a1f">1:1</text>
<text x="252.5" y="261.5" font-size="22" fill="#f58a1f" text-anchor="end">0.00</text>
<text x="264.5" y="261.5" font-size="22" fill="#f58a1f">st</text>
<text x="312.5" y="259" font-size="22" fill="#5e5e5e" text-anchor="middle">±</text>
<text x="406" y="261.5" font-size="22" fill="#f58a1f" text-anchor="end">0.00 Hz</text>
</g>
<rect x="1895" y="266.5" width="278" height="89" rx="6" fill="url(#g10)"/>
<text x="2034" y="286" font-size="15" fill="#f0284f" text-anchor="middle">Sub</text>
<circle cx="1908.5" cy="290.5" r="3.4" fill="none" stroke="#ffd93d" stroke-width="1.8"/>
<circle cx="1908.5" cy="338" r="3.4" fill="none" stroke="#f58a1f" stroke-width="1.8"/>
<circle cx="2160" cy="311" r="3.4" fill="none" stroke="#f0284f" stroke-width="1.8"/>
<g transform="translate(1937 290.5) scale(0.6)">
<path d="M-9 -4L-3.5 0L-9 4Z" fill="#8a8a8a"/>
<line x1="3.5" y1="-8" x2="3.5" y2="10.5" stroke="#8a8a8a" stroke-width="2" />
<path d="M-1 -5L3.5 -12.5L8 -5Z" fill="#8a8a8a"/>
</g>
<path d="M1928.3 344A16.5 16.5 0 1 1 1951.7 344" fill="none" stroke="#4d4d4d" stroke-width="2.4" stroke-linecap="butt"/>
<path d="M1939.1 315.8A16.5 16.5 0 0 1 1940.9 315.8" fill="none" stroke="#8a5a2a" stroke-width="2.4" stroke-linecap="butt"/>
<circle cx="1940" cy="332.3" r="11.4" fill="url(#g12)"/>
<line x1="1940" y1="328.9" x2="1940" y2="321.2" stroke="#e4e4e4" stroke-width="2.5" />
<g transform="translate(1982 338) scale(0.62)">
<g transform="translate(0 0) scale(1.000)">
<path d="M-21.5 0L-15.5 -4.8V4.8Z" fill="#f58a1f"/>
<path d="M21.5 0L15.5 -4.8V4.8Z" fill="#f58a1f"/>
<path d="M-11 -11H-7V1H-6V11H-11Z M-4 -11H-0.8V11H-5V1H-4Z M0.8 -11H4V1H5V11H0.8Z M7 -11H11V11H6V1H7Z" fill="#f58a1f"/>
</g>
</g>
<path d="M1969 304C1973 291 1978 291 1982 304S1991 317 1995 304" fill="none" stroke="#f0284f" stroke-width="2.4"/>
<path d="M2005 303C2008 294 2012 294 2016 300C2018 304 2020 304 2023 304H2031" fill="none" stroke="#8a2a3c" stroke-width="1.7"/>
<path d="M2042 312L2055 295L2068 312" fill="none" stroke="#8a2a3c" stroke-width="1.7"/>
<path d="M2079 295H2091V312H2104" fill="none" stroke="#8a2a3c" stroke-width="1.7"/>
<path d="M2115 295H2122V312H2141" fill="none" stroke="#8a2a3c" stroke-width="1.7"/>
<text x="2022.5" y="344" font-size="15" fill="#f58a1f" text-anchor="middle">0</text>
<rect x="2010" y="347.5" width="25" height="1.8" fill="#f58a1f"/>
<text x="2047" y="344" font-size="15" fill="#dcdcdc" text-anchor="middle">-1</text>
<text x="2072" y="344" font-size="15" fill="#dcdcdc" text-anchor="middle">-2</text>
<text x="2099" y="343" font-size="14" fill="#5e5e5e" text-anchor="middle">±</text>
<text x="2161" y="344" font-size="15" fill="#f58a1f" text-anchor="end">0.00 Hz</text>
<g transform="translate(2237 248) scale(0.4507)">
<rect x="0" y="0" width="426" height="280" rx="12" fill="url(#g10)"/>
<text x="213" y="27.5" font-size="22" fill="#f0284f" text-anchor="middle">Phase-1</text>
<circle cx="22" cy="68.5" r="5.7" fill="none" stroke="#ffd93d" stroke-width="3.4"/>
<circle cx="22" cy="140.5" r="5.7" fill="none" stroke="#c56cf5" stroke-width="3.4"/>
<circle cx="22" cy="212.5" r="5.7" fill="none" stroke="#f58a1f" stroke-width="3.4"/>
<path d="M56 64.5L61.5 68.5L56 72.5Z" fill="#8a8a8a"/>
<line x1="68.5" y1="60.5" x2="68.5" y2="79" stroke="#8a8a8a" stroke-width="2" />
<path d="M64 63.5L68.5 56L73 63.5Z" fill="#8a8a8a"/>
<circle cx="405.8" cy="68.5" r="5.7" fill="none" stroke="#f0284f" stroke-width="3.4"/>
<path d="M51.4 157.5A25.5 25.5 0 1 1 87.4 157.5" fill="none" stroke="#4d4d4d" stroke-width="4.1" stroke-linecap="butt"/>
<circle cx="69.4" cy="139.5" r="17" fill="url(#g12)"/>
<line x1="66.1" y1="143.4" x2="58.8" y2="152.1" stroke="#e4e4e4" stroke-width="4.9" />
<path d="M51.4 230A25.5 25.5 0 1 1 87.4 230" fill="none" stroke="#4d4d4d" stroke-width="4.1" stroke-linecap="butt"/>
<path d="M68.1 186.5A25.5 25.5 0 0 1 70.7 186.5" fill="none" stroke="#8a5a2a" stroke-width="4.1" stroke-linecap="butt"/>
<circle cx="69.4" cy="212" r="17" fill="url(#g12)"/>
<line x1="69.4" y1="206.9" x2="69.4" y2="195.5" stroke="#e4e4e4" stroke-width="4.9" />
<path d="M135.3 169.2A42 42 0 1 1 194.7 169.2" fill="none" stroke="#4d4d4d" stroke-width="4.1" stroke-linecap="butt"/>
<path d="M162.8 97.6A42 42 0 0 1 167.2 97.6" fill="none" stroke="none" stroke-width="4.1" stroke-linecap="butt"/>
<circle cx="165" cy="139.5" r="31" fill="url(#g11)"/>
<line x1="159.8" y1="145.7" x2="145.5" y2="162.8" stroke="#111" stroke-width="4.9" />
<text x="165" y="201" font-size="22" fill="#d6d6d6" text-anchor="middle">Shape</text>
<rect x="228" y="115" width="67.4" height="51" fill="none" stroke="#484848" stroke-width="1"/>
<line x1="239.2" y1="115" x2="239.2" y2="166" stroke="#3e3e3e" stroke-width="1" />
<line x1="250.5" y1="115" x2="250.5" y2="166" stroke="#3e3e3e" stroke-width="1" />
<line x1="261.7" y1="115" x2="261.7" y2="166" stroke="#3e3e3e" stroke-width="1" />
<line x1="272.9" y1="115" x2="272.9" y2="166" stroke="#3e3e3e" stroke-width="1" />
<line x1="284.2" y1="115" x2="284.2" y2="166" stroke="#3e3e3e" stroke-width="1" />
<line x1="228" y1="125.2" x2="295.4" y2="125.2" stroke="#3e3e3e" stroke-width="1" />
<line x1="228" y1="135.4" x2="295.4" y2="135.4" stroke="#3e3e3e" stroke-width="1" />
<line x1="228" y1="145.6" x2="295.4" y2="145.6" stroke="#3e3e3e" stroke-width="1" />
<line x1="228" y1="155.8" x2="295.4" y2="155.8" stroke="#3e3e3e" stroke-width="1" />
<path d="M228 116L229.7 116.3L231.4 117.2L233.1 118.6L234.7 120.6L236.4 123L238.1 125.9L239.8 129.1L241.5 132.6L243.2 136.2L244.8 140L246.5 143.8L248.2 147.4L249.9 150.9L251.6 154.1L253.3 157L255 159.4L256.6 161.4L258.3 162.8L260 163.7L261.7 164L263.4 163.7L265.1 162.8L266.8 161.4L268.4 159.4L270.1 157L271.8 154.1L273.5 150.9L275.2 147.4L276.9 143.8L278.5 140L280.2 136.2L281.9 132.6L283.6 129.1L285.3 125.9L287 123L288.7 120.6L290.3 118.6L292 117.2L293.7 116.3L295.4 116" fill="none" stroke="#f0284f" stroke-width="2.6" stroke-linejoin="round"/>
<path d="M327.3 169.2A42 42 0 1 1 386.7 169.2" fill="none" stroke="#4d4d4d" stroke-width="4.1" stroke-linecap="butt"/>
<circle cx="357" cy="139.5" r="31" fill="url(#g11)"/>
<line x1="351.8" y1="145.7" x2="337.5" y2="162.8" stroke="#111" stroke-width="4.9" />
<text x="357" y="201" font-size="22" fill="#d6d6d6" text-anchor="middle"></text>
<g transform="translate(69.4 253) scale(1.000)">
<path d="M-21.5 0L-15.5 -4.8V4.8Z" fill="#f58a1f"/>
<path d="M21.5 0L15.5 -4.8V4.8Z" fill="#f58a1f"/>
<path d="M-11 -11H-7V1H-6V11H-11Z M-4 -11H-0.8V11H-5V1H-4Z M0.8 -11H4V1H5V11H0.8Z M7 -11H11V11H6V1H7Z" fill="#f58a1f"/>
</g>
<text x="132" y="261.5" font-size="22" fill="#f58a1f">1:1</text>
<text x="252.5" y="261.5" font-size="22" fill="#f58a1f" text-anchor="end">0.00</text>
<text x="264.5" y="261.5" font-size="22" fill="#f58a1f">st</text>
<text x="312.5" y="259" font-size="22" fill="#5e5e5e" text-anchor="middle">±</text>
<text x="406" y="261.5" font-size="22" fill="#f58a1f" text-anchor="end">0.00 Hz</text>
<path d="M150 60L163 80L176 60" fill="none" stroke="#f0284f" stroke-width="3.4"/>
<path d="M197 60L210 80L223 60" fill="none" stroke="#8a2a3c" stroke-width="3.4"/>
<path d="M244 72Q257 54 270 72" fill="none" stroke="#8a2a3c" stroke-width="3.4"/>
<path d="M292 60L298.5 80L305 64L311.5 80L318 60" fill="none" stroke="#8a2a3c" stroke-width="3"/>
<path d="M340 70C345 54 349 54 353 70S361 86 366 70" fill="none" stroke="#8a2a3c" stroke-width="3.4"/>
<text x="261" y="205" font-size="20" fill="#6a2030" text-anchor="middle">F = 1</text>
<rect x="349" y="190" width="20" height="15" rx="2" fill="none" stroke="#aaa" stroke-width="2.4"/>
<path d="M354 198H364M358 193L353.5 198L358 203" fill="none" stroke="#aaa" stroke-width="2.2"/>
</g>
<g transform="translate(2445 248) scale(0.4507)">
<rect x="0" y="0" width="426" height="280" rx="12" fill="url(#g10)"/>
<text x="213" y="27.5" font-size="22" fill="#f0284f" text-anchor="middle">Swarm</text>
<circle cx="22" cy="68.5" r="5.7" fill="none" stroke="#ffd93d" stroke-width="3.4"/>
<circle cx="22" cy="140.5" r="5.7" fill="none" stroke="#c56cf5" stroke-width="3.4"/>
<circle cx="22" cy="212.5" r="5.7" fill="none" stroke="#f58a1f" stroke-width="3.4"/>
<path d="M56 64.5L61.5 68.5L56 72.5Z" fill="#8a8a8a"/>
<line x1="68.5" y1="60.5" x2="68.5" y2="79" stroke="#8a8a8a" stroke-width="2" />
<path d="M64 63.5L68.5 56L73 63.5Z" fill="#8a8a8a"/>
<circle cx="405.8" cy="68.5" r="5.7" fill="none" stroke="#f0284f" stroke-width="3.4"/>
<path d="M51.4 157.5A25.5 25.5 0 1 1 87.4 157.5" fill="none" stroke="#4d4d4d" stroke-width="4.1" stroke-linecap="butt"/>
<circle cx="69.4" cy="139.5" r="17" fill="url(#g12)"/>
<line x1="66.1" y1="143.4" x2="58.8" y2="152.1" stroke="#e4e4e4" stroke-width="4.9" />
<path d="M51.4 230A25.5 25.5 0 1 1 87.4 230" fill="none" stroke="#4d4d4d" stroke-width="4.1" stroke-linecap="butt"/>
<path d="M68.1 186.5A25.5 25.5 0 0 1 70.7 186.5" fill="none" stroke="#8a5a2a" stroke-width="4.1" stroke-linecap="butt"/>
<circle cx="69.4" cy="212" r="17" fill="url(#g12)"/>
<line x1="69.4" y1="206.9" x2="69.4" y2="195.5" stroke="#e4e4e4" stroke-width="4.9" />
<path d="M135.3 169.2A42 42 0 1 1 194.7 169.2" fill="none" stroke="#4d4d4d" stroke-width="4.1" stroke-linecap="butt"/>
<path d="M135.3 169.2A42 42 0 0 1 165 97.5" fill="none" stroke="#f0284f" stroke-width="4.1" stroke-linecap="butt"/>
<path d="M162.8 97.6A42 42 0 0 1 167.2 97.6" fill="none" stroke="none" stroke-width="4.1" stroke-linecap="butt"/>
<circle cx="165" cy="139.5" r="31" fill="url(#g11)"/>
<line x1="165" y1="131.4" x2="165" y2="109.1" stroke="#111" stroke-width="4.9" />
<text x="165" y="201" font-size="22" fill="#d6d6d6" text-anchor="middle">Spread</text>
<rect x="228" y="115" width="67.4" height="51" fill="none" stroke="#484848" stroke-width="1"/>
<line x1="239.2" y1="115" x2="239.2" y2="166" stroke="#3e3e3e" stroke-width="1" />
<line x1="250.5" y1="115" x2="250.5" y2="166" stroke="#3e3e3e" stroke-width="1" />
<line x1="261.7" y1="115" x2="261.7" y2="166" stroke="#3e3e3e" stroke-width="1" />
<line x1="272.9" y1="115" x2="272.9" y2="166" stroke="#3e3e3e" stroke-width="1" />
<line x1="284.2" y1="115" x2="284.2" y2="166" stroke="#3e3e3e" stroke-width="1" />
<line x1="228" y1="125.2" x2="295.4" y2="125.2" stroke="#3e3e3e" stroke-width="1" />
<line x1="228" y1="135.4" x2="295.4" y2="135.4" stroke="#3e3e3e" stroke-width="1" />
<line x1="228" y1="145.6" x2="295.4" y2="145.6" stroke="#3e3e3e" stroke-width="1" />
<line x1="228" y1="155.8" x2="295.4" y2="155.8" stroke="#3e3e3e" stroke-width="1" />
<path d="M228 165L246.9 164L247.6 163.7L248.4 162.8L249.1 161.4L249.8 159.4L250.6 157L251.3 154.1L252.1 150.9L252.8 147.4L253.5 143.8L254.3 140L255 136.2L255.8 132.6L256.5 129.1L257.3 125.9L258 123L258.7 120.6L259.5 118.6L260.2 117.2L261 116.3L261.7 116L262.4 116.3L263.2 117.2L263.9 118.6L264.7 120.6L265.4 123L266.1 125.9L266.9 129.1L267.6 132.6L268.4 136.2L269.1 140L269.9 143.8L270.6 147.4L271.3 150.9L272.1 154.1L272.8 157L273.6 159.4L274.3 161.4L275 162.8L275.8 163.7L276.5 164L295.4 165" fill="none" stroke="#f0284f" stroke-width="2.6" stroke-linejoin="round"/>
<path d="M327.3 169.2A42 42 0 1 1 386.7 169.2" fill="none" stroke="#4d4d4d" stroke-width="4.1" stroke-linecap="butt"/>
<path d="M327.3 169.2A42 42 0 0 1 357 97.5" fill="none" stroke="#f0284f" stroke-width="4.1" stroke-linecap="butt"/>
<circle cx="357" cy="139.5" r="31" fill="url(#g11)"/>
<line x1="357" y1="131.4" x2="357" y2="109.1" stroke="#111" stroke-width="4.9" />
<text x="357" y="201" font-size="22" fill="#d6d6d6" text-anchor="middle">Skirt</text>
<g transform="translate(69.4 253) scale(1.000)">
<path d="M-21.5 0L-15.5 -4.8V4.8Z" fill="#f58a1f"/>
<path d="M21.5 0L15.5 -4.8V4.8Z" fill="#f58a1f"/>
<path d="M-11 -11H-7V1H-6V11H-11Z M-4 -11H-0.8V11H-5V1H-4Z M0.8 -11H4V1H5V11H0.8Z M7 -11H11V11H6V1H7Z" fill="#f58a1f"/>
</g>
<text x="132" y="261.5" font-size="22" fill="#f58a1f">1:1</text>
<text x="252.5" y="261.5" font-size="22" fill="#f58a1f" text-anchor="end">0.00</text>
<text x="264.5" y="261.5" font-size="22" fill="#f58a1f">st</text>
<text x="312.5" y="259" font-size="22" fill="#5e5e5e" text-anchor="middle">±</text>
<text x="406" y="261.5" font-size="22" fill="#f58a1f" text-anchor="end">0.00 Hz</text>
<path d="M160 60L190 78H160" fill="none" stroke="#f0284f" stroke-width="3.4"/>
<path d="M232 70C238 54 244 54 250 70S262 86 268 70" fill="none" stroke="#8a2a3c" stroke-width="3.2"/>
</g>
<rect x="2701" y="247.5" width="344" height="127" rx="4" fill="#1e1e1e" stroke="#2e2e2e" stroke-width="1.5"/>
<path d="M2701 251.5A4 4 0 0 1 2705 247.5H3041A4 4 0 0 1 3045 251.5V288H2701Z" fill="#303030"/>
<circle cx="2707.5" cy="256" r="1.8" fill="none" stroke="#ffd93d" stroke-width="1.2"/>
<circle cx="2707.5" cy="268" r="1.8" fill="none" stroke="#f58a1f" stroke-width="1.2"/>
<circle cx="2707.5" cy="280" r="1.8" fill="none" stroke="#3a6a9a" stroke-width="1.2"/>
<circle cx="3027" cy="256" r="1.8" fill="none" stroke="#3a6a9a" stroke-width="1.2"/>
<circle cx="3027" cy="268" r="1.8" fill="none" stroke="#3a6a9a" stroke-width="1.2"/>
<circle cx="3027" cy="280" r="1.8" fill="none" stroke="#3a6a9a" stroke-width="1.2"/>
<circle cx="3039" cy="268" r="1.8" fill="none" stroke="#f0284f" stroke-width="1.2"/>
<g transform="translate(2720 256) scale(0.36)">
<path d="M-9 -4L-3.5 0L-9 4Z" fill="#ffd93d"/>
<line x1="3.5" y1="-8" x2="3.5" y2="10.5" stroke="#ffd93d" stroke-width="2" />
<path d="M-1 -5L3.5 -12.5L8 -5Z" fill="#ffd93d"/>
</g>
<g transform="translate(2721 268) scale(0.36)">
<g transform="translate(0 0) scale(1.000)">
<path d="M-21.5 0L-15.5 -4.8V4.8Z" fill="#f58a1f"/>
<path d="M21.5 0L15.5 -4.8V4.8Z" fill="#f58a1f"/>
<path d="M-11 -11H-7V1H-6V11H-11Z M-4 -11H-0.8V11H-5V1H-4Z M0.8 -11H4V1H5V11H0.8Z M7 -11H11V11H6V1H7Z" fill="#f58a1f"/>
</g>
</g>
<path d="M2740.6 274.9A10.5 10.5 0 1 1 2755.4 274.9" fill="none" stroke="#4d4d4d" stroke-width="1.6" stroke-linecap="butt"/>
<circle cx="2748" cy="267.5" r="7.5" fill="url(#g12)"/>
<line x1="2746.6" y1="269.2" x2="2743.3" y2="273.1" stroke="#e4e4e4" stroke-width="1.6" />
<text x="2748" y="284" font-size="6.5" fill="#777" text-anchor="middle">Select</text>
<path d="M2772.1 274.9A10.5 10.5 0 1 1 2786.9 274.9" fill="none" stroke="#4d4d4d" stroke-width="1.6" stroke-linecap="butt"/>
<path d="M2779 257A10.5 10.5 0 0 1 2780 257" fill="none" stroke="#f0284f" stroke-width="1.6" stroke-linecap="butt"/>
<circle cx="2779.5" cy="267.5" r="7.5" fill="url(#g11)"/>
<line x1="2779.5" y1="265.6" x2="2779.5" y2="260.1" stroke="#111" stroke-width="2.9" />
<text x="2779.5" y="284" font-size="6.5" fill="#ccc" text-anchor="middle">Pitch</text>
<text x="2814.5" y="258.5" font-size="6.8" fill="#f0284f" text-anchor="middle">Repitch</text>
<rect x="2799.5" y="260.5" width="30" height="1.2" fill="#f0284f"/>
<text x="2814.5" y="271" font-size="6.8" fill="#ccc" text-anchor="middle">Cycles</text>
<text x="2814.5" y="283" font-size="6.8" fill="#ccc" text-anchor="middle">Textures</text>
<path d="M2841.6 274.9A10.5 10.5 0 1 1 2856.4 274.9" fill="none" stroke="#4d4d4d" stroke-width="1.6" stroke-linecap="butt"/>
<path d="M2849 257A10.5 10.5 0 0 1 2855.7 259.5" fill="none" stroke="#f0284f" stroke-width="1.6" stroke-linecap="butt"/>
<circle cx="2849" cy="267.5" r="7.5" fill="url(#g11)"/>
<line x1="2850.3" y1="266" x2="2853.7" y2="261.9" stroke="#111" stroke-width="2.9" />
<text x="2849" y="284" font-size="6.5" fill="#ccc" text-anchor="middle">Speed</text>
<text x="2939" y="264" font-size="10" fill="#777" text-anchor="middle">❄</text>
<rect x="2935" y="272" width="9" height="5" fill="#2ec88c"/>
<rect x="2949" y="254" width="71" height="27" rx="2" fill="#141414"/>
<line x1="2951.5" y1="256" x2="2951.5" y2="279" stroke="#ffd93d" stroke-width="1.2" />
<text x="2967" y="270.5" font-size="6.5" fill="#ffd93d" text-anchor="middle">PLAY</text>
<line x1="2984.5" y1="256" x2="2984.5" y2="266" stroke="#2ec88c" stroke-width="1.2" />
<text x="3000" y="264.5" font-size="6.5" fill="#2ec88c" text-anchor="middle">LOOP</text>
<rect x="2985" y="269" width="32" height="9.5" fill="#1e7a5c"/>
<text x="3001" y="276.5" font-size="6.5" fill="#2ec88c" text-anchor="middle">LEN</text>
<path d="M2824 316H2827V317H2830V322H2824Z" fill="#ccc"/>
<text x="2833" y="322" font-size="7" fill="#e0e0e0">Browse samples / multisamples</text>
<line x1="2834.5" y1="342" x2="2834.5" y2="347.5" stroke="#ccc" stroke-width="0.9" />
<line x1="2836.1" y1="342" x2="2836.1" y2="347.5" stroke="#ccc" stroke-width="0.9" />
<line x1="2837.7" y1="342" x2="2837.7" y2="347.5" stroke="#ccc" stroke-width="0.9" />
<line x1="2839.3" y1="342" x2="2839.3" y2="347.5" stroke="#ccc" stroke-width="0.9" />
<text x="2843" y="347.5" font-size="7" fill="#e0e0e0">Create new multisample</text>
</g>
<rect x="339.5" y="222.5" width="574.5" height="198" fill="#0d0d0d"/>
<line x1="914.5" y1="222.5" x2="914.5" y2="420" stroke="#2a2a2a" stroke-width="2" />
<text x="412" y="259" font-size="22" fill="#e4e4e4" text-anchor="middle" textLength="28.3" lengthAdjust="spacingAndGlyphs">I/O</text>
<text x="554" y="259" font-size="22" fill="#e4e4e4" text-anchor="middle" textLength="69.6" lengthAdjust="spacingAndGlyphs">Display</text>
<text x="696" y="259" font-size="22" fill="#e4e4e4" text-anchor="middle" textLength="60.2" lengthAdjust="spacingAndGlyphs">Phase</text>
<text x="838.5" y="259" font-size="22" fill="#e4e4e4" text-anchor="middle" textLength="44.8" lengthAdjust="spacingAndGlyphs">Data</text>
<text x="412" y="307" font-size="22" fill="#3fb4f4" text-anchor="middle" textLength="88.5" lengthAdjust="spacingAndGlyphs">Oscillator</text>
<text x="554" y="307" font-size="22" fill="#e4e4e4" text-anchor="middle" textLength="80.2" lengthAdjust="spacingAndGlyphs">Random</text>
<text x="696" y="307" font-size="22" fill="#e4e4e4" text-anchor="middle" textLength="41.3" lengthAdjust="spacingAndGlyphs">LFO</text>
<text x="838.5" y="307" font-size="22" fill="#e4e4e4" text-anchor="middle" textLength="88.5" lengthAdjust="spacingAndGlyphs">Envelope</text>
<text x="412" y="355" font-size="22" fill="#e4e4e4" text-anchor="middle" textLength="47.2" lengthAdjust="spacingAndGlyphs">Filter</text>
<text x="554" y="355" font-size="22" fill="#e4e4e4" text-anchor="middle" textLength="68.5" lengthAdjust="spacingAndGlyphs">Shaper</text>
<text x="696" y="355" font-size="22" fill="#e4e4e4" text-anchor="middle" textLength="54.3" lengthAdjust="spacingAndGlyphs">Delay</text>
<text x="838.5" y="355" font-size="22" fill="#e4e4e4" text-anchor="middle" textLength="33" lengthAdjust="spacingAndGlyphs">Mix</text>
<text x="412" y="403" font-size="22" fill="#e4e4e4" text-anchor="middle" textLength="50.7" lengthAdjust="spacingAndGlyphs">Level</text>
<text x="554" y="403" font-size="22" fill="#e4e4e4" text-anchor="middle" textLength="47.2" lengthAdjust="spacingAndGlyphs">Pitch</text>
<text x="696" y="403" font-size="22" fill="#e4e4e4" text-anchor="middle" textLength="47.2" lengthAdjust="spacingAndGlyphs">Math</text>
<text x="838.5" y="403" font-size="22" fill="#e4e4e4" text-anchor="middle" textLength="50.7" lengthAdjust="spacingAndGlyphs">Logic</text>
<rect x="345" y="314.8" width="136" height="4" fill="#3fb4f4"/>
<rect x="335" y="1355.5" width="2730" height="493" rx="6" fill="#5a5a5a"/>
<rect x="339.5" y="1359.5" width="2721" height="478" rx="2" fill="#0d0d0d"/>
<rect x="339.5" y="1837.5" width="2721" height="8.5" fill="#0d0d0d"/>
<rect x="401" y="1837.5" width="1993" height="8.5" fill="#5c5c5c"/>
<rect x="339.5" y="1359.5" width="7.5" height="484" fill="#ff6000"/>
<text transform="translate(382 1602) rotate(-90)" font-size="22" fill="#ffffff" text-anchor="middle" textLength="289" lengthAdjust="spacingAndGlyphs">COMMUNICATION THEORY</text>
<rect x="413" y="1399" width="18.5" height="18.5" fill="#f0d43a"/>
<line x1="413" y1="1602.3" x2="431" y2="1602.3" stroke="#9a9a9a" stroke-width="3" />
<line x1="422" y1="1593.3" x2="422" y2="1611.3" stroke="#9a9a9a" stroke-width="3" />
<rect x="443" y="1383" width="579" height="437" rx="10" fill="#555555"/>
<path d="M443 1393A10 10 0 0 1 453 1383H497V1820H453A10 10 0 0 1 443 1810Z" fill="#484848"/>
<path d="M474.7 1403.6A8.6 8.6 0 1 1 465.3 1403.6" fill="none" stroke="#f58a1f" stroke-width="3.2" stroke-linecap="round"/>
<line x1="470" y1="1399.5" x2="470" y2="1410.5" stroke="#f58a1f" stroke-width="3.2" stroke-linecap="round"/>
<path d="M459 1443H469V1446H481V1460H459Z" fill="#9c9c9c"/>
<line x1="459" y1="1447.3" x2="470" y2="1447.3" stroke="#484848" stroke-width="1.3" />
<text transform="translate(478 1602) rotate(-90)" font-size="22" fill="#ffffff" text-anchor="middle" textLength="106" lengthAdjust="spacingAndGlyphs">POLY GRID</text>
<rect x="458.5" y="1720" width="23" height="20" rx="4" fill="none" stroke="#f58a1f" stroke-width="3.4"/>
<rect x="458.5" y="1719" width="23" height="5" rx="2" fill="#f58a1f"/>
<circle cx="462" cy="1760" r="2.8" fill="#8c8c8c"/>
<circle cx="462" cy="1768" r="2.8" fill="#8c8c8c"/>
<circle cx="470" cy="1760" r="2.8" fill="#8c8c8c"/>
<circle cx="470" cy="1768" r="2.8" fill="#8c8c8c"/>
<circle cx="478" cy="1760" r="2.8" fill="#8c8c8c"/>
<circle cx="478" cy="1768" r="2.8" fill="#8c8c8c"/>
<circle cx="463" cy="1797.8" r="4.6" fill="#8c8c8c"/>
<line x1="467" y1="1797.8" x2="476" y2="1797.8" stroke="#8c8c8c" stroke-width="2.4" />
<path d="M474 1792.3L482 1797.8L474 1803.3Z" fill="#8c8c8c"/>
<rect x="502.7" y="1388.7" width="512.8" height="282.5" rx="6" fill="#0f0f0f"/>
<clipPath id="mmclip"><rect x="502.7" y="1388.7" width="512.8" height="282.5" rx="6"/></clipPath><g clip-path="url(#mmclip)">
<line x1="468.6" y1="1388" x2="468.6" y2="1672" stroke="#202020" stroke-width="1.6" />
<line x1="489.4" y1="1388" x2="489.4" y2="1672" stroke="#202020" stroke-width="1.6" />
<line x1="510.2" y1="1388" x2="510.2" y2="1672" stroke="#202020" stroke-width="1.6" />
<line x1="531" y1="1388" x2="531" y2="1672" stroke="#202020" stroke-width="1.6" />
<line x1="551.8" y1="1388" x2="551.8" y2="1672" stroke="#202020" stroke-width="1.6" />
<line x1="572.6" y1="1388" x2="572.6" y2="1672" stroke="#202020" stroke-width="1.6" />
<line x1="593.4" y1="1388" x2="593.4" y2="1672" stroke="#202020" stroke-width="1.6" />
<line x1="614.2" y1="1388" x2="614.2" y2="1672" stroke="#202020" stroke-width="1.6" />
<line x1="635" y1="1388" x2="635" y2="1672" stroke="#202020" stroke-width="1.6" />
<line x1="655.7" y1="1388" x2="655.7" y2="1672" stroke="#202020" stroke-width="1.6" />
<line x1="676.5" y1="1388" x2="676.5" y2="1672" stroke="#202020" stroke-width="1.6" />
<line x1="697.3" y1="1388" x2="697.3" y2="1672" stroke="#202020" stroke-width="1.6" />
<line x1="718.1" y1="1388" x2="718.1" y2="1672" stroke="#202020" stroke-width="1.6" />
<line x1="738.9" y1="1388" x2="738.9" y2="1672" stroke="#202020" stroke-width="1.6" />
<line x1="759.7" y1="1388" x2="759.7" y2="1672" stroke="#202020" stroke-width="1.6" />
<line x1="780.5" y1="1388" x2="780.5" y2="1672" stroke="#202020" stroke-width="1.6" />
<line x1="801.3" y1="1388" x2="801.3" y2="1672" stroke="#202020" stroke-width="1.6" />
<line x1="822.1" y1="1388" x2="822.1" y2="1672" stroke="#202020" stroke-width="1.6" />
<line x1="842.9" y1="1388" x2="842.9" y2="1672" stroke="#202020" stroke-width="1.6" />
<line x1="863.7" y1="1388" x2="863.7" y2="1672" stroke="#202020" stroke-width="1.6" />
<line x1="884.5" y1="1388" x2="884.5" y2="1672" stroke="#202020" stroke-width="1.6" />
<line x1="905.3" y1="1388" x2="905.3" y2="1672" stroke="#202020" stroke-width="1.6" />
<line x1="926.1" y1="1388" x2="926.1" y2="1672" stroke="#202020" stroke-width="1.6" />
<line x1="946.9" y1="1388" x2="946.9" y2="1672" stroke="#202020" stroke-width="1.6" />
<line x1="967.6" y1="1388" x2="967.6" y2="1672" stroke="#202020" stroke-width="1.6" />
<line x1="988.4" y1="1388" x2="988.4" y2="1672" stroke="#202020" stroke-width="1.6" />
<line x1="1009.2" y1="1388" x2="1009.2" y2="1672" stroke="#202020" stroke-width="1.6" />
<line x1="1030" y1="1388" x2="1030" y2="1672" stroke="#202020" stroke-width="1.6" />
<line x1="502" y1="1343.6" x2="1016" y2="1343.6" stroke="#202020" stroke-width="1.6" />
<line x1="502" y1="1364.4" x2="1016" y2="1364.4" stroke="#202020" stroke-width="1.6" />
<line x1="502" y1="1385.2" x2="1016" y2="1385.2" stroke="#202020" stroke-width="1.6" />
<line x1="502" y1="1406" x2="1016" y2="1406" stroke="#202020" stroke-width="1.6" />
<line x1="502" y1="1426.8" x2="1016" y2="1426.8" stroke="#202020" stroke-width="1.6" />
<line x1="502" y1="1447.6" x2="1016" y2="1447.6" stroke="#202020" stroke-width="1.6" />
<line x1="502" y1="1468.4" x2="1016" y2="1468.4" stroke="#202020" stroke-width="1.6" />
<line x1="502" y1="1489.2" x2="1016" y2="1489.2" stroke="#202020" stroke-width="1.6" />
<line x1="502" y1="1510" x2="1016" y2="1510" stroke="#202020" stroke-width="1.6" />
<line x1="502" y1="1530.8" x2="1016" y2="1530.8" stroke="#202020" stroke-width="1.6" />
<line x1="502" y1="1551.5" x2="1016" y2="1551.5" stroke="#202020" stroke-width="1.6" />
<line x1="502" y1="1572.3" x2="1016" y2="1572.3" stroke="#202020" stroke-width="1.6" />
<line x1="502" y1="1593.1" x2="1016" y2="1593.1" stroke="#202020" stroke-width="1.6" />
<line x1="502" y1="1613.9" x2="1016" y2="1613.9" stroke="#202020" stroke-width="1.6" />
<line x1="502" y1="1634.7" x2="1016" y2="1634.7" stroke="#202020" stroke-width="1.6" />
<line x1="502" y1="1655.5" x2="1016" y2="1655.5" stroke="#202020" stroke-width="1.6" />
<line x1="502" y1="1676.3" x2="1016" y2="1676.3" stroke="#202020" stroke-width="1.6" />
<line x1="502" y1="1697.1" x2="1016" y2="1697.1" stroke="#202020" stroke-width="1.6" />
<rect x="562.8" y="1485" width="392.7" height="131" rx="3" fill="#1c3f5c" fill-opacity="0.62"/>
<rect x="656.2" y="1468.8" width="40.7" height="40.7" rx="2" fill="url(#g28)"/>
<rect x="780.9" y="1489.6" width="19.9" height="19.9" rx="2" fill="url(#g29)"/>
<rect x="801.7" y="1489.6" width="19.9" height="19.9" rx="2" fill="url(#g30)"/>
<rect x="822.5" y="1489.6" width="19.9" height="19.9" rx="2" fill="url(#g31)"/>
<rect x="864.1" y="1489.6" width="61.5" height="40.7" rx="2" fill="url(#g32)"/>
<rect x="573" y="1510.4" width="61.5" height="40.7" rx="2" fill="url(#g33)"/>
<rect x="656.2" y="1531.2" width="19.9" height="19.9" rx="2" fill="url(#g34)"/>
<rect x="697.8" y="1510.4" width="61.5" height="40.7" rx="2" fill="url(#g35)"/>
<rect x="780.9" y="1531.2" width="19.9" height="19.9" rx="2" fill="url(#g36)"/>
<rect x="801.7" y="1531.2" width="40.7" height="40.7" rx="2" fill="url(#g37)"/>
<rect x="843.3" y="1531.2" width="19.9" height="19.9" rx="2" fill="url(#g38)"/>
<rect x="864.1" y="1531.2" width="61.5" height="40.7" rx="2" fill="url(#g39)"/>
<rect x="926.5" y="1531.2" width="19.9" height="19.9" rx="2" fill="url(#g40)"/>
<rect x="947.3" y="1531.2" width="19.9" height="19.9" rx="2" fill="url(#g41)"/>
<rect x="968.1" y="1531.2" width="19.9" height="19.9" rx="2" fill="url(#g42)"/>
<rect x="552.2" y="1552" width="61.5" height="40.7" rx="2" fill="url(#g43)"/>
<rect x="614.6" y="1552" width="19.9" height="19.9" rx="2" fill="url(#g44)"/>
<rect x="635.4" y="1572.8" width="40.7" height="40.7" rx="2" fill="url(#g45)"/>
<rect x="677" y="1593.6" width="19.9" height="19.9" rx="2" fill="url(#g46)"/>
<rect x="697.8" y="1572.8" width="61.5" height="40.7" rx="2" fill="url(#g47)"/>
<rect x="822.5" y="1572.8" width="19.9" height="19.9" rx="2" fill="url(#g48)"/>
<rect x="843.3" y="1572.8" width="61.5" height="40.7" rx="2" fill="url(#g49)"/>
</g>
<rect x="562.8" y="1485" width="392.7" height="131" rx="3" fill="none" stroke="#35b2f5" stroke-width="3.2"/>
<rect x="502.7" y="1677.7" width="512.8" height="136.5" rx="6" fill="#2b2b2b"/>
<path d="M541.9 1767.8A42.5 42.5 0 1 1 602.1 1767.8" fill="none" stroke="#4d4d4d" stroke-width="4.1" stroke-linecap="butt"/>
<path d="M569.8 1695.3A42.5 42.5 0 0 1 574.2 1695.3" fill="none" stroke="#f0284f" stroke-width="4.1" stroke-linecap="butt"/>
<circle cx="572" cy="1737.7" r="31" fill="url(#g12)"/>
<line x1="572" y1="1728.4" x2="572" y2="1707.6" stroke="#e4e4e4" stroke-width="5.4" />
<path d="M638.4 1767.8A42.5 42.5 0 1 1 698.6 1767.8" fill="none" stroke="#4d4d4d" stroke-width="4.1" stroke-linecap="butt"/>
<circle cx="668.5" cy="1737.7" r="31" fill="url(#g12)"/>
<line x1="662.8" y1="1745" x2="650" y2="1761.4" stroke="#e4e4e4" stroke-width="5.4" />
<text x="573" y="1799" font-size="22" fill="#d6d6d6" text-anchor="middle">Pitch</text>
<text x="643" y="1799" font-size="22" fill="#d6d6d6">Glide</text>
<rect x="701" y="1781" width="21.7" height="21.5" rx="4" fill="#bdbdbd"/>
<text x="711.8" y="1798" font-size="16" fill="#2b2b2b" text-anchor="middle" font-weight="bold">L</text>
<rect x="751" y="1685" width="130" height="121.7" rx="6" fill="#4a4a4a"/>
<rect x="758.7" y="1693" width="114.3" height="50" rx="6" fill="#1e1e1e"/>
<path d="M764.7 1705.5V1698H867V1705.5H863V1702H768.7V1705.5Z" fill="#3d6a88"/>
<text x="815.9" y="1726" font-size="21" fill="#fff" text-anchor="middle">Note FX</text>
<rect x="758.7" y="1749.6" width="114.3" height="49.4" rx="6" fill="#1e1e1e"/>
<path d="M764.7 1762.1V1754.6H867V1762.1H863V1758.6H768.7V1762.1Z" fill="#3d6a88"/>
<rect x="773.7" y="1763.1" width="17" height="29.4" fill="#3a3a3a"/>
<text x="820.9" y="1782" font-size="21" fill="#fff" text-anchor="middle">FX</text>
<path d="M917.7 1767.8A42.5 42.5 0 1 1 977.9 1767.8" fill="none" stroke="#4d4d4d" stroke-width="4.1" stroke-linecap="butt"/>
<path d="M917.7 1767.8A42.5 42.5 0 1 1 989.7 1745.1" fill="none" stroke="#f0284f" stroke-width="4.1" stroke-linecap="butt"/>
<circle cx="947.8" cy="1737.7" r="31" fill="url(#g12)"/>
<line x1="957" y1="1739.3" x2="977.4" y2="1742.9" stroke="#e4e4e4" stroke-width="5.4" />
<text x="947.8" y="1799" font-size="22" fill="#d6d6d6" text-anchor="middle">Out</text>
<rect x="1033.7" y="1399" width="18.5" height="18.5" fill="#f0d43a"/>
<line x1="1034" y1="1602.3" x2="1052" y2="1602.3" stroke="#9a9a9a" stroke-width="3" />
<line x1="1043" y1="1593.3" x2="1043" y2="1611.3" stroke="#9a9a9a" stroke-width="3" />
<rect x="1033.7" y="1764.4" width="8" height="44.6" fill="url(#g50)"/>
<rect x="1033.7" y="1757" width="8" height="7.4" fill="#ffd93d"/>
<rect x="1033.7" y="1733.5" width="8" height="23.5" fill="#f5780e"/>
<rect x="1033.7" y="1725" width="8" height="2.8" fill="#f5780e"/>
<rect x="1043.7" y="1764.4" width="8" height="44.6" fill="url(#g50)"/>
<rect x="1043.7" y="1757" width="8" height="7.4" fill="#ffd93d"/>
<rect x="1043.7" y="1733.5" width="8" height="23.5" fill="#f5780e"/>
<rect x="1043.7" y="1725" width="8" height="2.8" fill="#f5780e"/>
<rect x="1064" y="1383" width="1258" height="437" rx="10" fill="#555555"/>
<path d="M1064 1393A10 10 0 0 1 1074 1383H1118V1820H1074A10 10 0 0 1 1064 1810Z" fill="#484848"/>
<path d="M1095.7 1403.6A8.6 8.6 0 1 1 1086.3 1403.6" fill="none" stroke="#f58a1f" stroke-width="3.2" stroke-linecap="round"/>
<line x1="1091" y1="1399.5" x2="1091" y2="1410.5" stroke="#f58a1f" stroke-width="3.2" stroke-linecap="round"/>
<path d="M1080 1443H1090V1446H1102V1460H1080Z" fill="#9c9c9c"/>
<line x1="1080" y1="1447.3" x2="1091" y2="1447.3" stroke="#484848" stroke-width="1.3" />
<text transform="translate(1099 1602) rotate(-90)" font-size="22" fill="#ffffff" text-anchor="middle" textLength="45" lengthAdjust="spacingAndGlyphs">AMP</text>
<circle cx="1083" cy="1760" r="2.8" fill="#8c8c8c"/>
<circle cx="1083" cy="1768" r="2.8" fill="#8c8c8c"/>
<circle cx="1091" cy="1760" r="2.8" fill="#8c8c8c"/>
<circle cx="1091" cy="1768" r="2.8" fill="#8c8c8c"/>
<circle cx="1099" cy="1760" r="2.8" fill="#8c8c8c"/>
<circle cx="1099" cy="1768" r="2.8" fill="#8c8c8c"/>
<circle cx="1084" cy="1797.8" r="4.6" fill="#8c8c8c"/>
<line x1="1088" y1="1797.8" x2="1097" y2="1797.8" stroke="#8c8c8c" stroke-width="2.4" />
<path d="M1095 1792.3L1103 1797.8L1095 1803.3Z" fill="#8c8c8c"/>
<rect x="1124" y="1388.7" width="346" height="210.5" rx="4" fill="#1a1a1a"/>
<clipPath id="eq1"><rect x="1124" y="1388.7" width="346" height="210.5" rx="4"/></clipPath><g clip-path="url(#eq1)">
<line x1="1122.1" y1="1388.7" x2="1122.1" y2="1599" stroke="#2b2b2b" stroke-width="1" />
<line x1="1136.9" y1="1388.7" x2="1136.9" y2="1599" stroke="#2b2b2b" stroke-width="1" />
<line x1="1148.5" y1="1388.7" x2="1148.5" y2="1599" stroke="#2b2b2b" stroke-width="1" />
<line x1="1157.9" y1="1388.7" x2="1157.9" y2="1599" stroke="#2b2b2b" stroke-width="1" />
<line x1="1165.9" y1="1388.7" x2="1165.9" y2="1599" stroke="#2b2b2b" stroke-width="1" />
<line x1="1172.8" y1="1388.7" x2="1172.8" y2="1599" stroke="#2b2b2b" stroke-width="1" />
<line x1="1178.9" y1="1388.7" x2="1178.9" y2="1599" stroke="#2b2b2b" stroke-width="1" />
<line x1="1184.3" y1="1388.7" x2="1184.3" y2="1599" stroke="#3c3c3c" stroke-width="1" />
<line x1="1220.1" y1="1388.7" x2="1220.1" y2="1599" stroke="#2b2b2b" stroke-width="1" />
<line x1="1241.1" y1="1388.7" x2="1241.1" y2="1599" stroke="#2b2b2b" stroke-width="1" />
<line x1="1255.9" y1="1388.7" x2="1255.9" y2="1599" stroke="#2b2b2b" stroke-width="1" />
<line x1="1267.5" y1="1388.7" x2="1267.5" y2="1599" stroke="#2b2b2b" stroke-width="1" />
<line x1="1276.9" y1="1388.7" x2="1276.9" y2="1599" stroke="#2b2b2b" stroke-width="1" />
<line x1="1284.9" y1="1388.7" x2="1284.9" y2="1599" stroke="#2b2b2b" stroke-width="1" />
<line x1="1291.8" y1="1388.7" x2="1291.8" y2="1599" stroke="#2b2b2b" stroke-width="1" />
<line x1="1297.9" y1="1388.7" x2="1297.9" y2="1599" stroke="#2b2b2b" stroke-width="1" />
<line x1="1303.3" y1="1388.7" x2="1303.3" y2="1599" stroke="#3c3c3c" stroke-width="1" />
<line x1="1339.1" y1="1388.7" x2="1339.1" y2="1599" stroke="#2b2b2b" stroke-width="1" />
<line x1="1360.1" y1="1388.7" x2="1360.1" y2="1599" stroke="#2b2b2b" stroke-width="1" />
<line x1="1374.9" y1="1388.7" x2="1374.9" y2="1599" stroke="#2b2b2b" stroke-width="1" />
<line x1="1386.5" y1="1388.7" x2="1386.5" y2="1599" stroke="#2b2b2b" stroke-width="1" />
<line x1="1395.9" y1="1388.7" x2="1395.9" y2="1599" stroke="#2b2b2b" stroke-width="1" />
<line x1="1403.9" y1="1388.7" x2="1403.9" y2="1599" stroke="#2b2b2b" stroke-width="1" />
<line x1="1410.8" y1="1388.7" x2="1410.8" y2="1599" stroke="#2b2b2b" stroke-width="1" />
<line x1="1416.9" y1="1388.7" x2="1416.9" y2="1599" stroke="#2b2b2b" stroke-width="1" />
<line x1="1422.3" y1="1388.7" x2="1422.3" y2="1599" stroke="#3c3c3c" stroke-width="1" />
<line x1="1458.1" y1="1388.7" x2="1458.1" y2="1599" stroke="#2b2b2b" stroke-width="1" />
<line x1="1124" y1="1417.7" x2="1470" y2="1417.7" stroke="#303030" stroke-width="1" />
<line x1="1124" y1="1458.5" x2="1470" y2="1458.5" stroke="#303030" stroke-width="1" />
<line x1="1124" y1="1499.5" x2="1470" y2="1499.5" stroke="#303030" stroke-width="1" />
<line x1="1124" y1="1540.5" x2="1470" y2="1540.5" stroke="#303030" stroke-width="1" />
<line x1="1124" y1="1581.8" x2="1470" y2="1581.8" stroke="#303030" stroke-width="1" />
<line x1="1142.4" y1="1599" x2="1142.4" y2="1572.7" stroke="#ff861a" stroke-width="1.9" />
<line x1="1163.2" y1="1599" x2="1163.2" y2="1543.2" stroke="#ff861a" stroke-width="1.9" />
<line x1="1177.9" y1="1599" x2="1177.9" y2="1527.2" stroke="#ff861a" stroke-width="1.9" />
<line x1="1188.8" y1="1599" x2="1188.8" y2="1518.4" stroke="#ff861a" stroke-width="1.9" />
<line x1="1198" y1="1599" x2="1198" y2="1522.4" stroke="#ff861a" stroke-width="1.9" />
<line x1="1205.9" y1="1599" x2="1205.9" y2="1521.9" stroke="#ff861a" stroke-width="1.9" />
<line x1="1212.9" y1="1599" x2="1212.9" y2="1524.5" stroke="#ff861a" stroke-width="1.9" />
<line x1="1218.8" y1="1599" x2="1218.8" y2="1522.4" stroke="#ff861a" stroke-width="1.9" />
<line x1="1225" y1="1599" x2="1225" y2="1520.2" stroke="#ff861a" stroke-width="1.9" />
<line x1="1230" y1="1599" x2="1230" y2="1520.2" stroke="#ff861a" stroke-width="1.9" />
<line x1="1233.7" y1="1599" x2="1233.7" y2="1516.9" stroke="#ff861a" stroke-width="1.9" />
<line x1="1237.7" y1="1599" x2="1237.7" y2="1515.3" stroke="#ff861a" stroke-width="1.9" />
<line x1="1241.4" y1="1599" x2="1241.4" y2="1514.7" stroke="#ff861a" stroke-width="1.9" />
<line x1="1245.1" y1="1599" x2="1245.1" y2="1513.6" stroke="#ff861a" stroke-width="1.9" />
<line x1="1248.4" y1="1599" x2="1248.4" y2="1511.4" stroke="#ff861a" stroke-width="1.9" />
<line x1="1251.9" y1="1599" x2="1251.9" y2="1507" stroke="#ff861a" stroke-width="1.9" />
<line x1="1255.4" y1="1599" x2="1255.4" y2="1506.6" stroke="#ff861a" stroke-width="1.9" />
<line x1="1258.9" y1="1599" x2="1258.9" y2="1507" stroke="#ff861a" stroke-width="1.9" />
<line x1="1261.6" y1="1599" x2="1261.6" y2="1502.6" stroke="#ff861a" stroke-width="1.9" />
<path d="M1263.3 1599L1263.3 1500.3L1264.8 1499.5L1266.2 1500.9L1267.7 1498.8L1269.1 1500L1270.6 1499.2L1272.1 1497.9L1273.5 1498.7L1275 1496.4L1276.4 1497L1277.8 1493.9L1279.2 1492L1280.6 1491.2L1281.9 1490.6L1283.3 1488L1284.7 1488L1286.1 1489L1287.6 1489.7L1289 1488.2L1290.4 1487.3L1291.8 1488.8L1293.1 1485.5L1294.5 1487.6L1295.9 1485.4L1297.3 1484.5L1298.6 1484L1300 1484.2L1301.4 1485.5L1302.7 1483L1303.8 1478.8L1305.2 1478L1306.5 1476.2L1307.8 1475.8L1309.2 1473.3L1310.5 1472.3L1311.9 1471.8L1313.2 1472.3L1314.5 1470.5L1315.9 1469.2L1317.2 1469.7L1318.6 1468.8L1320 1467.9L1321.3 1469.1L1322.7 1468.4L1324.1 1466.5L1325.5 1467.2L1326.8 1466.6L1329 1457.9L1330.7 1444.8L1332.3 1430.8L1333.9 1437.9L1335.6 1440.1L1337.2 1441.6L1338.9 1443.2L1340.3 1441.6L1341.7 1443L1343.1 1441.9L1344.5 1444.2L1345.9 1444.8L1347.3 1444.5L1348.7 1445.8L1350.1 1439.4L1351.5 1435.9L1352.8 1430.9L1354.2 1426.2L1356.4 1452.1L1358.6 1481.8L1360.2 1478.9L1361.9 1474.1L1363.2 1474.2L1364.6 1471.7L1366 1473.2L1367.3 1472.5L1369 1464.3L1370.6 1454.4L1372.3 1462L1373.9 1471.6L1375.4 1477.6L1376.8 1480.7L1378.3 1487.2L1379.9 1501L1381.6 1515.7L1383 1515.8L1384.5 1518.5L1386 1516.8L1387.3 1516.6L1388.7 1516.5L1390.1 1517.5L1391.4 1514.4L1393.1 1518.9L1394.7 1522.5L1396 1525.3L1397.3 1526.9L1398.7 1528.8L1400 1528.7L1401.3 1530.8L1402.7 1528.5L1404.2 1528L1405.7 1526L1407 1526.9L1408.3 1530.5L1409.6 1534.2L1410.9 1537.7L1412.2 1542L1413.5 1542.1L1414.9 1540.9L1416.2 1539.8L1417.5 1540.9L1418.8 1540.6L1420.1 1544L1421.4 1548.1L1422.7 1550.1L1424.1 1552.4L1425.4 1555.6L1426.7 1555.2L1428.1 1552.7L1429.5 1554.8L1430.8 1553.9L1432.5 1561.9L1434.1 1569.3L1435.6 1569.5L1437.1 1571L1438.5 1571.6L1440 1574.5L1441.4 1574.6L1442.9 1576.1L1444.5 1583.8L1446.2 1591.1L1447.5 1592.7L1448.8 1594L1450.1 1595.7L1450.1 1599Z" fill="#ff861a"/>
<path d="M1124.2 1595.7L1193.4 1499.4L1204.2 1503.1L1212.9 1507L1219.5 1509.7L1226.1 1511.4L1232.6 1512.5L1245.8 1512.1L1263.3 1509.2L1285.2 1504.8L1307.1 1501.6L1329 1500L1350.9 1499.4L1368.4 1499.8L1379.4 1501.1L1387 1503.3L1392.5 1506.6L1401.3 1515.8L1416.6 1535.5L1438.5 1566.2L1462.6 1598.6" fill="none" stroke="#ffd93d" stroke-width="2.4" stroke-linejoin="round"/>
</g>
<text x="1297.3" y="1417" font-size="22" fill="#ffd93d" text-anchor="middle">Input EQ</text>
<circle cx="1193.4" cy="1499.4" r="11.5" fill="#ffd93d"/>
<text x="1193.4" y="1505.9" font-size="18" fill="#222" text-anchor="middle">L</text>
<circle cx="1220.6" cy="1519.5" r="11.5" fill="#ffd93d"/>
<text x="1220.6" y="1526" font-size="18" fill="#222" text-anchor="middle">M</text>
<circle cx="1390.3" cy="1500" r="11.5" fill="#ffd93d"/>
<text x="1390.3" y="1506.5" font-size="18" fill="#222" text-anchor="middle">H</text>
<rect x="1124" y="1605" width="346" height="209" rx="4" fill="#2b2b2b"/>
<path d="M1160.8 1681.4A34 34 0 1 1 1208.8 1681.4" fill="none" stroke="#4d4d4d" stroke-width="4.1" stroke-linecap="butt"/>
<path d="M1160.8 1681.4A34 34 0 0 1 1152.9 1645.8" fill="none" stroke="#ffd93d" stroke-width="4.1" stroke-linecap="butt"/>
<circle cx="1184.8" cy="1657.4" r="24.5" fill="url(#g12)"/>
<line x1="1177.9" y1="1654.9" x2="1162.5" y2="1649.3" stroke="#e4e4e4" stroke-width="5.2" />
<text x="1184.8" y="1706" font-size="22" fill="#d6d6d6" text-anchor="middle">L</text>
<path d="M1273 1681.4A34 34 0 1 1 1321 1681.4" fill="none" stroke="#4d4d4d" stroke-width="4.1" stroke-linecap="butt"/>
<path d="M1273 1681.4A34 34 0 0 1 1282.6 1626.6" fill="none" stroke="#ffd93d" stroke-width="4.1" stroke-linecap="butt"/>
<circle cx="1297" cy="1657.4" r="24.5" fill="url(#g12)"/>
<line x1="1293.9" y1="1650.7" x2="1287" y2="1635.9" stroke="#e4e4e4" stroke-width="5.2" />
<text x="1297" y="1706" font-size="22" fill="#d6d6d6" text-anchor="middle">M</text>
<path d="M1385 1681.4A34 34 0 1 1 1433 1681.4" fill="none" stroke="#4d4d4d" stroke-width="4.1" stroke-linecap="butt"/>
<path d="M1385 1681.4A34 34 0 1 1 1443 1655.6" fill="none" stroke="#ffd93d" stroke-width="4.1" stroke-linecap="butt"/>
<circle cx="1409" cy="1657.4" r="24.5" fill="url(#g12)"/>
<line x1="1416.3" y1="1657" x2="1432.7" y2="1656.2" stroke="#e4e4e4" stroke-width="5.2" />
<text x="1409" y="1706" font-size="22" fill="#d6d6d6" text-anchor="middle">H</text>
<rect x="1134" y="1719.6" width="101.6" height="37.2" rx="4" fill="#555"/>
<path d="M1146 1746.2C1149 1735.2 1154 1734.2 1158 1734.2H1167" fill="none" stroke="#fff" stroke-width="2.2"/>
<path d="M1219.6 1735.2H1229.6L1224.6 1741.2Z" fill="#fff"/>
<rect x="1246" y="1719.6" width="101.7" height="37.2" rx="4" fill="#d4d4d4"/>
<text x="1339.7" y="1747.3" font-size="22" fill="#111" text-anchor="end">200 Hz</text>
<rect x="1358.3" y="1719.6" width="101.5" height="37.2" rx="4" fill="#555"/>
<path d="M1370.3 1734.2H1379.3C1384.3 1734.2 1388.3 1735.2 1391.3 1746.2" fill="none" stroke="#fff" stroke-width="2.2"/>
<path d="M1443.8 1735.2H1453.8L1448.8 1741.2Z" fill="#fff"/>
<rect x="1134" y="1767.4" width="101.6" height="37.2" rx="4" fill="#d4d4d4"/>
<text x="1227.6" y="1795.1" font-size="22" fill="#111" text-anchor="end">1.53</text>
<rect x="1246" y="1767.4" width="101.7" height="37.2" rx="4" fill="#d4d4d4"/>
<text x="1339.7" y="1795.1" font-size="22" fill="#111" text-anchor="end">0.43</text>
<rect x="1358.3" y="1767.4" width="101.5" height="37.2" rx="4" fill="#d4d4d4"/>
<text x="1451.8" y="1795.1" font-size="22" fill="#111" text-anchor="end">0.79</text>
<rect x="1476" y="1388.7" width="154" height="425.5" rx="4" fill="#1a1a1a"/>
<rect x="1484" y="1397" width="138" height="41.6" rx="5" fill="#555"/>
<text x="1496.6" y="1426.7" font-size="22" fill="#fff">Fold A</text>
<path d="M1603.5 1414H1614L1608.8 1420.5Z" fill="#fff"/>
<path d="M1529 1513A34 34 0 1 1 1577 1513" fill="none" stroke="#4d4d4d" stroke-width="4.1" stroke-linecap="butt"/>
<path d="M1529 1513A34 34 0 0 1 1550 1455.1" fill="none" stroke="#f0284f" stroke-width="4.1" stroke-linecap="butt"/>
<circle cx="1553" cy="1489" r="24" fill="url(#g11)"/>
<line x1="1552.5" y1="1482.8" x2="1551" y2="1465.6" stroke="#111" stroke-width="4.3" />
<text x="1553" y="1538" font-size="22" fill="#d6d6d6" text-anchor="middle">Bias</text>
<path d="M1529 1618A34 34 0 1 1 1577 1618" fill="none" stroke="#4d4d4d" stroke-width="4.1" stroke-linecap="butt"/>
<path d="M1529 1618A34 34 0 0 1 1519.1 1597" fill="none" stroke="#f0284f" stroke-width="4.1" stroke-linecap="butt"/>
<circle cx="1553" cy="1594" r="24" fill="url(#g11)"/>
<line x1="1546.8" y1="1593.7" x2="1529.5" y2="1592.8" stroke="#111" stroke-width="4.3" />
<text x="1553" y="1642.5" font-size="22" fill="#d6d6d6" text-anchor="middle">Sag</text>
<rect x="1596" y="1629" width="18" height="9.7" fill="#3a3a3a"/>
<path d="M1512 1763A58 58 0 1 1 1594 1763" fill="none" stroke="#4d4d4d" stroke-width="4.1" stroke-linecap="butt"/>
<path d="M1512 1763A58 58 0 0 1 1515.7 1677.6" fill="none" stroke="#f0284f" stroke-width="4.1" stroke-linecap="butt"/>
<circle cx="1553" cy="1722" r="46" fill="url(#g11)"/>
<line x1="1545.3" y1="1712.8" x2="1524" y2="1687.5" stroke="#111" stroke-width="6.2" />
<text x="1553" y="1795" font-size="22" fill="#d6d6d6" text-anchor="middle">Drive</text>
<rect x="1636" y="1388.7" width="346" height="210.5" rx="4" fill="#1a1a1a"/>
<clipPath id="eq2"><rect x="1636" y="1388.7" width="346" height="210.5" rx="4"/></clipPath><g clip-path="url(#eq2)">
<line x1="1634.1" y1="1388.7" x2="1634.1" y2="1599" stroke="#2b2b2b" stroke-width="1" />
<line x1="1648.9" y1="1388.7" x2="1648.9" y2="1599" stroke="#2b2b2b" stroke-width="1" />
<line x1="1660.5" y1="1388.7" x2="1660.5" y2="1599" stroke="#2b2b2b" stroke-width="1" />
<line x1="1669.9" y1="1388.7" x2="1669.9" y2="1599" stroke="#2b2b2b" stroke-width="1" />
<line x1="1677.9" y1="1388.7" x2="1677.9" y2="1599" stroke="#2b2b2b" stroke-width="1" />
<line x1="1684.8" y1="1388.7" x2="1684.8" y2="1599" stroke="#2b2b2b" stroke-width="1" />
<line x1="1690.9" y1="1388.7" x2="1690.9" y2="1599" stroke="#2b2b2b" stroke-width="1" />
<line x1="1696.3" y1="1388.7" x2="1696.3" y2="1599" stroke="#3c3c3c" stroke-width="1" />
<line x1="1732.1" y1="1388.7" x2="1732.1" y2="1599" stroke="#2b2b2b" stroke-width="1" />
<line x1="1753.1" y1="1388.7" x2="1753.1" y2="1599" stroke="#2b2b2b" stroke-width="1" />
<line x1="1767.9" y1="1388.7" x2="1767.9" y2="1599" stroke="#2b2b2b" stroke-width="1" />
<line x1="1779.5" y1="1388.7" x2="1779.5" y2="1599" stroke="#2b2b2b" stroke-width="1" />
<line x1="1788.9" y1="1388.7" x2="1788.9" y2="1599" stroke="#2b2b2b" stroke-width="1" />
<line x1="1796.9" y1="1388.7" x2="1796.9" y2="1599" stroke="#2b2b2b" stroke-width="1" />
<line x1="1803.8" y1="1388.7" x2="1803.8" y2="1599" stroke="#2b2b2b" stroke-width="1" />
<line x1="1809.9" y1="1388.7" x2="1809.9" y2="1599" stroke="#2b2b2b" stroke-width="1" />
<line x1="1815.3" y1="1388.7" x2="1815.3" y2="1599" stroke="#3c3c3c" stroke-width="1" />
<line x1="1851.1" y1="1388.7" x2="1851.1" y2="1599" stroke="#2b2b2b" stroke-width="1" />
<line x1="1872.1" y1="1388.7" x2="1872.1" y2="1599" stroke="#2b2b2b" stroke-width="1" />
<line x1="1886.9" y1="1388.7" x2="1886.9" y2="1599" stroke="#2b2b2b" stroke-width="1" />
<line x1="1898.5" y1="1388.7" x2="1898.5" y2="1599" stroke="#2b2b2b" stroke-width="1" />
<line x1="1907.9" y1="1388.7" x2="1907.9" y2="1599" stroke="#2b2b2b" stroke-width="1" />
<line x1="1915.9" y1="1388.7" x2="1915.9" y2="1599" stroke="#2b2b2b" stroke-width="1" />
<line x1="1922.8" y1="1388.7" x2="1922.8" y2="1599" stroke="#2b2b2b" stroke-width="1" />
<line x1="1928.9" y1="1388.7" x2="1928.9" y2="1599" stroke="#2b2b2b" stroke-width="1" />
<line x1="1934.3" y1="1388.7" x2="1934.3" y2="1599" stroke="#3c3c3c" stroke-width="1" />
<line x1="1970.1" y1="1388.7" x2="1970.1" y2="1599" stroke="#2b2b2b" stroke-width="1" />
<line x1="1636" y1="1417.7" x2="1982" y2="1417.7" stroke="#303030" stroke-width="1" />
<line x1="1636" y1="1458.5" x2="1982" y2="1458.5" stroke="#303030" stroke-width="1" />
<line x1="1636" y1="1499.5" x2="1982" y2="1499.5" stroke="#303030" stroke-width="1" />
<line x1="1636" y1="1540.5" x2="1982" y2="1540.5" stroke="#303030" stroke-width="1" />
<line x1="1636" y1="1581.8" x2="1982" y2="1581.8" stroke="#303030" stroke-width="1" />
<line x1="1654.1" y1="1599" x2="1654.1" y2="1566.9" stroke="#c46cfa" stroke-width="1.9" />
<line x1="1675" y1="1599" x2="1675" y2="1533.1" stroke="#c46cfa" stroke-width="1.9" />
<line x1="1690" y1="1599" x2="1690" y2="1516.1" stroke="#c46cfa" stroke-width="1.9" />
<line x1="1701" y1="1599" x2="1701" y2="1510.3" stroke="#c46cfa" stroke-width="1.9" />
<line x1="1710" y1="1599" x2="1710" y2="1504.1" stroke="#c46cfa" stroke-width="1.9" />
<line x1="1718.1" y1="1599" x2="1718.1" y2="1504.4" stroke="#c46cfa" stroke-width="1.9" />
<line x1="1724.9" y1="1599" x2="1724.9" y2="1501.2" stroke="#c46cfa" stroke-width="1.9" />
<line x1="1731.2" y1="1599" x2="1731.2" y2="1507.2" stroke="#c46cfa" stroke-width="1.9" />
<line x1="1737" y1="1599" x2="1737" y2="1504.5" stroke="#c46cfa" stroke-width="1.9" />
<line x1="1742.2" y1="1599" x2="1742.2" y2="1504.8" stroke="#c46cfa" stroke-width="1.9" />
<line x1="1746.1" y1="1599" x2="1746.1" y2="1504.5" stroke="#c46cfa" stroke-width="1.9" />
<line x1="1750" y1="1599" x2="1750" y2="1501.2" stroke="#c46cfa" stroke-width="1.9" />
<line x1="1754" y1="1599" x2="1754" y2="1504.1" stroke="#c46cfa" stroke-width="1.9" />
<line x1="1757.9" y1="1599" x2="1757.9" y2="1505.2" stroke="#c46cfa" stroke-width="1.9" />
<line x1="1761" y1="1599" x2="1761" y2="1505.2" stroke="#c46cfa" stroke-width="1.9" />
<line x1="1764.2" y1="1599" x2="1764.2" y2="1509.1" stroke="#c46cfa" stroke-width="1.9" />
<line x1="1767.1" y1="1599" x2="1767.1" y2="1511.1" stroke="#c46cfa" stroke-width="1.9" />
<line x1="1770" y1="1599" x2="1770" y2="1509.2" stroke="#c46cfa" stroke-width="1.9" />
<line x1="1772.6" y1="1599" x2="1772.6" y2="1506.4" stroke="#c46cfa" stroke-width="1.9" />
<line x1="1775.2" y1="1599" x2="1775.2" y2="1503.3" stroke="#c46cfa" stroke-width="1.9" />
<path d="M1776.4 1599L1776.4 1499.2L1777.7 1498.6L1779.1 1498.7L1780.4 1496.3L1781.7 1495.4L1783.1 1495.7L1784.4 1494.4L1785.8 1495.5L1787.1 1495.8L1788.5 1496.4L1789.8 1494.1L1791.2 1494.8L1792.7 1479.2L1794.3 1479.1L1795.9 1480.7L1797.4 1480.6L1799 1486.8L1800.6 1489.8L1802 1488.8L1803.4 1488.7L1804.8 1487.3L1806.2 1486.8L1807.6 1488.4L1809 1486.9L1810.4 1487.4L1811.8 1487.5L1813.2 1486.9L1815.5 1472.5L1816.8 1469.7L1818.2 1468.3L1819.6 1469.6L1821.1 1472.3L1822.6 1474.2L1823.9 1477.9L1825.2 1480.4L1826.5 1482.9L1828.1 1481.3L1829.6 1477.4L1832 1475.3L1833.3 1469.7L1834.6 1463.2L1835.9 1457.7L1838.3 1461L1840.6 1472.8L1843 1446.8L1844.4 1444.3L1845.7 1444.3L1847.1 1441.5L1848.5 1441.9L1849.8 1445L1851.1 1445.7L1852.4 1449.7L1854 1452.8L1855.6 1452.1L1857.1 1453.8L1858.7 1451.9L1860.3 1450.9L1861.8 1444.8L1863.4 1437.4L1864.7 1428.6L1866.1 1420.8L1868.1 1431.3L1869.7 1494.6L1871.3 1465.6L1873.6 1462L1875.2 1467.1L1876.8 1471.4L1879.1 1436.7L1881.5 1446.9L1883 1441L1884.6 1438.3L1887 1461.5L1888.5 1464.6L1890.1 1470.3L1891.4 1469.9L1892.7 1473.1L1894 1473L1895.6 1470.4L1897.2 1466.2L1898.5 1466.2L1899.8 1468.1L1901.1 1467.3L1902.7 1473.6L1904.2 1483.3L1905.8 1492.9L1907.4 1505.3L1908.9 1514.6L1910.5 1521.8L1912.9 1535.8L1915.2 1548L1917.6 1550.3L1919.9 1542.5L1922.3 1561.5L1923.9 1566.3L1925.4 1572.6L1927.8 1578.5L1929.4 1572.4L1930.9 1567.9L1933.3 1574.1L1934.9 1592.1L1936.2 1592.7L1937.5 1593.5L1938.8 1594.6L1940.1 1595.1L1941.4 1595.9L1942.7 1596.7L1942.7 1599Z" fill="#c46cfa"/>
<path d="M1636.2 1592.8L1651.4 1576.3L1675 1551.2L1698.5 1530.8L1722.1 1516.6L1745.6 1507.2L1769.2 1501.7L1791.2 1498.1L1802.2 1497.5L1824.1 1495.9L1847.7 1492.3L1865 1486.8L1879.1 1477.4L1887 1471.9L1891.7 1469.8L1896.4 1471.9L1901.1 1477.4L1908.9 1496.2L1918.4 1518.2L1934.1 1546.5L1949.8 1571.6L1968.6 1598.8" fill="none" stroke="#4fa8f2" stroke-width="2.2" stroke-linejoin="round"/>
</g>
<text x="1809" y="1417" font-size="22" fill="#4fa8f2" text-anchor="middle">Output EQ</text>
<circle cx="1700.7" cy="1499.3" r="11.5" fill="#4fa8f2"/>
<text x="1700.7" y="1505.8" font-size="18" fill="#182838" text-anchor="middle">L</text>
<circle cx="1802.2" cy="1497.8" r="11.5" fill="#4fa8f2"/>
<text x="1802.2" y="1504.3" font-size="18" fill="#182838" text-anchor="middle">M</text>
<circle cx="1894" cy="1499.7" r="11.5" fill="#4fa8f2"/>
<text x="1894" y="1506.2" font-size="18" fill="#182838" text-anchor="middle">H</text>
<rect x="1636" y="1605" width="346" height="209" rx="4" fill="#2b2b2b"/>
<path d="M1672.8 1681.4A34 34 0 1 1 1720.8 1681.4" fill="none" stroke="#4d4d4d" stroke-width="4.1" stroke-linecap="butt"/>
<path d="M1672.8 1681.4A34 34 0 0 1 1664.5 1646.9" fill="none" stroke="#4fa8f2" stroke-width="4.1" stroke-linecap="butt"/>
<circle cx="1696.8" cy="1657.4" r="24.5" fill="url(#g12)"/>
<line x1="1689.8" y1="1655.1" x2="1674.2" y2="1650.1" stroke="#e4e4e4" stroke-width="5.2" />
<text x="1696.8" y="1706" font-size="22" fill="#d6d6d6" text-anchor="middle">L</text>
<path d="M1785 1681.4A34 34 0 1 1 1833 1681.4" fill="none" stroke="#4d4d4d" stroke-width="4.1" stroke-linecap="butt"/>
<path d="M1785 1681.4A34 34 0 0 1 1810.8 1623.4" fill="none" stroke="#4fa8f2" stroke-width="4.1" stroke-linecap="butt"/>
<circle cx="1809" cy="1657.4" r="24.5" fill="url(#g12)"/>
<line x1="1809.4" y1="1650.1" x2="1810.2" y2="1633.7" stroke="#e4e4e4" stroke-width="5.2" />
<text x="1809" y="1706" font-size="22" fill="#d6d6d6" text-anchor="middle">M</text>
<path d="M1897 1681.4A34 34 0 1 1 1945 1681.4" fill="none" stroke="#4d4d4d" stroke-width="4.1" stroke-linecap="butt"/>
<path d="M1897 1681.4A34 34 0 1 1 1954.5 1651.5" fill="none" stroke="#4fa8f2" stroke-width="4.1" stroke-linecap="butt"/>
<circle cx="1921" cy="1657.4" r="24.5" fill="url(#g12)"/>
<line x1="1928.2" y1="1656.1" x2="1944.4" y2="1653.3" stroke="#e4e4e4" stroke-width="5.2" />
<text x="1921" y="1706" font-size="22" fill="#d6d6d6" text-anchor="middle">H</text>
<rect x="1646" y="1719.6" width="101.6" height="37.2" rx="4" fill="#555"/>
<path d="M1658 1746.2C1661 1735.2 1666 1734.2 1670 1734.2H1679" fill="none" stroke="#fff" stroke-width="2.2"/>
<path d="M1731.6 1735.2H1741.6L1736.6 1741.2Z" fill="#fff"/>
<rect x="1758" y="1719.6" width="101.7" height="37.2" rx="4" fill="#d4d4d4"/>
<text x="1851.7" y="1747.3" font-size="22" fill="#111" text-anchor="end">780 Hz</text>
<rect x="1870.3" y="1719.6" width="101.5" height="37.2" rx="4" fill="#555"/>
<path d="M1882.3 1734.2H1891.3C1896.3 1734.2 1900.3 1735.2 1903.3 1746.2" fill="none" stroke="#fff" stroke-width="2.2"/>
<path d="M1955.8 1735.2H1965.8L1960.8 1741.2Z" fill="#fff"/>
<rect x="1646" y="1767.4" width="101.6" height="37.2" rx="4" fill="#d4d4d4"/>
<text x="1739.6" y="1795.1" font-size="22" fill="#111" text-anchor="end">0.43</text>
<rect x="1758" y="1767.4" width="101.7" height="37.2" rx="4" fill="#d4d4d4"/>
<text x="1851.7" y="1795.1" font-size="22" fill="#111" text-anchor="end">0.40</text>
<rect x="1870.3" y="1767.4" width="101.5" height="37.2" rx="4" fill="#d4d4d4"/>
<text x="1963.8" y="1795.1" font-size="22" fill="#111" text-anchor="end">2.17</text>
<rect x="1988" y="1388.7" width="193.7" height="425.5" rx="4" fill="#2b2b2b"/>
<text x="2085" y="1417" font-size="22" fill="#f58a1f" text-anchor="middle">Cabinet</text>
<circle cx="2160.5" cy="1409.5" r="8.5" fill="none" stroke="#f58a1f" stroke-width="2.4"/>
<line x1="2151" y1="1421.5" x2="2170" y2="1397.5" stroke="#f58a1f" stroke-width="2.4" />
<path d="M2005 1453.4H2028M2005 1447V1460M2028 1447V1460M2010 1449.5L2006 1453.4L2010 1457.5M2023 1449.5L2027 1453.4L2023 1457.5" fill="none" stroke="#f0f0f0" stroke-width="2"/>
<path d="M2016 1482V1504M2009 1481H2023M2009 1505H2023M2012 1487L2016 1483L2020 1487M2012 1499L2016 1503L2020 1499" fill="none" stroke="#f0f0f0" stroke-width="2"/>
<path d="M2006 1544L2026 1524M2003 1539L2009 1548M2023 1520L2029 1529M2008 1537V1542.5H2013.5M2019 1525.5H2024.5V1531" fill="none" stroke="#f0f0f0" stroke-width="2"/>
<path d="M2004 1583C2013 1583 2013 1564 2016 1564S2019 1583 2028 1583Z" fill="#f0f0f0"/>
<rect x="2046" y="1439.4" width="117.5" height="28.6" rx="4" fill="#d4d4d4"/>
<text x="2155" y="1462.5" font-size="22" fill="#111" text-anchor="end">82.7 cm</text>
<rect x="2046" y="1479.6" width="117.5" height="28.8" rx="4" fill="#d4d4d4"/>
<text x="2155" y="1502.9" font-size="22" fill="#111" text-anchor="end">92.1 cm</text>
<rect x="2046" y="1519.8" width="117.5" height="28.8" rx="4" fill="#d4d4d4"/>
<text x="2155" y="1543.1" font-size="22" fill="#111" text-anchor="end">7.37 cm</text>
<rect x="2046" y="1559.6" width="117.5" height="28.8" rx="4" fill="#d4d4d4"/>
<text x="2155" y="1582.9" font-size="22" fill="#111" text-anchor="end">23.6 %</text>
<text x="2019" y="1636" font-size="22" fill="#d6d6d6" text-anchor="middle">A</text>
<text x="2063.3" y="1636" font-size="22" fill="#d6d6d6" text-anchor="middle">B</text>
<text x="2107.6" y="1636" font-size="22" fill="#b2dc1e" text-anchor="middle">C</text>
<text x="2151.9" y="1636" font-size="22" fill="#d6d6d6" text-anchor="middle">D</text>
<text x="2019" y="1680.6" font-size="22" fill="#d6d6d6" text-anchor="middle">E</text>
<text x="2063.3" y="1680.6" font-size="22" fill="#d6d6d6" text-anchor="middle">F</text>
<text x="2107.6" y="1680.6" font-size="22" fill="#d6d6d6" text-anchor="middle">G</text>
<text x="2151.9" y="1680.6" font-size="22" fill="#d6d6d6" text-anchor="middle">H</text>
<rect x="2085" y="1647.6" width="45" height="3.6" fill="#b2dc1e"/>
<path d="M2017 1761.7A34 34 0 1 1 2065 1761.7" fill="none" stroke="#4d4d4d" stroke-width="4.1" stroke-linecap="butt"/>
<path d="M2017 1761.7A34 34 0 1 1 2067 1715.8" fill="none" stroke="#b2dc1e" stroke-width="4.1" stroke-linecap="butt"/>
<circle cx="2041" cy="1737.7" r="24.5" fill="url(#g12)"/>
<line x1="2047.2" y1="1733.7" x2="2060.9" y2="1724.8" stroke="#e4e4e4" stroke-width="5.2" />
<text x="2041" y="1795" font-size="22" fill="#d6d6d6" text-anchor="middle">Color</text>
<path d="M2104.4 1761.7A34 34 0 1 1 2152.4 1761.7" fill="none" stroke="#4d4d4d" stroke-width="4.1" stroke-linecap="butt"/>
<path d="M2104.4 1761.7A34 34 0 1 1 2161.4 1729.5" fill="none" stroke="#f58a1f" stroke-width="4.1" stroke-linecap="butt"/>
<circle cx="2128.4" cy="1737.7" r="24.5" fill="url(#g12)"/>
<line x1="2135.5" y1="1735.9" x2="2151.5" y2="1732" stroke="#e4e4e4" stroke-width="5.2" />
<text x="2128.4" y="1795" font-size="22" fill="#d6d6d6" text-anchor="middle">Mix</text>
<rect x="2187.6" y="1390" width="129.4" height="40" rx="6" fill="#1e1e1e"/>
<path d="M2193.6 1402.5V1395H2311V1402.5H2307V1399H2197.6V1402.5Z" fill="#3d6a88"/>
<rect x="2202.6" y="1403.5" width="17" height="20" fill="#3a3a3a"/>
<text x="2257.3" y="1418.3" font-size="21" fill="#fff" text-anchor="middle">Pre</text>
<rect x="2187.6" y="1437.3" width="129.4" height="41" rx="6" fill="#1e1e1e"/>
<circle cx="2216" cy="1458" r="7" fill="none" stroke="#8c8c8c" stroke-width="2"/>
<circle cx="2224" cy="1458" r="7" fill="none" stroke="#8c8c8c" stroke-width="2"/>
<text x="2238.4" y="1466" font-size="22" fill="#8c8c8c" textLength="62.5" lengthAdjust="spacingAndGlyphs">Stereo</text>
<rect x="2187.6" y="1486" width="129.4" height="40" rx="6" fill="#1e1e1e"/>
<path d="M2193.6 1498.5V1491H2311V1498.5H2307V1495H2197.6V1498.5Z" fill="#3d6a88"/>
<rect x="2202.6" y="1499.5" width="17" height="20" fill="#3a3a3a"/>
<text x="2257.3" y="1514.3" font-size="21" fill="#fff" text-anchor="middle">Post</text>
<rect x="2187.6" y="1533.4" width="129.4" height="280.8" rx="4" fill="#2b2b2b"/>
<path d="M2223.1 1631.6A42.5 42.5 0 1 1 2283.3 1631.6" fill="none" stroke="#4d4d4d" stroke-width="4.1" stroke-linecap="butt"/>
<path d="M2223.1 1631.6A42.5 42.5 0 0 1 2253.2 1559" fill="none" stroke="#f58a1f" stroke-width="4.1" stroke-linecap="butt"/>
<circle cx="2253.2" cy="1601.5" r="31" fill="url(#g12)"/>
<line x1="2253.2" y1="1592.2" x2="2253.2" y2="1571.4" stroke="#e4e4e4" stroke-width="5.4" />
<text x="2253.2" y="1658" font-size="22" fill="#d6d6d6" text-anchor="middle">Gain</text>
<path d="M2223.1 1767.8A42.5 42.5 0 1 1 2283.3 1767.8" fill="none" stroke="#4d4d4d" stroke-width="4.1" stroke-linecap="butt"/>
<path d="M2223.1 1767.8A42.5 42.5 0 1 1 2283.3 1767.8" fill="none" stroke="#f58a1f" stroke-width="4.1" stroke-linecap="butt"/>
<circle cx="2253.2" cy="1737.7" r="31" fill="url(#g12)"/>
<line x1="2259.4" y1="1744.6" x2="2273.3" y2="1760" stroke="#e4e4e4" stroke-width="5.4" />
<text x="2253.2" y="1794" font-size="22" fill="#d6d6d6" text-anchor="middle">Mix</text>
<line x1="2334.3" y1="1602.3" x2="2352.3" y2="1602.3" stroke="#4a7a9a" stroke-width="3" />
<line x1="2343.3" y1="1593.3" x2="2343.3" y2="1611.3" stroke="#4a7a9a" stroke-width="3" />
<rect x="2335" y="1764.4" width="8" height="44.6" fill="url(#g51)"/>
<rect x="2335" y="1757" width="8" height="7.4" fill="#ffd93d"/>
<rect x="2335" y="1750.5" width="8" height="6.5" fill="#f5780e"/>
<rect x="2335" y="1742" width="8" height="2.8" fill="#f5780e"/>
<rect x="2345" y="1764.4" width="8" height="44.6" fill="url(#g51)"/>
<rect x="2345" y="1757" width="8" height="7.4" fill="#ffd93d"/>
<rect x="2345" y="1750.5" width="8" height="6.5" fill="#f5780e"/>
<rect x="2345" y="1742" width="8" height="2.8" fill="#f5780e"/>
<path d="M2337 1366.9H2936V1376.8H2354.8V1382.7H2337Z" fill="#426b84"/>
<rect x="2365.4" y="1383" width="570.4" height="437" rx="10" fill="#555555"/>
<path d="M2365.4 1393A10 10 0 0 1 2375.4 1383H2419.4V1820H2375.4A10 10 0 0 1 2365.4 1810Z" fill="#484848"/>
<path d="M2396.9 1403.6A8.6 8.6 0 1 1 2387.5 1403.6" fill="none" stroke="#f58a1f" stroke-width="3.2" stroke-linecap="round"/>
<line x1="2392.2" y1="1399.5" x2="2392.2" y2="1410.5" stroke="#f58a1f" stroke-width="3.2" stroke-linecap="round"/>
<path d="M2381.2 1443H2391.2V1446H2403.2V1460H2381.2Z" fill="#9c9c9c"/>
<line x1="2381.2" y1="1447.3" x2="2392.2" y2="1447.3" stroke="#484848" stroke-width="1.3" />
<text transform="translate(2400.2 1602) rotate(-90)" font-size="22" fill="#ffffff" text-anchor="middle" textLength="148" lengthAdjust="spacingAndGlyphs">TREEMONSTER</text>
<circle cx="2384.2" cy="1760" r="2.8" fill="#8c8c8c"/>
<circle cx="2384.2" cy="1768" r="2.8" fill="#8c8c8c"/>
<circle cx="2392.2" cy="1760" r="2.8" fill="#8c8c8c"/>
<circle cx="2392.2" cy="1768" r="2.8" fill="#8c8c8c"/>
<circle cx="2400.2" cy="1760" r="2.8" fill="#8c8c8c"/>
<circle cx="2400.2" cy="1768" r="2.8" fill="#8c8c8c"/>
<circle cx="2385.2" cy="1797.8" r="4" fill="none" stroke="#8c8c8c" stroke-width="2.2"/>
<line x1="2389.2" y1="1797.8" x2="2398.2" y2="1797.8" stroke="#8c8c8c" stroke-width="2.4" />
<path d="M2396.2 1792.3L2404.2 1797.8L2396.2 1803.3Z" fill="#8c8c8c"/>
<rect x="2425" y="1388.7" width="394" height="425.5" rx="4" fill="#1a1a1a"/>
<clipPath id="tm"><rect x="2425" y="1388.7" width="394" height="274"/></clipPath><g clip-path="url(#tm)">
<line x1="2438.7" y1="1388.7" x2="2438.7" y2="1662.5" stroke="#2a2a2a" stroke-width="1" />
<line x1="2460.3" y1="1388.7" x2="2460.3" y2="1662.5" stroke="#2a2a2a" stroke-width="1" />
<line x1="2475.7" y1="1388.7" x2="2475.7" y2="1662.5" stroke="#2a2a2a" stroke-width="1" />
<line x1="2487.6" y1="1388.7" x2="2487.6" y2="1662.5" stroke="#2a2a2a" stroke-width="1" />
<line x1="2497.4" y1="1388.7" x2="2497.4" y2="1662.5" stroke="#2a2a2a" stroke-width="1" />
<line x1="2505.6" y1="1388.7" x2="2505.6" y2="1662.5" stroke="#2a2a2a" stroke-width="1" />
<line x1="2512.8" y1="1388.7" x2="2512.8" y2="1662.5" stroke="#2a2a2a" stroke-width="1" />
<line x1="2519.1" y1="1388.7" x2="2519.1" y2="1662.5" stroke="#2a2a2a" stroke-width="1" />
<line x1="2524.7" y1="1388.7" x2="2524.7" y2="1662.5" stroke="#3a3a3a" stroke-width="1" />
<line x1="2561.8" y1="1388.7" x2="2561.8" y2="1662.5" stroke="#2a2a2a" stroke-width="1" />
<line x1="2583.4" y1="1388.7" x2="2583.4" y2="1662.5" stroke="#2a2a2a" stroke-width="1" />
<line x1="2598.8" y1="1388.7" x2="2598.8" y2="1662.5" stroke="#2a2a2a" stroke-width="1" />
<line x1="2610.7" y1="1388.7" x2="2610.7" y2="1662.5" stroke="#2a2a2a" stroke-width="1" />
<line x1="2620.5" y1="1388.7" x2="2620.5" y2="1662.5" stroke="#2a2a2a" stroke-width="1" />
<line x1="2628.7" y1="1388.7" x2="2628.7" y2="1662.5" stroke="#2a2a2a" stroke-width="1" />
<line x1="2635.9" y1="1388.7" x2="2635.9" y2="1662.5" stroke="#2a2a2a" stroke-width="1" />
<line x1="2642.2" y1="1388.7" x2="2642.2" y2="1662.5" stroke="#2a2a2a" stroke-width="1" />
<line x1="2647.8" y1="1388.7" x2="2647.8" y2="1662.5" stroke="#3a3a3a" stroke-width="1" />
<line x1="2684.9" y1="1388.7" x2="2684.9" y2="1662.5" stroke="#2a2a2a" stroke-width="1" />
<line x1="2706.5" y1="1388.7" x2="2706.5" y2="1662.5" stroke="#2a2a2a" stroke-width="1" />
<line x1="2721.9" y1="1388.7" x2="2721.9" y2="1662.5" stroke="#2a2a2a" stroke-width="1" />
<line x1="2733.8" y1="1388.7" x2="2733.8" y2="1662.5" stroke="#2a2a2a" stroke-width="1" />
<line x1="2743.6" y1="1388.7" x2="2743.6" y2="1662.5" stroke="#2a2a2a" stroke-width="1" />
<line x1="2751.8" y1="1388.7" x2="2751.8" y2="1662.5" stroke="#2a2a2a" stroke-width="1" />
<line x1="2759" y1="1388.7" x2="2759" y2="1662.5" stroke="#2a2a2a" stroke-width="1" />
<line x1="2765.3" y1="1388.7" x2="2765.3" y2="1662.5" stroke="#2a2a2a" stroke-width="1" />
<line x1="2770.9" y1="1388.7" x2="2770.9" y2="1662.5" stroke="#3a3a3a" stroke-width="1" />
<line x1="2425" y1="1401.5" x2="2819" y2="1401.5" stroke="#303030" stroke-width="1" />
<line x1="2425" y1="1455.8" x2="2819" y2="1455.8" stroke="#303030" stroke-width="1" />
<line x1="2425" y1="1510" x2="2819" y2="1510" stroke="#303030" stroke-width="1" />
<line x1="2425" y1="1564.4" x2="2819" y2="1564.4" stroke="#303030" stroke-width="1" />
<line x1="2425" y1="1618.5" x2="2819" y2="1618.5" stroke="#303030" stroke-width="1" />
<line x1="2425" y1="1428.6" x2="2771" y2="1428.6" stroke="#242424" stroke-width="1" />
<line x1="2425" y1="1483" x2="2771" y2="1483" stroke="#242424" stroke-width="1" />
<line x1="2425" y1="1537.2" x2="2771" y2="1537.2" stroke="#242424" stroke-width="1" />
<line x1="2425" y1="1591.4" x2="2771" y2="1591.4" stroke="#242424" stroke-width="1" />
<line x1="2425" y1="1645.6" x2="2771" y2="1645.6" stroke="#242424" stroke-width="1" />
<path d="M2442.6 1662.6L2452.2 1637.8L2473.7 1601.3L2495.2 1562.6L2516.7 1534.7L2533.9 1517.5L2553.2 1505.7L2570.4 1508.9L2583.3 1496L2594 1508.9L2609.1 1493.9L2626.3 1487.4L2634.9 1496L2643.5 1481L2656.4 1476.7L2667.1 1453.1L2677.8 1444.5L2688.6 1448.8L2697.2 1440.2L2705.8 1465.9L2716.5 1457.4L2723 1474.5L2733.7 1500.3L2740.2 1530.4L2748.7 1594.9L2759.5 1659.3L2761.6 1662.6Z" fill="#2b2b2b" stroke-linejoin="round"/>
<path d="M2424.7 1553.6L2452.2 1543.3L2484.5 1531.5L2501.7 1528.3L2516.7 1528.3L2536 1523.5L2545.7 1527.8L2553.2 1512.1L2560.7 1507.8L2566.1 1513.2L2571.5 1526.8L2581.2 1524.4L2589.7 1529.3L2596.6 1536.9L2604.8 1506.8L2609.5 1499.3L2615.5 1511.1L2622 1530L2627.3 1520.7L2632.7 1521.8L2638.1 1520.7L2644.5 1501.4L2649.9 1460.6L2656.4 1464.9L2665 1480.6L2670.3 1477.8L2675.7 1433.7L2682.1 1443.4L2690.7 1426.2L2697.2 1415.5L2700.4 1429.4L2703.6 1493.9L2709 1471.3L2713.3 1485.3L2720.8 1481L2729.4 1470.2L2735.9 1453.1L2741.2 1477.8L2748.7 1468.1L2755.2 1459.9L2759.5 1467L2765.9 1455.2L2773.5 1427.7L2778.8 1459.5L2785.3 1457.4L2792.8 1435.9L2798.2 1456.3L2805.7 1449.8" fill="none" stroke="#a0a0a0" stroke-width="2" stroke-linejoin="round"/>
<line x1="2425" y1="1438.6" x2="2819" y2="1438.6" stroke="#d8d8d8" stroke-width="1" />
<line x1="2688.2" y1="1388.7" x2="2688.2" y2="1662.5" stroke="#d8d8d8" stroke-width="1" />
<circle cx="2688.2" cy="1438.6" r="3.2" fill="#fff"/>
<line x1="2425" y1="1486.8" x2="2819" y2="1486.8" stroke="#f0d43a" stroke-width="2.4" />
<line x1="2525.3" y1="1388.7" x2="2525.3" y2="1662.5" stroke="#f0284f" stroke-width="2.6" />
<line x1="2723.3" y1="1388.7" x2="2723.3" y2="1662.5" stroke="#4fa8f2" stroke-width="2.6" />
</g>
<text x="2444.3" y="1419.5" font-size="18.5" fill="#8a8a8a">20</text>
<text x="2530.7" y="1419.5" font-size="18.5" fill="#8a8a8a">100</text>
<text x="2653.6" y="1419.5" font-size="18.5" fill="#8a8a8a">1k</text>
<text x="2776.7" y="1419.5" font-size="18.5" fill="#8a8a8a">10k</text>
<text x="2793.6" y="1466.3" font-size="18.5" fill="#8a8a8a" text-anchor="middle">-20</text>
<text x="2793.6" y="1519.2" font-size="18.5" fill="#8a8a8a" text-anchor="middle">-40</text>
<text x="2793.6" y="1574.2" font-size="18.5" fill="#8a8a8a" text-anchor="middle">-60</text>
<text x="2793.6" y="1628" font-size="18.5" fill="#8a8a8a" text-anchor="middle">-80</text>
<circle cx="2525.3" cy="1486.8" r="12" fill="#f0284f"/>
<path d="M2521.5 1490V1483.5H2528" fill="none" stroke="#5a0a1a" stroke-width="1.8"/>
<circle cx="2723.3" cy="1486.8" r="12" fill="#4fa8f2"/>
<path d="M2719.5 1483.5H2726V1490" fill="none" stroke="#183a5a" stroke-width="1.8"/>
<text x="2526.6" y="1695.4" font-size="22" fill="#f0284f" text-anchor="middle">103 Hz</text>
<text x="2717.8" y="1695.4" font-size="22" fill="#4fa8f2" text-anchor="middle">4.18 kHz</text>
<path d="M2454 1770.2A34 34 0 1 1 2502 1770.2" fill="none" stroke="#4d4d4d" stroke-width="4.1" stroke-linecap="butt"/>
<path d="M2476.2 1712.2A34 34 0 0 1 2479.8 1712.2" fill="none" stroke="#f58a1f" stroke-width="4.1" stroke-linecap="butt"/>
<circle cx="2478" cy="1746.2" r="24" fill="url(#g11)"/>
<line x1="2478" y1="1740" x2="2478" y2="1722.7" stroke="#111" stroke-width="4.3" />
<text x="2478" y="1799" font-size="22" fill="#d6d6d6" text-anchor="middle">Pitch</text>
<path d="M2550 1770.2A34 34 0 1 1 2598 1770.2" fill="none" stroke="#4d4d4d" stroke-width="4.1" stroke-linecap="butt"/>
<path d="M2600 1724.3A34 34 0 0 1 2598 1770.2" fill="none" stroke="#f58a1f" stroke-width="4.1" stroke-linecap="butt"/>
<circle cx="2574" cy="1746.2" r="24" fill="url(#g11)"/>
<line x1="2578.8" y1="1742.2" x2="2592" y2="1731.1" stroke="#111" stroke-width="4.3" />
<text x="2574" y="1799" font-size="22" fill="#d6d6d6" text-anchor="middle">Threshold</text>
<rect x="2610.8" y="1711" width="14.8" height="14" fill="#f0d43a"/>
<path d="M2645.6 1770.2A34 34 0 1 1 2693.6 1770.2" fill="none" stroke="#4d4d4d" stroke-width="4.1" stroke-linecap="butt"/>
<path d="M2645.6 1770.2A34 34 0 0 1 2658 1714.3" fill="none" stroke="#f58a1f" stroke-width="4.1" stroke-linecap="butt"/>
<circle cx="2669.6" cy="1746.2" r="24" fill="url(#g11)"/>
<line x1="2667.5" y1="1740.3" x2="2661.6" y2="1724.1" stroke="#111" stroke-width="4.3" />
<text x="2669.6" y="1799" font-size="22" fill="#d6d6d6" text-anchor="middle">Speed</text>
<path d="M2742 1770.2A34 34 0 1 1 2790 1770.2" fill="none" stroke="#4d4d4d" stroke-width="4.1" stroke-linecap="butt"/>
<path d="M2742 1770.2A34 34 0 0 1 2763 1712.3" fill="none" stroke="#f58a1f" stroke-width="4.1" stroke-linecap="butt"/>
<circle cx="2766" cy="1746.2" r="24" fill="url(#g11)"/>
<line x1="2765.5" y1="1740" x2="2764" y2="1722.8" stroke="#111" stroke-width="4.3" />
<text x="2766" y="1799" font-size="22" fill="#d6d6d6" text-anchor="middle">Ring</text>
<rect x="2824.9" y="1390" width="105.4" height="64" rx="6" fill="#1e1e1e"/>
<path d="M2831 1403V1395H2925.2V1403H2921.2V1399H2835V1403Z" fill="#43884f"/>
<rect x="2839" y="1403" width="17.8" height="45.8" fill="#424242"/>
<text x="2878.4" y="1430" font-size="21.5" fill="#fff" text-anchor="middle" textLength="69.5" lengthAdjust="spacingAndGlyphs" stroke="#fff" stroke-width="0.35">Wet FX</text>
<rect x="2824.9" y="1461.4" width="105.4" height="352.8" rx="4" fill="#3c3c3c"/>
<path d="M2854.2 1770.2A34 34 0 1 1 2902.2 1770.2" fill="none" stroke="#4d4d4d" stroke-width="4.1" stroke-linecap="butt"/>
<path d="M2854.2 1770.2A34 34 0 1 1 2902.2 1770.2" fill="none" stroke="#f58a1f" stroke-width="4.1" stroke-linecap="butt"/>
<circle cx="2878.2" cy="1746.2" r="24.5" fill="url(#g12)"/>
<line x1="2882.7" y1="1752" x2="2892.8" y2="1764.9" stroke="#e4e4e4" stroke-width="5.2" />
<text x="2878.2" y="1799" font-size="22" fill="#d6d6d6" text-anchor="middle">Mix</text>
<path d="M2950 1366.9H3060.5V1376.8H2968V1382.7H2950Z" fill="#43884f"/>
<line x1="2947.9" y1="1602.3" x2="2965.9" y2="1602.3" stroke="#3d8a50" stroke-width="3" />
<line x1="2956.9" y1="1593.3" x2="2956.9" y2="1611.3" stroke="#3d8a50" stroke-width="3" />
<rect x="2948" y="1764.4" width="8" height="44.6" fill="url(#g52)"/>
<rect x="2948" y="1757" width="8" height="7.4" fill="#ffd93d"/>
<rect x="2948" y="1736.5" width="8" height="20.5" fill="#f5780e"/>
<rect x="2958" y="1764.4" width="8" height="44.6" fill="url(#g52)"/>
<rect x="2958" y="1757" width="8" height="7.4" fill="#ffd93d"/>
<rect x="2958" y="1736.5" width="8" height="20.5" fill="#f5780e"/>
<clipPath id="b8"><rect x="2970" y="1380" width="90.5" height="445"/></clipPath><g clip-path="url(#b8)">
<rect x="2978" y="1383" width="142" height="437" rx="10" fill="#555555"/>
<path d="M2978 1393A10 10 0 0 1 2988 1383H3032V1820H2988A10 10 0 0 1 2978 1810Z" fill="#484848"/>
<path d="M3009.7 1403.6A8.6 8.6 0 1 1 3000.3 1403.6" fill="none" stroke="#f58a1f" stroke-width="3.2" stroke-linecap="round"/>
<line x1="3005" y1="1399.5" x2="3005" y2="1410.5" stroke="#f58a1f" stroke-width="3.2" stroke-linecap="round"/>
<path d="M2994 1443H3004V1446H3016V1460H2994Z" fill="#9c9c9c"/>
<line x1="2994" y1="1447.3" x2="3005" y2="1447.3" stroke="#484848" stroke-width="1.3" />
<text transform="translate(3013 1602) rotate(-90)" font-size="22" fill="#ffffff" text-anchor="middle" textLength="50" lengthAdjust="spacingAndGlyphs">BIT-8</text>
<circle cx="2997" cy="1760" r="2.8" fill="#8c8c8c"/>
<circle cx="2997" cy="1768" r="2.8" fill="#8c8c8c"/>
<circle cx="3005" cy="1760" r="2.8" fill="#8c8c8c"/>
<circle cx="3005" cy="1768" r="2.8" fill="#8c8c8c"/>
<circle cx="3013" cy="1760" r="2.8" fill="#8c8c8c"/>
<circle cx="3013" cy="1768" r="2.8" fill="#8c8c8c"/>
<circle cx="2998" cy="1797.8" r="4" fill="none" stroke="#8c8c8c" stroke-width="2.2"/>
<line x1="3002" y1="1797.8" x2="3011" y2="1797.8" stroke="#8c8c8c" stroke-width="2.4" />
<path d="M3009 1792.3L3017 1797.8L3009 1803.3Z" fill="#8c8c8c"/>
<rect x="3038" y="1388.7" width="80" height="425.5" rx="4" fill="#3c3c3c"/>
<circle cx="3078" cy="1462" r="24" fill="none" stroke="#8a7a2a" stroke-width="3.6"/>
<circle cx="3078" cy="1602" r="24" fill="none" stroke="#8a7a2a" stroke-width="3.6"/>
<circle cx="3078" cy="1720" r="24" fill="none" stroke="#8a7a2a" stroke-width="3.6"/>
</g>
<rect x="3040" y="1360" width="20.5" height="478" fill="url(#g53)"/>
</svg>
</body></html>
